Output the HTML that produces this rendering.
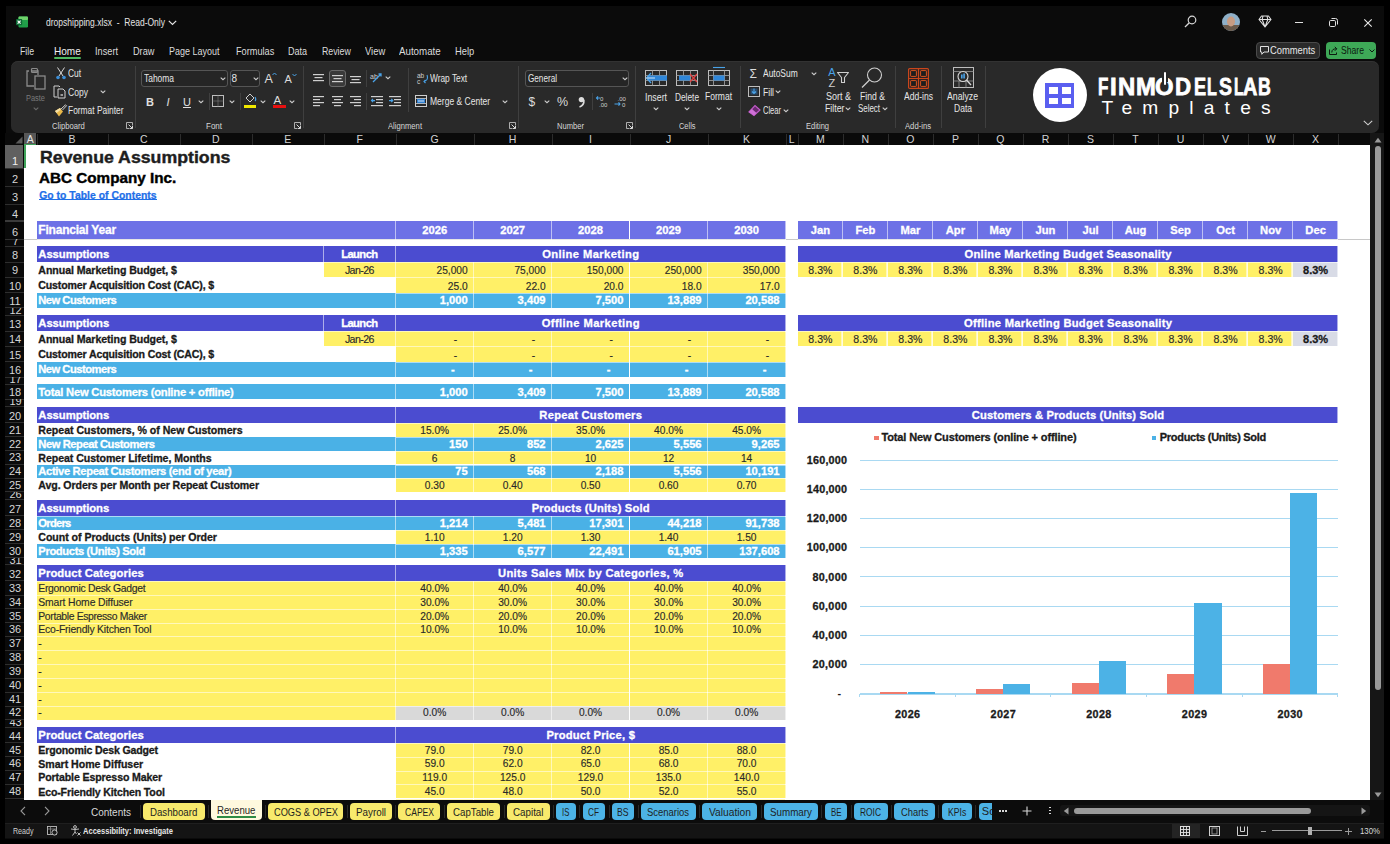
<!DOCTYPE html>
<html><head><meta charset="utf-8"><title>dropshipping.xlsx</title>
<style>
html,body{margin:0;padding:0;}
body{width:1390px;height:844px;overflow:hidden;position:relative;background:#000;font-family:'Liberation Sans', sans-serif;}
.t{position:absolute;white-space:pre;}
svg{overflow:visible;}
</style></head><body>
<div style="position:absolute;left:5.50px;top:5.60px;width:1378.60px;height:833.40px;background:#0b0b0b;"></div>
<div style="position:absolute;left:5.00px;top:133.00px;width:1379.00px;height:706.00px;background:#0b0b0b;"></div>
<svg style="position:absolute;left:16px;top:16px;" width="12" height="12" viewBox="0 0 12 12"><rect x="2.5" y="0.5" width="9.5" height="11" rx="1.2" fill="#1f9e48"/><rect x="2.5" y="0.5" width="9.5" height="3.6" rx="1" fill="#6fd26a"/><rect x="2.5" y="4" width="9.5" height="4" fill="#22a04a"/><rect x="0" y="3" width="6.2" height="6.2" rx="0.8" fill="#0d6b35"/><path d="M1.6 4.6 L4.6 7.6 M4.6 4.6 L1.6 7.6" stroke="#fff" stroke-width="1.2"/></svg>
<div class="t" style="left:46.00px;top:16.69px;font-size:11px;line-height:11px;color:#e4e4e4;transform:scaleX(0.7755);transform-origin:0 0;">dropshipping.xlsx  -  Read-Only</div>
<svg style="position:absolute;left:168px;top:20px;" width="9" height="6" viewBox="0 0 9 6"><path d="M0.8 0.8 L4.5 4.5 L8.2 0.8" stroke="#e4e4e4" stroke-width="1.2" fill="none"/></svg>
<svg style="position:absolute;left:1184px;top:15px;" width="13" height="13" viewBox="0 0 13 13"><circle cx="8" cy="5" r="3.8" stroke="#d8d8d8" stroke-width="1.2" fill="none"/><path d="M5.3 7.7 L1 12" stroke="#d8d8d8" stroke-width="1.3"/></svg>
<svg style="position:absolute;left:1222px;top:13px;" width="18" height="18" viewBox="0 0 18 18"><defs><clipPath id="av"><circle cx="9" cy="9" r="9"/></clipPath></defs><g clip-path="url(#av)"><rect width="18" height="18" fill="#8fb0c8"/><rect y="12" width="18" height="6" fill="#6b5a4a"/><ellipse cx="9" cy="8.5" rx="4" ry="5" fill="#c89c82"/></g></svg>
<svg style="position:absolute;left:1258px;top:15px;" width="14" height="13" viewBox="0 0 14 13"><path d="M3.5 1 H10.5 L13 4.5 L7 12 L1 4.5 Z M1 4.5 H13 M5 1 L4.2 4.5 L7 12 L9.8 4.5 L9 1" stroke="#e0e0e0" stroke-width="1.1" fill="none" stroke-linejoin="round"/></svg>
<div style="position:absolute;left:1294.50px;top:21.60px;width:8.50px;height:1.10px;background:#e0e0e0;"></div>
<svg style="position:absolute;left:1328.5px;top:17.5px;" width="9" height="9" viewBox="0 0 9 9"><rect x="0.5" y="2.5" width="6" height="6" rx="1.2" stroke="#e0e0e0" stroke-width="1" fill="none"/><path d="M2.5 0.5 H6.5 A2 2 0 0 1 8.5 2.5 V6.5" stroke="#e0e0e0" stroke-width="1" fill="none"/></svg>
<svg style="position:absolute;left:1363.5px;top:18.5px;" width="8" height="8" viewBox="0 0 8 8"><path d="M0.3 0.3 L7.7 7.7 M7.7 0.3 L0.3 7.7" stroke="#e8e8e8" stroke-width="1.1"/></svg>
<div class="t" style="left:20.40px;top:45.86px;font-size:10.8px;line-height:10.8px;color:#dcdcdc;transform:scaleX(0.8105);transform-origin:0 0;">File</div>
<div class="t" style="left:53.50px;top:45.86px;font-size:10.8px;line-height:10.8px;color:#f0f0f0;transform:scaleX(0.9305);transform-origin:0 0;">Home</div>
<div class="t" style="left:94.60px;top:45.86px;font-size:10.8px;line-height:10.8px;color:#dcdcdc;transform:scaleX(0.8518);transform-origin:0 0;">Insert</div>
<div class="t" style="left:132.60px;top:45.86px;font-size:10.8px;line-height:10.8px;color:#dcdcdc;transform:scaleX(0.8494);transform-origin:0 0;">Draw</div>
<div class="t" style="left:169.30px;top:45.86px;font-size:10.8px;line-height:10.8px;color:#dcdcdc;transform:scaleX(0.8312);transform-origin:0 0;">Page Layout</div>
<div class="t" style="left:235.50px;top:45.86px;font-size:10.8px;line-height:10.8px;color:#dcdcdc;transform:scaleX(0.8512);transform-origin:0 0;">Formulas</div>
<div class="t" style="left:287.70px;top:45.86px;font-size:10.8px;line-height:10.8px;color:#dcdcdc;transform:scaleX(0.8375);transform-origin:0 0;">Data</div>
<div class="t" style="left:321.60px;top:45.86px;font-size:10.8px;line-height:10.8px;color:#dcdcdc;transform:scaleX(0.8135);transform-origin:0 0;">Review</div>
<div class="t" style="left:364.70px;top:45.86px;font-size:10.8px;line-height:10.8px;color:#dcdcdc;transform:scaleX(0.8704);transform-origin:0 0;">View</div>
<div class="t" style="left:399.30px;top:45.86px;font-size:10.8px;line-height:10.8px;color:#dcdcdc;transform:scaleX(0.9023);transform-origin:0 0;">Automate</div>
<div class="t" style="left:455.40px;top:45.86px;font-size:10.8px;line-height:10.8px;color:#dcdcdc;transform:scaleX(0.8692);transform-origin:0 0;">Help</div>
<div style="position:absolute;left:53.50px;top:57.20px;width:27.30px;height:1.80px;background:#4fb860;border-radius:1px;"></div>
<div style="position:absolute;left:1255.50px;top:41.70px;width:64.10px;height:17.10px;background:#2a2a2a;border:1px solid #4a4a4a;border-radius:4px;box-sizing:border-box;"></div>
<svg style="position:absolute;left:1259.5px;top:45.5px;" width="9" height="9" viewBox="0 0 9 9"><path d="M0.5 0.5 H8.5 V6 H4 L1.8 8.3 V6 H0.5 Z" stroke="#e0e0e0" stroke-width="1" fill="none" stroke-linejoin="round"/></svg>
<div class="t" style="left:1270.00px;top:45.11px;font-size:10.5px;line-height:10.5px;color:#e8e8e8;transform:scaleX(0.8924);transform-origin:0 0;">Comments</div>
<div style="position:absolute;left:1325.90px;top:41.70px;width:50.10px;height:17.10px;background:#3ea857;border-radius:4px;"></div>
<svg style="position:absolute;left:1329px;top:45.5px;" width="9" height="9" viewBox="0 0 9 9"><path d="M0.5 3.5 V8.5 H7.5 V6.5 M2.8 6.5 C2.8 3.5 4.5 2.8 7.5 2.8 M5.8 0.8 L7.8 2.8 L5.8 4.8" stroke="#0c1a10" stroke-width="1" fill="none"/></svg>
<div class="t" style="left:1341.00px;top:45.11px;font-size:10.5px;line-height:10.5px;color:#0c1a10;transform:scaleX(0.8209);transform-origin:0 0;">Share</div>
<svg style="position:absolute;left:1368.5px;top:48.5px;" width="6" height="4" viewBox="0 0 6 4"><path d="M0.5 0.5 L3 3 L5.5 0.5" stroke="#0c1a10" stroke-width="1" fill="none"/></svg>
<div style="position:absolute;left:11.00px;top:61.20px;width:1367.50px;height:71.60px;background:#292929;border-radius:7px;box-shadow:inset 0 1px 0 #323232;"></div>
<div style="position:absolute;left:135.40px;top:66.00px;width:1.00px;height:62.00px;background:#3f3f3f;"></div>
<div style="position:absolute;left:303.30px;top:66.00px;width:1.00px;height:62.00px;background:#3f3f3f;"></div>
<div style="position:absolute;left:517.80px;top:66.00px;width:1.00px;height:62.00px;background:#3f3f3f;"></div>
<div style="position:absolute;left:634.70px;top:66.00px;width:1.00px;height:62.00px;background:#3f3f3f;"></div>
<div style="position:absolute;left:739.70px;top:66.00px;width:1.00px;height:62.00px;background:#3f3f3f;"></div>
<div style="position:absolute;left:894.80px;top:66.00px;width:1.00px;height:62.00px;background:#3f3f3f;"></div>
<div style="position:absolute;left:940.50px;top:66.00px;width:1.00px;height:62.00px;background:#3f3f3f;"></div>
<div style="position:absolute;left:984.80px;top:66.00px;width:1.00px;height:62.00px;background:#3f3f3f;"></div>
<div class="t" style="left:52.00px;top:120.87px;font-size:9.6px;line-height:9.6px;color:#d6d6d6;transform:scaleX(0.7988);transform-origin:0 0;">Clipboard</div>
<div class="t" style="left:205.50px;top:120.87px;font-size:9.6px;line-height:9.6px;color:#d6d6d6;transform:scaleX(0.8335);transform-origin:0 0;">Font</div>
<div class="t" style="left:388.00px;top:120.87px;font-size:9.6px;line-height:9.6px;color:#d6d6d6;transform:scaleX(0.7970);transform-origin:0 0;">Alignment</div>
<div class="t" style="left:556.90px;top:120.87px;font-size:9.6px;line-height:9.6px;color:#d6d6d6;transform:scaleX(0.7913);transform-origin:0 0;">Number</div>
<div class="t" style="left:678.75px;top:120.87px;font-size:9.6px;line-height:9.6px;color:#d6d6d6;transform:scaleX(0.7738);transform-origin:0 0;">Cells</div>
<div class="t" style="left:805.50px;top:120.87px;font-size:9.6px;line-height:9.6px;color:#d6d6d6;transform:scaleX(0.7841);transform-origin:0 0;">Editing</div>
<div class="t" style="left:905.00px;top:120.87px;font-size:9.6px;line-height:9.6px;color:#d6d6d6;transform:scaleX(0.7993);transform-origin:0 0;">Add-ins</div>
<svg style="position:absolute;left:126.19999999999999px;top:122.0px;" width="7" height="7" viewBox="0 0 7 7"><path d="M6.5 3 V0.5 H0.5 V6.5 H3" stroke="#bdbdbd" stroke-width="0.9" fill="none"/><path d="M2.5 2.5 L6.3 6.3 M6.5 3.6 V6.5 H3.6" stroke="#d8d8d8" stroke-width="1" fill="none"/></svg>
<svg style="position:absolute;left:294.2px;top:122.0px;" width="7" height="7" viewBox="0 0 7 7"><path d="M6.5 3 V0.5 H0.5 V6.5 H3" stroke="#bdbdbd" stroke-width="0.9" fill="none"/><path d="M2.5 2.5 L6.3 6.3 M6.5 3.6 V6.5 H3.6" stroke="#d8d8d8" stroke-width="1" fill="none"/></svg>
<svg style="position:absolute;left:509.29999999999995px;top:122.0px;" width="7" height="7" viewBox="0 0 7 7"><path d="M6.5 3 V0.5 H0.5 V6.5 H3" stroke="#bdbdbd" stroke-width="0.9" fill="none"/><path d="M2.5 2.5 L6.3 6.3 M6.5 3.6 V6.5 H3.6" stroke="#d8d8d8" stroke-width="1" fill="none"/></svg>
<svg style="position:absolute;left:625.5px;top:122.0px;" width="7" height="7" viewBox="0 0 7 7"><path d="M6.5 3 V0.5 H0.5 V6.5 H3" stroke="#bdbdbd" stroke-width="0.9" fill="none"/><path d="M2.5 2.5 L6.3 6.3 M6.5 3.6 V6.5 H3.6" stroke="#d8d8d8" stroke-width="1" fill="none"/></svg>
<svg style="position:absolute;left:25px;top:67px;" width="22" height="23" viewBox="0 0 22 23"><path d="M4 4 H2 V19 H9" stroke="#8a8a8a" stroke-width="1.3" fill="none"/><path d="M6 4 H13 V8" stroke="#8a8a8a" stroke-width="1.3" fill="none"/><rect x="6.5" y="1.5" width="6" height="4" rx="1" stroke="#8a8a8a" stroke-width="1.2" fill="none"/><rect x="10" y="9" width="10" height="13" stroke="#8a8a8a" stroke-width="1.3" fill="none"/></svg>
<div class="t" style="left:26.00px;top:92.87px;font-size:9.6px;line-height:9.6px;color:#7a7a7a;transform:scaleX(0.7745);transform-origin:0 0;">Paste</div>
<svg style="position:absolute;left:32.5px;top:106.5px;" width="6" height="4" viewBox="0 0 6 4"><path d="M0.7 0.7 L3 2.7 L5.3 0.7" stroke="#6a6a6a" stroke-width="1.1" fill="none"/></svg>
<svg style="position:absolute;left:55px;top:67px;" width="12" height="13" viewBox="0 0 12 13"><path d="M2.5 0.5 L8 9 M9.5 0.5 L4 9" stroke="#d8d8d8" stroke-width="1"/><circle cx="3" cy="10.5" r="1.8" fill="#3b8fd8"/><circle cx="9" cy="10.5" r="1.8" fill="#3b8fd8"/></svg>
<div class="t" style="left:68.00px;top:68.53px;font-size:10px;line-height:10px;color:#e6e6e6;transform:scaleX(0.8354);transform-origin:0 0;">Cut</div>
<svg style="position:absolute;left:53px;top:85px;" width="13" height="14" viewBox="0 0 13 14"><path d="M4 12 H1 V1 H6 L7 2" stroke="#cfcfcf" stroke-width="1" fill="none"/><path d="M5 4 H10 L12 6 V13 H5 Z" stroke="#cfcfcf" stroke-width="1" fill="none"/><rect x="7.5" y="9" width="2.5" height="2" fill="#9a9a9a"/></svg>
<div class="t" style="left:68.00px;top:87.53px;font-size:10px;line-height:10px;color:#e6e6e6;transform:scaleX(0.8567);transform-origin:0 0;">Copy</div>
<svg style="position:absolute;left:100px;top:90.0px;" width="6" height="4" viewBox="0 0 6 4"><path d="M0.7 0.7 L3 2.7 L5.3 0.7" stroke="#cfcfcf" stroke-width="1.1" fill="none"/></svg>
<svg style="position:absolute;left:53.5px;top:104px;" width="13" height="13" viewBox="0 0 13 13"><path d="M7 5 L11.5 0.8 L12.5 1.8 L8.5 6" stroke="#cfcfcf" stroke-width="1" fill="none"/><path d="M1 7 L6 4 L9 7.5 L5 12.5 Z" fill="#e8b84a"/><path d="M1 7 L6 4 L7 5.5 L2.5 9 Z" fill="#f4e0a8"/></svg>
<div class="t" style="left:68.00px;top:105.53px;font-size:10px;line-height:10px;color:#e6e6e6;transform:scaleX(0.8392);transform-origin:0 0;">Format Painter</div>
<div style="position:absolute;left:141.40px;top:70.10px;width:86.40px;height:17.40px;background:#252525;border:1px solid #555;border-radius:3px;box-sizing:border-box;"></div>
<div class="t" style="left:143.50px;top:73.53px;font-size:10px;line-height:10px;color:#e6e6e6;transform:scaleX(0.8433);transform-origin:0 0;">Tahoma</div>
<svg style="position:absolute;left:220px;top:77.0px;" width="6" height="4" viewBox="0 0 6 4"><path d="M0.7 0.7 L3 2.7 L5.3 0.7" stroke="#cfcfcf" stroke-width="1.1" fill="none"/></svg>
<div style="position:absolute;left:229.50px;top:70.10px;width:30.70px;height:17.40px;background:#252525;border:1px solid #555;border-radius:3px;box-sizing:border-box;"></div>
<div class="t" style="left:231.50px;top:73.53px;font-size:10px;line-height:10px;color:#e6e6e6;">8</div>
<svg style="position:absolute;left:253px;top:77.0px;" width="6" height="4" viewBox="0 0 6 4"><path d="M0.7 0.7 L3 2.7 L5.3 0.7" stroke="#cfcfcf" stroke-width="1.1" fill="none"/></svg>
<div class="t" style="left:264.50px;top:73.42px;font-size:12.5px;line-height:12.5px;color:#dcdcdc;">A</div>
<svg style="position:absolute;left:272px;top:72px;" width="5" height="4" viewBox="0 0 5 4"><path d="M0.5 3 L2.5 1 L4.5 3" stroke="#4aa3e8" stroke-width="1" fill="none"/></svg>
<div class="t" style="left:284.50px;top:73.69px;font-size:11px;line-height:11px;color:#dcdcdc;">A</div>
<svg style="position:absolute;left:291.5px;top:73px;" width="5" height="4" viewBox="0 0 5 4"><path d="M0.5 1 L2.5 3 L4.5 1" stroke="#4aa3e8" stroke-width="1" fill="none"/></svg>
<div class="t" style="left:146.00px;top:96.69px;font-size:11px;line-height:11px;color:#e0e0e0;font-weight:bold;">B</div>
<div class="t" style="left:166.50px;top:96.69px;font-size:11px;line-height:11px;color:#e0e0e0;font-style:italic;">I</div>
<div class="t" style="left:183.00px;top:96.69px;font-size:11px;line-height:11px;color:#e0e0e0;text-decoration:underline;">U</div>
<svg style="position:absolute;left:197.6px;top:99.5px;" width="6" height="4" viewBox="0 0 6 4"><path d="M0.7 0.7 L3 2.7 L5.3 0.7" stroke="#cfcfcf" stroke-width="1.1" fill="none"/></svg>
<div style="position:absolute;left:208.50px;top:93.00px;width:1.00px;height:17.00px;background:#3f3f3f;"></div>
<svg style="position:absolute;left:212px;top:95px;" width="12" height="12" viewBox="0 0 12 12"><rect x="0.5" y="0.5" width="11" height="11" stroke="#bdbdbd" stroke-width="1" fill="none"/><path d="M6 0.5 V11.5 M0.5 6 H11.5" stroke="#8a8a8a" stroke-width="1" stroke-dasharray="1 1"/></svg>
<svg style="position:absolute;left:229px;top:99.5px;" width="6" height="4" viewBox="0 0 6 4"><path d="M0.7 0.7 L3 2.7 L5.3 0.7" stroke="#cfcfcf" stroke-width="1.1" fill="none"/></svg>
<div style="position:absolute;left:240.00px;top:93.00px;width:1.00px;height:17.00px;background:#3f3f3f;"></div>
<svg style="position:absolute;left:244px;top:93px;" width="13" height="12" viewBox="0 0 13 12"><path d="M2 5 L6 1 L10 5 L6 9 Z" stroke="#cfcfcf" stroke-width="1" fill="none"/><path d="M11 4 Q12.5 6.5 11 8" stroke="#4aa3e8" stroke-width="1.2" fill="none"/></svg>
<div style="position:absolute;left:243.50px;top:104.50px;width:12.50px;height:3.00px;background:#f0e800;"></div>
<svg style="position:absolute;left:260px;top:99.5px;" width="6" height="4" viewBox="0 0 6 4"><path d="M0.7 0.7 L3 2.7 L5.3 0.7" stroke="#cfcfcf" stroke-width="1.1" fill="none"/></svg>
<div class="t" style="left:273.50px;top:95.27px;font-size:11.5px;line-height:11.5px;color:#dcdcdc;">A</div>
<div style="position:absolute;left:272.50px;top:104.50px;width:13.00px;height:3.00px;background:#e81010;"></div>
<svg style="position:absolute;left:289px;top:99.5px;" width="6" height="4" viewBox="0 0 6 4"><path d="M0.7 0.7 L3 2.7 L5.3 0.7" stroke="#cfcfcf" stroke-width="1.1" fill="none"/></svg>
<svg style="position:absolute;left:312.5px;top:74px;" width="12" height="12" viewBox="0 0 12 12"><rect x="0" y="0" width="11" height="1.2" fill="#cfcfcf"/><rect x="1.5" y="3" width="8" height="1.2" fill="#cfcfcf"/><rect x="0" y="6" width="11" height="1.2" fill="#cfcfcf"/></svg>
<div style="position:absolute;left:328.50px;top:69.80px;width:17.50px;height:17.40px;background:#3a3a3a;border:1px solid #6a6a6a;border-radius:3px;box-sizing:border-box;"></div>
<svg style="position:absolute;left:331.5px;top:74.5px;" width="12" height="12" viewBox="0 0 12 12"><rect x="0" y="0" width="11" height="1.2" fill="#cfcfcf"/><rect x="1.5" y="3" width="8" height="1.2" fill="#cfcfcf"/><rect x="0" y="6" width="11" height="1.2" fill="#cfcfcf"/></svg>
<svg style="position:absolute;left:350px;top:76px;" width="12" height="12" viewBox="0 0 12 12"><rect x="0" y="0" width="11" height="1.2" fill="#cfcfcf"/><rect x="1.5" y="3" width="8" height="1.2" fill="#cfcfcf"/><rect x="0" y="6" width="11" height="1.2" fill="#cfcfcf"/></svg>
<div style="position:absolute;left:365.70px;top:70.00px;width:1.00px;height:17.00px;background:#3f3f3f;"></div>
<svg style="position:absolute;left:370px;top:71px;" width="13" height="13" viewBox="0 0 13 13"><text x="0" y="8" font-size="7" fill="#cfcfcf" font-family="Liberation Sans">ab</text><path d="M3 11 L11 3 M8.5 3 H11 V5.5" stroke="#4aa3e8" stroke-width="1.3" fill="none"/></svg>
<svg style="position:absolute;left:385px;top:76.0px;" width="6" height="4" viewBox="0 0 6 4"><path d="M0.7 0.7 L3 2.7 L5.3 0.7" stroke="#cfcfcf" stroke-width="1.1" fill="none"/></svg>
<div style="position:absolute;left:407.60px;top:68.00px;width:1.00px;height:44.00px;background:#3f3f3f;"></div>
<svg style="position:absolute;left:416.5px;top:72px;" width="12" height="13" viewBox="0 0 12 13"><text x="0" y="6" font-size="6.5" fill="#cfcfcf" font-family="Liberation Sans">ab</text><text x="0" y="12" font-size="6.5" fill="#cfcfcf" font-family="Liberation Sans">c</text><path d="M10 3 Q12 8 7 9.5 M8.5 8 L7 9.5 L8.5 11" stroke="#4aa3e8" stroke-width="1.1" fill="none"/></svg>
<div class="t" style="left:429.70px;top:73.53px;font-size:10px;line-height:10px;color:#e6e6e6;transform:scaleX(0.8320);transform-origin:0 0;">Wrap Text</div>
<svg style="position:absolute;left:312.5px;top:96px;" width="12" height="12" viewBox="0 0 12 12"><rect x="0" y="0" width="11" height="1.2" fill="#cfcfcf"/><rect x="0" y="3" width="7" height="1.2" fill="#cfcfcf"/><rect x="0" y="6" width="11" height="1.2" fill="#cfcfcf"/><rect x="0" y="9" width="7" height="1.2" fill="#cfcfcf"/></svg>
<svg style="position:absolute;left:331.5px;top:96px;" width="12" height="12" viewBox="0 0 12 12"><rect x="0" y="0" width="11" height="1.2" fill="#cfcfcf"/><rect x="2" y="3" width="7" height="1.2" fill="#cfcfcf"/><rect x="0" y="6" width="11" height="1.2" fill="#cfcfcf"/><rect x="2" y="9" width="7" height="1.2" fill="#cfcfcf"/></svg>
<svg style="position:absolute;left:350px;top:96px;" width="12" height="12" viewBox="0 0 12 12"><rect x="0" y="0" width="11" height="1.2" fill="#cfcfcf"/><rect x="4" y="3" width="7" height="1.2" fill="#cfcfcf"/><rect x="0" y="6" width="11" height="1.2" fill="#cfcfcf"/><rect x="4" y="9" width="7" height="1.2" fill="#cfcfcf"/></svg>
<div style="position:absolute;left:365.70px;top:93.00px;width:1.00px;height:17.00px;background:#3f3f3f;"></div>
<svg style="position:absolute;left:370.5px;top:96px;" width="12" height="10" viewBox="0 0 12 10"><rect x="0" y="0" width="12" height="1.2" fill="#cfcfcf"/><rect x="5" y="3" width="7" height="1.2" fill="#cfcfcf"/><rect x="5" y="6" width="7" height="1.2" fill="#cfcfcf"/><rect x="0" y="9" width="12" height="1.2" fill="#cfcfcf"/><path d="M4 4.6 H0.5 M2 3 L0.5 4.6 L2 6.2" stroke="#4aa3e8" stroke-width="1.1" fill="none"/></svg>
<svg style="position:absolute;left:389px;top:96px;" width="12" height="10" viewBox="0 0 12 10"><rect x="0" y="0" width="12" height="1.2" fill="#cfcfcf"/><rect x="5" y="3" width="7" height="1.2" fill="#cfcfcf"/><rect x="5" y="6" width="7" height="1.2" fill="#cfcfcf"/><rect x="0" y="9" width="12" height="1.2" fill="#cfcfcf"/><path d="M0 4.6 H3.8 M2.3 3 L3.8 4.6 L2.3 6.2" stroke="#4aa3e8" stroke-width="1.1" fill="none"/></svg>
<svg style="position:absolute;left:415px;top:95px;" width="12" height="12" viewBox="0 0 12 12"><rect x="0.5" y="0.5" width="11" height="11" stroke="#cfcfcf" stroke-width="1" fill="none"/><rect x="2" y="3.5" width="8" height="5" fill="#2f7fd0"/><path d="M0.5 3.5 H11.5 M0.5 8.5 H11.5" stroke="#cfcfcf" stroke-width="0.8"/><path d="M3 6 H9" stroke="#fff" stroke-width="0.8"/></svg>
<div class="t" style="left:429.70px;top:96.53px;font-size:10px;line-height:10px;color:#e6e6e6;transform:scaleX(0.8529);transform-origin:0 0;">Merge &amp; Center</div>
<svg style="position:absolute;left:502px;top:99.5px;" width="6" height="4" viewBox="0 0 6 4"><path d="M0.7 0.7 L3 2.7 L5.3 0.7" stroke="#cfcfcf" stroke-width="1.1" fill="none"/></svg>
<div style="position:absolute;left:525.20px;top:70.40px;width:104.00px;height:16.90px;background:#252525;border:1px solid #555;border-radius:3px;box-sizing:border-box;"></div>
<div class="t" style="left:527.50px;top:73.53px;font-size:10px;line-height:10px;color:#e6e6e6;transform:scaleX(0.8152);transform-origin:0 0;">General</div>
<svg style="position:absolute;left:622px;top:77.0px;" width="6" height="4" viewBox="0 0 6 4"><path d="M0.7 0.7 L3 2.7 L5.3 0.7" stroke="#cfcfcf" stroke-width="1.1" fill="none"/></svg>
<div class="t" style="left:528.50px;top:95.84px;font-size:12px;line-height:12px;color:#dcdcdc;">$</div>
<svg style="position:absolute;left:544px;top:99.5px;" width="6" height="4" viewBox="0 0 6 4"><path d="M0.7 0.7 L3 2.7 L5.3 0.7" stroke="#cfcfcf" stroke-width="1.1" fill="none"/></svg>
<div class="t" style="left:557.00px;top:96.42px;font-size:12.5px;line-height:12.5px;color:#dcdcdc;">%</div>
<svg style="position:absolute;left:577.5px;top:95.5px;" width="7" height="12" viewBox="0 0 7 12"><circle cx="3.4" cy="3.6" r="2.7" fill="#dcdcdc"/><path d="M5.9 3.8 C6.2 7.5 4.5 10 1.5 11" stroke="#dcdcdc" stroke-width="1.6" fill="none"/></svg>
<div style="position:absolute;left:591.50px;top:93.00px;width:1.00px;height:17.00px;background:#3f3f3f;"></div>
<svg style="position:absolute;left:596px;top:95px;" width="13" height="12" viewBox="0 0 13 12"><text x="4" y="5.5" font-size="6" fill="#cfcfcf" font-family="Liberation Sans">0</text><text x="3" y="11.5" font-size="6" fill="#cfcfcf" font-family="Liberation Sans">.00</text><path d="M0.5 3 H4 M2 1.3 L0.5 3 L2 4.7" stroke="#4aa3e8" stroke-width="1.1" fill="none"/></svg>
<svg style="position:absolute;left:614px;top:95px;" width="13" height="12" viewBox="0 0 13 12"><text x="3.5" y="5.5" font-size="6" fill="#cfcfcf" font-family="Liberation Sans">.00</text><text x="8" y="11.5" font-size="6" fill="#cfcfcf" font-family="Liberation Sans">0</text><path d="M0.5 9 H6 M4.5 7.3 L6 9 L4.5 10.7" stroke="#4aa3e8" stroke-width="1.1" fill="none"/></svg>
<svg style="position:absolute;left:644.5px;top:70px;" width="22" height="16" viewBox="0 0 22 16"><rect x="0.5" y="0.5" width="21" height="15" stroke="#bdbdbd" stroke-width="1" fill="none"/><path d="M0.5 5.5 H21.5 M0.5 10.5 H21.5 M7.5 0.5 V15.5 M14.5 0.5 V15.5" stroke="#9a9a9a" stroke-width="0.9"/><rect x="3" y="5.5" width="19" height="5" fill="#2f86d8"/><path d="M6 3 L1.5 8 L6 13" stroke="#4aa3e8" stroke-width="1.3" fill="none"/><path d="M1.5 8 H10" stroke="#fff" stroke-width="0.8"/></svg>
<svg style="position:absolute;left:676px;top:70px;" width="22" height="16" viewBox="0 0 22 16"><rect x="0.5" y="0.5" width="21" height="15" stroke="#bdbdbd" stroke-width="1" fill="none"/><path d="M0.5 5.5 H21.5 M0.5 10.5 H21.5 M7.5 0.5 V15.5 M14.5 0.5 V15.5" stroke="#9a9a9a" stroke-width="0.9"/><rect x="3" y="5.5" width="11" height="5" fill="#2f86d8"/><path d="M14 4 L21 12 M21 4 L14 12" stroke="#e04040" stroke-width="1.3"/></svg>
<svg style="position:absolute;left:708px;top:70px;" width="22" height="16" viewBox="0 0 22 16"><rect x="0.5" y="0.5" width="21" height="15" stroke="#bdbdbd" stroke-width="1" fill="none"/><path d="M0.5 5.5 H21.5 M0.5 10.5 H21.5 M5.5 0.5 V15.5 M16.5 0.5 V15.5" stroke="#9a9a9a" stroke-width="0.9"/><rect x="5.5" y="5.5" width="11" height="5" fill="#2f86d8"/><path d="M5 -2.5 H17" stroke="#4aa3e8" stroke-width="1.1"/></svg>
<div class="t" style="left:644.50px;top:92.53px;font-size:10px;line-height:10px;color:#e6e6e6;transform:scaleX(0.8797);transform-origin:0 0;">Insert</div>
<div class="t" style="left:674.50px;top:92.53px;font-size:10px;line-height:10px;color:#e6e6e6;transform:scaleX(0.8303);transform-origin:0 0;">Delete</div>
<div class="t" style="left:705.00px;top:91.53px;font-size:10px;line-height:10px;color:#e6e6e6;transform:scaleX(0.8525);transform-origin:0 0;">Format</div>
<svg style="position:absolute;left:652.5px;top:106.5px;" width="6" height="4" viewBox="0 0 6 4"><path d="M0.7 0.7 L3 2.7 L5.3 0.7" stroke="#cfcfcf" stroke-width="1.1" fill="none"/></svg>
<svg style="position:absolute;left:683.5px;top:106.5px;" width="6" height="4" viewBox="0 0 6 4"><path d="M0.7 0.7 L3 2.7 L5.3 0.7" stroke="#cfcfcf" stroke-width="1.1" fill="none"/></svg>
<svg style="position:absolute;left:715.5px;top:106.5px;" width="6" height="4" viewBox="0 0 6 4"><path d="M0.7 0.7 L3 2.7 L5.3 0.7" stroke="#cfcfcf" stroke-width="1.1" fill="none"/></svg>
<div class="t" style="left:749.50px;top:67.84px;font-size:12px;line-height:12px;color:#dcdcdc;">Σ</div>
<div class="t" style="left:763.20px;top:68.53px;font-size:10px;line-height:10px;color:#e6e6e6;transform:scaleX(0.8436);transform-origin:0 0;">AutoSum</div>
<svg style="position:absolute;left:810.5px;top:71.5px;" width="6" height="4" viewBox="0 0 6 4"><path d="M0.7 0.7 L3 2.7 L5.3 0.7" stroke="#cfcfcf" stroke-width="1.1" fill="none"/></svg>
<svg style="position:absolute;left:748px;top:86px;" width="12" height="11" viewBox="0 0 12 11"><rect x="0.5" y="0.5" width="11" height="10" stroke="#bdbdbd" stroke-width="1" fill="none"/><rect x="2.5" y="2.5" width="7" height="6" fill="#2a4c6e"/><path d="M6 2.5 V7.5 M4 5.5 L6 7.5 L8 5.5" stroke="#4aa3e8" stroke-width="1.1" fill="none"/></svg>
<div class="t" style="left:763.20px;top:87.53px;font-size:10px;line-height:10px;color:#e6e6e6;transform:scaleX(0.8612);transform-origin:0 0;">Fill</div>
<svg style="position:absolute;left:775px;top:89.5px;" width="6" height="4" viewBox="0 0 6 4"><path d="M0.7 0.7 L3 2.7 L5.3 0.7" stroke="#cfcfcf" stroke-width="1.1" fill="none"/></svg>
<svg style="position:absolute;left:748px;top:104px;" width="13" height="12" viewBox="0 0 13 12"><path d="M1 8 L7 1.5 L12 6 L6 11.5 Z" stroke="#c05ac8" stroke-width="1.2" fill="#6a2a70"/><path d="M1 8 L4 5 L8.5 9 L6 11.5 Z" fill="#d070d8"/></svg>
<div class="t" style="left:763.20px;top:105.53px;font-size:10px;line-height:10px;color:#e6e6e6;transform:scaleX(0.7532);transform-origin:0 0;">Clear</div>
<svg style="position:absolute;left:783px;top:108.5px;" width="6" height="4" viewBox="0 0 6 4"><path d="M0.7 0.7 L3 2.7 L5.3 0.7" stroke="#cfcfcf" stroke-width="1.1" fill="none"/></svg>
<div class="t" style="left:828.30px;top:66.69px;font-size:11px;line-height:11px;color:#4aa3e8;">A</div>
<div class="t" style="left:828.50px;top:77.69px;font-size:11px;line-height:11px;color:#cfcfcf;">Z</div>
<svg style="position:absolute;left:837px;top:72px;" width="12" height="11" viewBox="0 0 12 11"><path d="M0.5 0.5 H11.5 L7.5 5.5 V10.5 H4.5 V5.5 Z" stroke="#cfcfcf" stroke-width="1.1" fill="none" stroke-linejoin="round"/></svg>
<div class="t" style="left:825.50px;top:91.53px;font-size:10px;line-height:10px;color:#e6e6e6;transform:scaleX(0.8997);transform-origin:0 0;">Sort &amp;</div>
<div class="t" style="left:824.75px;top:103.53px;font-size:10px;line-height:10px;color:#e6e6e6;transform:scaleX(0.8775);transform-origin:0 0;">Filter</div>
<svg style="position:absolute;left:845px;top:106.5px;" width="6" height="4" viewBox="0 0 6 4"><path d="M0.7 0.7 L3 2.7 L5.3 0.7" stroke="#cfcfcf" stroke-width="1.1" fill="none"/></svg>
<svg style="position:absolute;left:861px;top:67px;" width="22" height="21" viewBox="0 0 22 21"><circle cx="13.5" cy="8" r="7" stroke="#cfcfcf" stroke-width="1.1" fill="none"/><path d="M8.5 13 L1 20.5" stroke="#cfcfcf" stroke-width="1.2"/></svg>
<div class="t" style="left:859.70px;top:91.53px;font-size:10px;line-height:10px;color:#e6e6e6;transform:scaleX(0.8650);transform-origin:0 0;">Find &amp;</div>
<div class="t" style="left:857.60px;top:103.53px;font-size:10px;line-height:10px;color:#e6e6e6;transform:scaleX(0.7916);transform-origin:0 0;">Select</div>
<svg style="position:absolute;left:881.5px;top:106.5px;" width="6" height="4" viewBox="0 0 6 4"><path d="M0.7 0.7 L3 2.7 L5.3 0.7" stroke="#cfcfcf" stroke-width="1.1" fill="none"/></svg>
<svg style="position:absolute;left:907.5px;top:67.5px;" width="21" height="21" viewBox="0 0 21 21"><rect x="0.6" y="0.6" width="19.8" height="19.8" rx="1" stroke="#c9461c" stroke-width="1.2" fill="#2a2020"/><path d="M10.5 0.6 V20.4 M0.6 10.5 H20.4" stroke="#c9461c" stroke-width="1.2"/><rect x="2.6" y="2.6" width="5.8" height="5.8" rx="0.6" stroke="#d8541f" stroke-width="1" fill="#1d1d1d"/><rect x="12.6" y="2.6" width="5.8" height="5.8" rx="0.6" stroke="#d8541f" stroke-width="1" fill="#1d1d1d"/><rect x="2.6" y="12.6" width="5.8" height="5.8" rx="0.6" stroke="#d8541f" stroke-width="1" fill="#1d1d1d"/><rect x="12.6" y="12.6" width="5.8" height="5.8" rx="0.6" stroke="#d8541f" stroke-width="1" fill="#1d1d1d"/></svg>
<div class="t" style="left:903.50px;top:91.53px;font-size:10px;line-height:10px;color:#e6e6e6;transform:scaleX(0.8553);transform-origin:0 0;">Add-ins</div>
<svg style="position:absolute;left:952.5px;top:67px;" width="21" height="21" viewBox="0 0 21 21"><rect x="0.5" y="0.5" width="20" height="20" stroke="#bdbdbd" stroke-width="1" fill="none"/><path d="M0.5 4.5 H20.5 M0.5 14 H20.5 M6 14 V20.5 M13 14 V20.5" stroke="#8a8a8a" stroke-width="0.9"/><circle cx="10" cy="9.5" r="5" stroke="#d8d8d8" stroke-width="1.1" fill="#292929"/><rect x="8" y="7.5" width="1.6" height="4" fill="#4aa3e8"/><rect x="10.3" y="6.5" width="1.6" height="5" fill="#4aa3e8"/><path d="M13.5 13 L18 18" stroke="#d8d8d8" stroke-width="1.3"/></svg>
<div class="t" style="left:947.00px;top:91.53px;font-size:10px;line-height:10px;color:#e6e6e6;transform:scaleX(0.8714);transform-origin:0 0;">Analyze</div>
<div class="t" style="left:953.50px;top:103.53px;font-size:10px;line-height:10px;color:#e6e6e6;transform:scaleX(0.8521);transform-origin:0 0;">Data</div>
<div style="position:absolute;left:1032.6px;top:67.8px;width:54.4px;height:54.4px;border-radius:50%;background:#fff;"></div>
<div style="position:absolute;left:1044.90px;top:82.70px;width:29.50px;height:25.30px;background:#5a5ff0;"></div>
<div style="position:absolute;left:1048.70px;top:86.80px;width:9.60px;height:7.20px;background:#fff;"></div>
<div style="position:absolute;left:1061.80px;top:86.80px;width:9.10px;height:7.20px;background:#fff;"></div>
<div style="position:absolute;left:1048.70px;top:97.50px;width:9.60px;height:6.80px;background:#fff;"></div>
<div style="position:absolute;left:1061.80px;top:97.50px;width:9.10px;height:6.80px;background:#fff;"></div>
<div class="t" style="left:1098.01px;top:75.26px;font-size:24.5px;line-height:24.5px;color:#fff;font-weight:bold;transform:scaleX(0.6929);transform-origin:0 0;-webkit-text-stroke:0.8px #fff;">F</div>
<div class="t" style="left:1110.32px;top:75.26px;font-size:24.5px;line-height:24.5px;color:#fff;font-weight:bold;transform:scaleX(0.9800);transform-origin:0 0;-webkit-text-stroke:0.8px #fff;">I</div>
<div class="t" style="left:1118.03px;top:75.26px;font-size:24.5px;line-height:24.5px;color:#fff;font-weight:bold;transform:scaleX(0.9750);transform-origin:0 0;-webkit-text-stroke:0.8px #fff;">N</div>
<div class="t" style="left:1135.53px;top:75.26px;font-size:24.5px;line-height:24.5px;color:#fff;font-weight:bold;transform:scaleX(0.9722);transform-origin:0 0;-webkit-text-stroke:0.8px #fff;">M</div>
<div class="t" style="left:1155.03px;top:75.26px;font-size:24.5px;line-height:24.5px;color:#fff;font-weight:bold;transform:scaleX(0.9722);transform-origin:0 0;-webkit-text-stroke:0.8px #fff;">O</div>
<div class="t" style="left:1175.49px;top:75.26px;font-size:24.5px;line-height:24.5px;color:#fff;font-weight:bold;transform:scaleX(0.9125);transform-origin:0 0;-webkit-text-stroke:0.8px #fff;">D</div>
<div class="t" style="left:1193.66px;top:75.26px;font-size:24.5px;line-height:24.5px;color:#fff;font-weight:bold;transform:scaleX(0.7400);transform-origin:0 0;-webkit-text-stroke:0.8px #fff;">E</div>
<div class="t" style="left:1207.34px;top:75.26px;font-size:24.5px;line-height:24.5px;color:#fff;font-weight:bold;transform:scaleX(0.6571);transform-origin:0 0;-webkit-text-stroke:0.8px #fff;">L</div>
<div class="t" style="left:1219.00px;top:75.26px;font-size:24.5px;line-height:24.5px;color:#fff;font-weight:bold;transform:scaleX(0.7938);transform-origin:0 0;-webkit-text-stroke:0.8px #fff;">S</div>
<div class="t" style="left:1233.97px;top:75.26px;font-size:24.5px;line-height:24.5px;color:#fff;font-weight:bold;transform:scaleX(0.6286);transform-origin:0 0;-webkit-text-stroke:0.8px #fff;">L</div>
<div class="t" style="left:1243.40px;top:75.26px;font-size:24.5px;line-height:24.5px;color:#fff;font-weight:bold;transform:scaleX(0.8111);transform-origin:0 0;-webkit-text-stroke:0.8px #fff;">A</div>
<div class="t" style="left:1258.28px;top:75.26px;font-size:24.5px;line-height:24.5px;color:#fff;font-weight:bold;transform:scaleX(0.7250);transform-origin:0 0;-webkit-text-stroke:0.8px #fff;">B</div>
<div style="position:absolute;left:1161.60px;top:73.50px;width:6.40px;height:8.00px;background:#292929;"></div>
<div style="position:absolute;left:1163.60px;top:72.30px;width:2.40px;height:12.70px;background:#fff;border-radius:1px;"></div>
<div class="t" style="left:1101.60px;top:97.75px;font-size:19.2px;line-height:19.2px;color:#fff;letter-spacing:10.194px;">Templates</div>
<svg style="position:absolute;left:1363px;top:120px;" width="10" height="6" viewBox="0 0 10 6"><path d="M0.8 0.8 L5 4.8 L9.2 0.8" stroke="#d0d0d0" stroke-width="1.1" fill="none"/></svg>
<div style="position:absolute;left:5.00px;top:133.30px;width:1365.00px;height:11.70px;background:#0a0a0a;"></div>
<svg style="position:absolute;left:14.5px;top:135.5px;" width="8" height="8" viewBox="0 0 8 8"><path d="M7.5 0.5 V7.5 H0.5 Z" fill="#5a5a5a"/></svg>
<div style="position:absolute;left:24.20px;top:133.30px;width:12.30px;height:11.70px;background:#575757;"></div>
<div style="position:absolute;left:24.20px;top:143.50px;width:12.30px;height:1.50px;background:#3fa35a;"></div>
<div style="position:absolute;left:36.50px;top:134.00px;width:1.00px;height:11.00px;background:#2c2c2c;"></div>
<div style="position:absolute;left:107.60px;top:134.00px;width:1.00px;height:11.00px;background:#2c2c2c;"></div>
<div style="position:absolute;left:179.80px;top:134.00px;width:1.00px;height:11.00px;background:#2c2c2c;"></div>
<div style="position:absolute;left:251.70px;top:134.00px;width:1.00px;height:11.00px;background:#2c2c2c;"></div>
<div style="position:absolute;left:323.60px;top:134.00px;width:1.00px;height:11.00px;background:#2c2c2c;"></div>
<div style="position:absolute;left:395.70px;top:134.00px;width:1.00px;height:11.00px;background:#2c2c2c;"></div>
<div style="position:absolute;left:473.70px;top:134.00px;width:1.00px;height:11.00px;background:#2c2c2c;"></div>
<div style="position:absolute;left:551.60px;top:134.00px;width:1.00px;height:11.00px;background:#2c2c2c;"></div>
<div style="position:absolute;left:629.50px;top:134.00px;width:1.00px;height:11.00px;background:#2c2c2c;"></div>
<div style="position:absolute;left:707.60px;top:134.00px;width:1.00px;height:11.00px;background:#2c2c2c;"></div>
<div style="position:absolute;left:785.60px;top:134.00px;width:1.00px;height:11.00px;background:#2c2c2c;"></div>
<div style="position:absolute;left:797.90px;top:134.00px;width:1.00px;height:11.00px;background:#2c2c2c;"></div>
<div style="position:absolute;left:842.90px;top:134.00px;width:1.00px;height:11.00px;background:#2c2c2c;"></div>
<div style="position:absolute;left:887.90px;top:134.00px;width:1.00px;height:11.00px;background:#2c2c2c;"></div>
<div style="position:absolute;left:932.90px;top:134.00px;width:1.00px;height:11.00px;background:#2c2c2c;"></div>
<div style="position:absolute;left:977.90px;top:134.00px;width:1.00px;height:11.00px;background:#2c2c2c;"></div>
<div style="position:absolute;left:1023.00px;top:134.00px;width:1.00px;height:11.00px;background:#2c2c2c;"></div>
<div style="position:absolute;left:1068.00px;top:134.00px;width:1.00px;height:11.00px;background:#2c2c2c;"></div>
<div style="position:absolute;left:1113.00px;top:134.00px;width:1.00px;height:11.00px;background:#2c2c2c;"></div>
<div style="position:absolute;left:1158.00px;top:134.00px;width:1.00px;height:11.00px;background:#2c2c2c;"></div>
<div style="position:absolute;left:1203.10px;top:134.00px;width:1.00px;height:11.00px;background:#2c2c2c;"></div>
<div style="position:absolute;left:1248.10px;top:134.00px;width:1.00px;height:11.00px;background:#2c2c2c;"></div>
<div style="position:absolute;left:1293.20px;top:134.00px;width:1.00px;height:11.00px;background:#2c2c2c;"></div>
<div style="position:absolute;left:1338.00px;top:134.00px;width:1.00px;height:11.00px;background:#2c2c2c;"></div>
<div class="t" style="left:26.85px;top:134.11px;font-size:10.5px;line-height:10.5px;color:#e8e8e8;">A</div>
<div class="t" style="left:68.55px;top:134.11px;font-size:10.5px;line-height:10.5px;color:#d2d2d2;">B</div>
<div class="t" style="left:139.91px;top:134.11px;font-size:10.5px;line-height:10.5px;color:#d2d2d2;">C</div>
<div class="t" style="left:211.96px;top:134.11px;font-size:10.5px;line-height:10.5px;color:#d2d2d2;">D</div>
<div class="t" style="left:284.15px;top:134.11px;font-size:10.5px;line-height:10.5px;color:#d2d2d2;">E</div>
<div class="t" style="left:356.44px;top:134.11px;font-size:10.5px;line-height:10.5px;color:#d2d2d2;">F</div>
<div class="t" style="left:430.62px;top:134.11px;font-size:10.5px;line-height:10.5px;color:#d2d2d2;">G</div>
<div class="t" style="left:508.86px;top:134.11px;font-size:10.5px;line-height:10.5px;color:#d2d2d2;">H</div>
<div class="t" style="left:589.09px;top:134.11px;font-size:10.5px;line-height:10.5px;color:#d2d2d2;">I</div>
<div class="t" style="left:665.92px;top:134.11px;font-size:10.5px;line-height:10.5px;color:#d2d2d2;">J</div>
<div class="t" style="left:743.10px;top:134.11px;font-size:10.5px;line-height:10.5px;color:#d2d2d2;">K</div>
<div class="t" style="left:788.83px;top:134.11px;font-size:10.5px;line-height:10.5px;color:#d2d2d2;">L</div>
<div class="t" style="left:816.03px;top:134.11px;font-size:10.5px;line-height:10.5px;color:#d2d2d2;">M</div>
<div class="t" style="left:861.61px;top:134.11px;font-size:10.5px;line-height:10.5px;color:#d2d2d2;">N</div>
<div class="t" style="left:906.32px;top:134.11px;font-size:10.5px;line-height:10.5px;color:#d2d2d2;">O</div>
<div class="t" style="left:951.90px;top:134.11px;font-size:10.5px;line-height:10.5px;color:#d2d2d2;">P</div>
<div class="t" style="left:996.37px;top:134.11px;font-size:10.5px;line-height:10.5px;color:#d2d2d2;">Q</div>
<div class="t" style="left:1041.71px;top:134.11px;font-size:10.5px;line-height:10.5px;color:#d2d2d2;">R</div>
<div class="t" style="left:1087.00px;top:134.11px;font-size:10.5px;line-height:10.5px;color:#d2d2d2;">S</div>
<div class="t" style="left:1132.29px;top:134.11px;font-size:10.5px;line-height:10.5px;color:#d2d2d2;">T</div>
<div class="t" style="left:1176.76px;top:134.11px;font-size:10.5px;line-height:10.5px;color:#d2d2d2;">U</div>
<div class="t" style="left:1222.10px;top:134.11px;font-size:10.5px;line-height:10.5px;color:#d2d2d2;">V</div>
<div class="t" style="left:1265.69px;top:134.11px;font-size:10.5px;line-height:10.5px;color:#d2d2d2;">W</div>
<div class="t" style="left:1312.10px;top:134.11px;font-size:10.5px;line-height:10.5px;color:#d2d2d2;">X</div>
<div style="position:absolute;left:5.00px;top:145.00px;width:19.20px;height:655.00px;background:#0a0a0a;"></div>
<div style="position:absolute;left:24.20px;top:145.00px;width:1345.80px;height:655.00px;background:#ffffff;"></div>
<div style="position:absolute;left:5.30px;top:145.00px;width:18.10px;height:22.80px;background:#606060;"></div>
<div style="position:absolute;left:24.20px;top:145.00px;width:1.50px;height:23.00px;background:#3fa35a;"></div>
<div style="position:absolute;left:5.00px;top:167.50px;width:19.20px;height:1.00px;background:#2e2e2e;"></div>
<div class="t" style="left:11.94px;top:155.69px;font-size:11px;line-height:11px;color:#f0f0f0;">1</div>
<div style="position:absolute;left:5.00px;top:186.00px;width:19.20px;height:1.00px;background:#2e2e2e;"></div>
<div class="t" style="left:11.94px;top:173.69px;font-size:11px;line-height:11px;color:#d6d6d6;">2</div>
<div style="position:absolute;left:5.00px;top:203.50px;width:19.20px;height:1.00px;background:#2e2e2e;"></div>
<div class="t" style="left:11.94px;top:191.69px;font-size:11px;line-height:11px;color:#d6d6d6;">3</div>
<div style="position:absolute;left:5.00px;top:220.70px;width:19.20px;height:1.00px;background:#2e2e2e;"></div>
<div class="t" style="left:11.94px;top:208.69px;font-size:11px;line-height:11px;color:#d6d6d6;">4</div>
<div style="position:absolute;left:5.00px;top:238.70px;width:19.20px;height:1.00px;background:#2e2e2e;"></div>
<div class="t" style="left:11.94px;top:226.69px;font-size:11px;line-height:11px;color:#d6d6d6;">6</div>
<div style="position:absolute;left:5.00px;top:245.70px;width:19.20px;height:1.00px;background:#2e2e2e;"></div>
<div style="position:absolute;left:5px;top:239.20px;width:19px;height:6.50px;overflow:hidden;"><div class="t" style="left:1px;width:19px;text-align:center;top:-3px;font-size:11px;line-height:11px;color:#d6d6d6;">7</div></div>
<div style="position:absolute;left:5.00px;top:261.60px;width:19.20px;height:1.00px;background:#2e2e2e;"></div>
<div class="t" style="left:11.94px;top:249.69px;font-size:11px;line-height:11px;color:#d6d6d6;">8</div>
<div style="position:absolute;left:5.00px;top:276.90px;width:19.20px;height:1.00px;background:#2e2e2e;"></div>
<div class="t" style="left:11.94px;top:264.69px;font-size:11px;line-height:11px;color:#d6d6d6;">9</div>
<div style="position:absolute;left:5.00px;top:292.20px;width:19.20px;height:1.00px;background:#2e2e2e;"></div>
<div class="t" style="left:8.88px;top:280.69px;font-size:11px;line-height:11px;color:#d6d6d6;">10</div>
<div style="position:absolute;left:5.00px;top:307.30px;width:19.20px;height:1.00px;background:#2e2e2e;"></div>
<div class="t" style="left:9.29px;top:295.69px;font-size:11px;line-height:11px;color:#d6d6d6;">11</div>
<div style="position:absolute;left:5.00px;top:314.90px;width:19.20px;height:1.00px;background:#2e2e2e;"></div>
<div style="position:absolute;left:5px;top:307.80px;width:19px;height:7.10px;overflow:hidden;"><div class="t" style="left:1px;width:19px;text-align:center;top:-3px;font-size:11px;line-height:11px;color:#d6d6d6;">12</div></div>
<div style="position:absolute;left:5.00px;top:330.50px;width:19.20px;height:1.00px;background:#2e2e2e;"></div>
<div class="t" style="left:8.88px;top:318.69px;font-size:11px;line-height:11px;color:#d6d6d6;">13</div>
<div style="position:absolute;left:5.00px;top:345.90px;width:19.20px;height:1.00px;background:#2e2e2e;"></div>
<div class="t" style="left:8.88px;top:333.69px;font-size:11px;line-height:11px;color:#d6d6d6;">14</div>
<div style="position:absolute;left:5.00px;top:361.30px;width:19.20px;height:1.00px;background:#2e2e2e;"></div>
<div class="t" style="left:8.88px;top:349.69px;font-size:11px;line-height:11px;color:#d6d6d6;">15</div>
<div style="position:absolute;left:5.00px;top:376.50px;width:19.20px;height:1.00px;background:#2e2e2e;"></div>
<div class="t" style="left:8.88px;top:364.69px;font-size:11px;line-height:11px;color:#d6d6d6;">16</div>
<div style="position:absolute;left:5.00px;top:383.70px;width:19.20px;height:1.00px;background:#2e2e2e;"></div>
<div style="position:absolute;left:5px;top:377.00px;width:19px;height:6.70px;overflow:hidden;"><div class="t" style="left:1px;width:19px;text-align:center;top:-3px;font-size:11px;line-height:11px;color:#d6d6d6;">17</div></div>
<div style="position:absolute;left:5.00px;top:398.80px;width:19.20px;height:1.00px;background:#2e2e2e;"></div>
<div class="t" style="left:8.88px;top:386.69px;font-size:11px;line-height:11px;color:#d6d6d6;">18</div>
<div style="position:absolute;left:5.00px;top:406.30px;width:19.20px;height:1.00px;background:#2e2e2e;"></div>
<div style="position:absolute;left:5px;top:399.30px;width:19px;height:7.00px;overflow:hidden;"><div class="t" style="left:1px;width:19px;text-align:center;top:-3px;font-size:11px;line-height:11px;color:#d6d6d6;">19</div></div>
<div style="position:absolute;left:5.00px;top:422.30px;width:19.20px;height:1.00px;background:#2e2e2e;"></div>
<div class="t" style="left:8.88px;top:410.69px;font-size:11px;line-height:11px;color:#d6d6d6;">20</div>
<div style="position:absolute;left:5.00px;top:436.20px;width:19.20px;height:1.00px;background:#2e2e2e;"></div>
<div class="t" style="left:8.88px;top:424.69px;font-size:11px;line-height:11px;color:#d6d6d6;">21</div>
<div style="position:absolute;left:5.00px;top:450.30px;width:19.20px;height:1.00px;background:#2e2e2e;"></div>
<div class="t" style="left:8.88px;top:438.69px;font-size:11px;line-height:11px;color:#d6d6d6;">22</div>
<div style="position:absolute;left:5.00px;top:464.00px;width:19.20px;height:1.00px;background:#2e2e2e;"></div>
<div class="t" style="left:8.88px;top:451.69px;font-size:11px;line-height:11px;color:#d6d6d6;">23</div>
<div style="position:absolute;left:5.00px;top:477.70px;width:19.20px;height:1.00px;background:#2e2e2e;"></div>
<div class="t" style="left:8.88px;top:465.69px;font-size:11px;line-height:11px;color:#d6d6d6;">24</div>
<div style="position:absolute;left:5.00px;top:491.40px;width:19.20px;height:1.00px;background:#2e2e2e;"></div>
<div class="t" style="left:8.88px;top:479.69px;font-size:11px;line-height:11px;color:#d6d6d6;">25</div>
<div style="position:absolute;left:5.00px;top:499.20px;width:19.20px;height:1.00px;background:#2e2e2e;"></div>
<div style="position:absolute;left:5px;top:491.90px;width:19px;height:7.30px;overflow:hidden;"><div class="t" style="left:1px;width:19px;text-align:center;top:-3px;font-size:11px;line-height:11px;color:#d6d6d6;">26</div></div>
<div style="position:absolute;left:5.00px;top:515.40px;width:19.20px;height:1.00px;background:#2e2e2e;"></div>
<div class="t" style="left:8.88px;top:503.69px;font-size:11px;line-height:11px;color:#d6d6d6;">27</div>
<div style="position:absolute;left:5.00px;top:529.30px;width:19.20px;height:1.00px;background:#2e2e2e;"></div>
<div class="t" style="left:8.88px;top:517.69px;font-size:11px;line-height:11px;color:#d6d6d6;">28</div>
<div style="position:absolute;left:5.00px;top:543.40px;width:19.20px;height:1.00px;background:#2e2e2e;"></div>
<div class="t" style="left:8.88px;top:531.69px;font-size:11px;line-height:11px;color:#d6d6d6;">29</div>
<div style="position:absolute;left:5.00px;top:557.30px;width:19.20px;height:1.00px;background:#2e2e2e;"></div>
<div class="t" style="left:8.88px;top:545.69px;font-size:11px;line-height:11px;color:#d6d6d6;">30</div>
<div style="position:absolute;left:5.00px;top:564.20px;width:19.20px;height:1.00px;background:#2e2e2e;"></div>
<div style="position:absolute;left:5px;top:557.80px;width:19px;height:6.40px;overflow:hidden;"><div class="t" style="left:1px;width:19px;text-align:center;top:-3px;font-size:11px;line-height:11px;color:#d6d6d6;">31</div></div>
<div style="position:absolute;left:5.00px;top:580.30px;width:19.20px;height:1.00px;background:#2e2e2e;"></div>
<div class="t" style="left:8.88px;top:568.69px;font-size:11px;line-height:11px;color:#d6d6d6;">32</div>
<div style="position:absolute;left:5.00px;top:594.50px;width:19.20px;height:1.00px;background:#2e2e2e;"></div>
<div class="t" style="left:8.88px;top:582.69px;font-size:11px;line-height:11px;color:#d6d6d6;">33</div>
<div style="position:absolute;left:5.00px;top:608.40px;width:19.20px;height:1.00px;background:#2e2e2e;"></div>
<div class="t" style="left:8.88px;top:596.69px;font-size:11px;line-height:11px;color:#d6d6d6;">34</div>
<div style="position:absolute;left:5.00px;top:622.20px;width:19.20px;height:1.00px;background:#2e2e2e;"></div>
<div class="t" style="left:8.88px;top:610.69px;font-size:11px;line-height:11px;color:#d6d6d6;">35</div>
<div style="position:absolute;left:5.00px;top:635.90px;width:19.20px;height:1.00px;background:#2e2e2e;"></div>
<div class="t" style="left:8.88px;top:623.69px;font-size:11px;line-height:11px;color:#d6d6d6;">36</div>
<div style="position:absolute;left:5.00px;top:649.70px;width:19.20px;height:1.00px;background:#2e2e2e;"></div>
<div class="t" style="left:8.88px;top:637.69px;font-size:11px;line-height:11px;color:#d6d6d6;">37</div>
<div style="position:absolute;left:5.00px;top:663.80px;width:19.20px;height:1.00px;background:#2e2e2e;"></div>
<div class="t" style="left:8.88px;top:651.69px;font-size:11px;line-height:11px;color:#d6d6d6;">38</div>
<div style="position:absolute;left:5.00px;top:677.80px;width:19.20px;height:1.00px;background:#2e2e2e;"></div>
<div class="t" style="left:8.88px;top:665.69px;font-size:11px;line-height:11px;color:#d6d6d6;">39</div>
<div style="position:absolute;left:5.00px;top:691.80px;width:19.20px;height:1.00px;background:#2e2e2e;"></div>
<div class="t" style="left:8.88px;top:679.69px;font-size:11px;line-height:11px;color:#d6d6d6;">40</div>
<div style="position:absolute;left:5.00px;top:705.70px;width:19.20px;height:1.00px;background:#2e2e2e;"></div>
<div class="t" style="left:8.88px;top:693.69px;font-size:11px;line-height:11px;color:#d6d6d6;">41</div>
<div style="position:absolute;left:5.00px;top:719.20px;width:19.20px;height:1.00px;background:#2e2e2e;"></div>
<div class="t" style="left:8.88px;top:706.69px;font-size:11px;line-height:11px;color:#d6d6d6;">42</div>
<div style="position:absolute;left:5.00px;top:726.50px;width:19.20px;height:1.00px;background:#2e2e2e;"></div>
<div style="position:absolute;left:5px;top:719.70px;width:19px;height:6.80px;overflow:hidden;"><div class="t" style="left:1px;width:19px;text-align:center;top:-3px;font-size:11px;line-height:11px;color:#d6d6d6;">43</div></div>
<div style="position:absolute;left:5.00px;top:742.20px;width:19.20px;height:1.00px;background:#2e2e2e;"></div>
<div class="t" style="left:8.88px;top:730.69px;font-size:11px;line-height:11px;color:#d6d6d6;">44</div>
<div style="position:absolute;left:5.00px;top:756.30px;width:19.20px;height:1.00px;background:#2e2e2e;"></div>
<div class="t" style="left:8.88px;top:744.69px;font-size:11px;line-height:11px;color:#d6d6d6;">45</div>
<div style="position:absolute;left:5.00px;top:770.10px;width:19.20px;height:1.00px;background:#2e2e2e;"></div>
<div class="t" style="left:8.88px;top:757.69px;font-size:11px;line-height:11px;color:#d6d6d6;">46</div>
<div style="position:absolute;left:5.00px;top:783.80px;width:19.20px;height:1.00px;background:#2e2e2e;"></div>
<div class="t" style="left:8.88px;top:771.69px;font-size:11px;line-height:11px;color:#d6d6d6;">47</div>
<div style="position:absolute;left:5.00px;top:798.00px;width:19.20px;height:1.00px;background:#2e2e2e;"></div>
<div class="t" style="left:8.88px;top:785.69px;font-size:11px;line-height:11px;color:#d6d6d6;">48</div>
<div style="position:absolute;left:5.00px;top:220.00px;width:19.20px;height:2.00px;background:#3a3a3a;"></div>
<div style="position:absolute;left:24.20px;top:239.00px;width:1345.80px;height:1.00px;background:#c8c8c8;"></div>
<div style="position:absolute;left:1370.00px;top:133.30px;width:14.00px;height:666.70px;background:#161616;"></div>
<svg style="position:absolute;left:1373.5px;top:136.5px;" width="8" height="6" viewBox="0 0 8 6"><path d="M0.5 5.5 L4 0.8 L7.5 5.5 Z" fill="#9a9a9a"/></svg>
<div style="position:absolute;left:1374.50px;top:145.70px;width:6.50px;height:543.90px;background:#9a9a9a;border-radius:3px;"></div>
<svg style="position:absolute;left:1373.5px;top:791.5px;" width="8" height="6" viewBox="0 0 8 6"><path d="M0.5 0.5 L4 5.2 L7.5 0.5 Z" fill="#9a9a9a"/></svg>
<div style="position:absolute;left:5.00px;top:800.00px;width:1379.00px;height:22.50px;background:#0c0c0c;"></div>
<svg style="position:absolute;left:20px;top:806px;" width="6" height="10" viewBox="0 0 6 10"><path d="M5 0.8 L1 5 L5 9.2" stroke="#9a9a9a" stroke-width="1.1" fill="none"/></svg>
<svg style="position:absolute;left:44px;top:806px;" width="6" height="10" viewBox="0 0 6 10"><path d="M1 0.8 L5 5 L1 9.2" stroke="#9a9a9a" stroke-width="1.1" fill="none"/></svg>
<div class="t" style="left:90.70px;top:806.69px;font-size:11px;line-height:11px;color:#d8d8d8;transform:scaleX(0.9085);transform-origin:0 0;">Contents</div>
<div style="position:absolute;left:143.00px;top:802.80px;width:61.70px;height:17.20px;background:#f8ea6c;border-radius:4px;"></div>
<div class="t" style="left:150.20px;top:807.03px;font-size:10.6px;line-height:10.6px;color:#1e1e1e;transform:scaleX(0.9127);transform-origin:0 0;">Dashboard</div>
<div style="position:absolute;left:267.90px;top:802.80px;width:75.40px;height:17.20px;background:#f8ea6c;border-radius:4px;"></div>
<div class="t" style="left:273.60px;top:807.03px;font-size:10.6px;line-height:10.6px;color:#1e1e1e;transform:scaleX(0.8697);transform-origin:0 0;">COGS &amp; OPEX</div>
<div style="position:absolute;left:349.70px;top:802.80px;width:42.50px;height:17.20px;background:#f8ea6c;border-radius:4px;"></div>
<div class="t" style="left:355.95px;top:807.03px;font-size:10.6px;line-height:10.6px;color:#1e1e1e;transform:scaleX(0.9265);transform-origin:0 0;">Payroll</div>
<div style="position:absolute;left:398.40px;top:802.80px;width:42.00px;height:17.20px;background:#f8ea6c;border-radius:4px;"></div>
<div class="t" style="left:404.90px;top:807.03px;font-size:10.6px;line-height:10.6px;color:#1e1e1e;transform:scaleX(0.8075);transform-origin:0 0;">CAPEX</div>
<div style="position:absolute;left:446.60px;top:802.80px;width:53.90px;height:17.20px;background:#f8ea6c;border-radius:4px;"></div>
<div class="t" style="left:453.05px;top:807.03px;font-size:10.6px;line-height:10.6px;color:#1e1e1e;transform:scaleX(0.9160);transform-origin:0 0;">CapTable</div>
<div style="position:absolute;left:506.70px;top:802.80px;width:43.60px;height:17.20px;background:#f8ea6c;border-radius:4px;"></div>
<div class="t" style="left:513.25px;top:807.03px;font-size:10.6px;line-height:10.6px;color:#1e1e1e;transform:scaleX(0.9249);transform-origin:0 0;">Capital</div>
<div style="position:absolute;left:556.00px;top:802.80px;width:19.80px;height:17.20px;background:#4cb3e6;border-radius:4px;"></div>
<div class="t" style="left:562.25px;top:807.03px;font-size:10.6px;line-height:10.6px;color:#1e1e1e;transform:scaleX(0.7293);transform-origin:0 0;">IS</div>
<div style="position:absolute;left:582.50px;top:802.80px;width:22.80px;height:17.20px;background:#4cb3e6;border-radius:4px;"></div>
<div class="t" style="left:588.40px;top:807.03px;font-size:10.6px;line-height:10.6px;color:#1e1e1e;transform:scaleX(0.7790);transform-origin:0 0;">CF</div>
<div style="position:absolute;left:612.00px;top:802.80px;width:22.40px;height:17.20px;background:#4cb3e6;border-radius:4px;"></div>
<div class="t" style="left:617.40px;top:807.03px;font-size:10.6px;line-height:10.6px;color:#1e1e1e;transform:scaleX(0.8208);transform-origin:0 0;">BS</div>
<div style="position:absolute;left:641.00px;top:802.80px;width:54.70px;height:17.20px;background:#4cb3e6;border-radius:4px;"></div>
<div class="t" style="left:647.35px;top:807.03px;font-size:10.6px;line-height:10.6px;color:#1e1e1e;transform:scaleX(0.8916);transform-origin:0 0;">Scenarios</div>
<div style="position:absolute;left:702.30px;top:802.80px;width:55.00px;height:17.20px;background:#4cb3e6;border-radius:4px;"></div>
<div class="t" style="left:708.80px;top:807.03px;font-size:10.6px;line-height:10.6px;color:#1e1e1e;transform:scaleX(0.9680);transform-origin:0 0;">Valuation</div>
<div style="position:absolute;left:763.60px;top:802.80px;width:54.40px;height:17.20px;background:#4cb3e6;border-radius:4px;"></div>
<div class="t" style="left:769.80px;top:807.03px;font-size:10.6px;line-height:10.6px;color:#1e1e1e;transform:scaleX(0.9267);transform-origin:0 0;">Summary</div>
<div style="position:absolute;left:824.80px;top:802.80px;width:22.20px;height:17.20px;background:#4cb3e6;border-radius:4px;"></div>
<div class="t" style="left:830.60px;top:807.03px;font-size:10.6px;line-height:10.6px;color:#1e1e1e;transform:scaleX(0.7501);transform-origin:0 0;">BE</div>
<div style="position:absolute;left:854.00px;top:802.80px;width:33.70px;height:17.20px;background:#4cb3e6;border-radius:4px;"></div>
<div class="t" style="left:860.35px;top:807.03px;font-size:10.6px;line-height:10.6px;color:#1e1e1e;transform:scaleX(0.7929);transform-origin:0 0;">ROIC</div>
<div style="position:absolute;left:894.40px;top:802.80px;width:40.60px;height:17.20px;background:#4cb3e6;border-radius:4px;"></div>
<div class="t" style="left:900.95px;top:807.03px;font-size:10.6px;line-height:10.6px;color:#1e1e1e;transform:scaleX(0.8814);transform-origin:0 0;">Charts</div>
<div style="position:absolute;left:941.70px;top:802.80px;width:30.30px;height:17.20px;background:#4cb3e6;border-radius:4px;"></div>
<div class="t" style="left:947.75px;top:807.03px;font-size:10.6px;line-height:10.6px;color:#1e1e1e;transform:scaleX(0.8135);transform-origin:0 0;">KPIs</div>
<div style="position:absolute;left:140.00px;top:805.00px;width:1.00px;height:13.00px;background:#2a2a2a;"></div>
<div style="position:absolute;left:207.50px;top:805.00px;width:1.00px;height:13.00px;background:#2a2a2a;"></div>
<div style="position:absolute;left:264.50px;top:805.00px;width:1.00px;height:13.00px;background:#2a2a2a;"></div>
<div style="position:absolute;left:346.50px;top:805.00px;width:1.00px;height:13.00px;background:#2a2a2a;"></div>
<div style="position:absolute;left:395.30px;top:805.00px;width:1.00px;height:13.00px;background:#2a2a2a;"></div>
<div style="position:absolute;left:443.50px;top:805.00px;width:1.00px;height:13.00px;background:#2a2a2a;"></div>
<div style="position:absolute;left:503.60px;top:805.00px;width:1.00px;height:13.00px;background:#2a2a2a;"></div>
<div style="position:absolute;left:553.20px;top:805.00px;width:1.00px;height:13.00px;background:#2a2a2a;"></div>
<div style="position:absolute;left:579.20px;top:805.00px;width:1.00px;height:13.00px;background:#2a2a2a;"></div>
<div style="position:absolute;left:608.70px;top:805.00px;width:1.00px;height:13.00px;background:#2a2a2a;"></div>
<div style="position:absolute;left:637.70px;top:805.00px;width:1.00px;height:13.00px;background:#2a2a2a;"></div>
<div style="position:absolute;left:698.90px;top:805.00px;width:1.00px;height:13.00px;background:#2a2a2a;"></div>
<div style="position:absolute;left:760.50px;top:805.00px;width:1.00px;height:13.00px;background:#2a2a2a;"></div>
<div style="position:absolute;left:821.40px;top:805.00px;width:1.00px;height:13.00px;background:#2a2a2a;"></div>
<div style="position:absolute;left:850.50px;top:805.00px;width:1.00px;height:13.00px;background:#2a2a2a;"></div>
<div style="position:absolute;left:891.00px;top:805.00px;width:1.00px;height:13.00px;background:#2a2a2a;"></div>
<div style="position:absolute;left:938.40px;top:805.00px;width:1.00px;height:13.00px;background:#2a2a2a;"></div>
<div style="position:absolute;left:975.40px;top:805.00px;width:1.00px;height:13.00px;background:#2a2a2a;"></div>
<div style="position:absolute;left:978.8px;top:802.8px;width:13.2px;height:17.2px;overflow:hidden;border-radius:4px 0 0 4px;background:#4cb3e6;"><div class="t" style="left:3px;top:3.2px;font-size:11px;line-height:11px;color:#1e1e1e;">Sc</div></div>
<div style="position:absolute;left:210.90px;top:800.00px;width:51.10px;height:19.60px;background:#fff9de;border-radius:0 0 4px 4px;"></div>
<div class="t" style="left:216.80px;top:804.69px;font-size:11px;line-height:11px;color:#1e1e1e;transform:scaleX(0.8721);transform-origin:0 0;">Revenue</div>
<div style="position:absolute;left:217.00px;top:816.20px;width:39.00px;height:1.40px;background:#2e8b45;"></div>
<div style="position:absolute;left:999.20px;top:810.00px;width:1.60px;height:1.60px;background:#d8d8d8;"></div>
<div style="position:absolute;left:1002.20px;top:810.00px;width:1.60px;height:1.60px;background:#d8d8d8;"></div>
<div style="position:absolute;left:1005.20px;top:810.00px;width:1.60px;height:1.60px;background:#d8d8d8;"></div>
<svg style="position:absolute;left:1021.5px;top:806px;" width="10" height="10" viewBox="0 0 10 10"><path d="M5 0.5 V9.5 M0.5 5 H9.5" stroke="#d8d8d8" stroke-width="1.1"/></svg>
<div style="position:absolute;left:1049.00px;top:806.70px;width:1.60px;height:1.60px;background:#d8d8d8;"></div>
<div style="position:absolute;left:1049.00px;top:809.70px;width:1.60px;height:1.60px;background:#d8d8d8;"></div>
<div style="position:absolute;left:1049.00px;top:812.70px;width:1.60px;height:1.60px;background:#d8d8d8;"></div>
<div style="position:absolute;left:1060.00px;top:804.70px;width:310.00px;height:11.30px;background:#151515;border-radius:3px;"></div>
<svg style="position:absolute;left:1063px;top:806.5px;" width="6" height="8" viewBox="0 0 6 8"><path d="M5.5 0.5 L0.8 4 L5.5 7.5 Z" fill="#9a9a9a"/></svg>
<div style="position:absolute;left:1074.00px;top:808.00px;width:236.50px;height:5.80px;background:#9a9a9a;border-radius:3px;"></div>
<svg style="position:absolute;left:1361px;top:806.5px;" width="6" height="8" viewBox="0 0 6 8"><path d="M0.5 0.5 L5.2 4 L0.5 7.5 Z" fill="#9a9a9a"/></svg>
<div style="position:absolute;left:5.00px;top:822.80px;width:1379.00px;height:15.70px;background:#141414;"></div>
<div style="position:absolute;left:5.00px;top:822.80px;width:1379.00px;height:1.00px;background:#1f1f1f;"></div>
<div class="t" style="left:12.60px;top:825.96px;font-size:9.5px;line-height:9.5px;color:#cfcfcf;transform:scaleX(0.7465);transform-origin:0 0;">Ready</div>
<svg style="position:absolute;left:47px;top:825.5px;" width="11" height="10" viewBox="0 0 11 10"><rect x="0.5" y="0.5" width="9" height="8" stroke="#bdbdbd" stroke-width="0.9" fill="none"/><path d="M0.5 3 H9.5 M3.5 0.5 V8.5" stroke="#8a8a8a" stroke-width="0.8"/><circle cx="7.5" cy="6.5" r="2.6" fill="#1c1c1c" stroke="#d0d0d0" stroke-width="0.9"/></svg>
<svg style="position:absolute;left:70px;top:825px;" width="11" height="11" viewBox="0 0 11 11"><circle cx="5" cy="2" r="1.4" stroke="#d0d0d0" stroke-width="0.9" fill="none"/><path d="M1 4 L5 4.5 L9 4 M5 4.5 V7 L2.5 10.5 M5 7 L6.5 9 M7.5 7.5 L10.5 10.5 M10.5 7.5 L7.5 10.5" stroke="#d0d0d0" stroke-width="0.9" fill="none"/></svg>
<div class="t" style="left:83.00px;top:825.96px;font-size:9.5px;line-height:9.5px;color:#e6e6e6;font-weight:bold;transform:scaleX(0.7928);transform-origin:0 0;">Accessibility: Investigate</div>
<div style="position:absolute;left:1171.60px;top:823.80px;width:28.40px;height:14.70px;background:#242424;"></div>
<svg style="position:absolute;left:1180px;top:825.5px;" width="10" height="10" viewBox="0 0 10 10"><rect x="0.5" y="0.5" width="9" height="9" stroke="#e0e0e0" stroke-width="1" fill="none"/><path d="M3.5 0.5 V9.5 M6.5 0.5 V9.5 M0.5 3.5 H9.5 M0.5 6.5 H9.5" stroke="#e0e0e0" stroke-width="0.9"/></svg>
<svg style="position:absolute;left:1208.5px;top:825.5px;" width="11" height="10" viewBox="0 0 11 10"><rect x="0.5" y="0.5" width="10" height="9" stroke="#cfcfcf" stroke-width="1" fill="none"/><rect x="3" y="2" width="5" height="6" stroke="#9a9a9a" stroke-width="0.9" fill="none"/></svg>
<svg style="position:absolute;left:1237px;top:825.5px;" width="11" height="10" viewBox="0 0 11 10"><path d="M0.5 0.5 V9.5 H10.5 V0.5 M3.5 0.5 V5.5 H7.5 V0.5" stroke="#cfcfcf" stroke-width="1" fill="none"/></svg>
<div style="position:absolute;left:1260.50px;top:830.50px;width:5.50px;height:0.90px;background:#9a9a9a;"></div>
<div style="position:absolute;left:1271.50px;top:830.30px;width:70.50px;height:1.20px;background:#9a9a9a;"></div>
<div style="position:absolute;left:1307.50px;top:826.50px;width:4.50px;height:8.50px;background:#b0b0b0;"></div>
<svg style="position:absolute;left:1344.5px;top:827.5px;" width="7" height="7" viewBox="0 0 7 7"><path d="M3.5 0 V7 M0 3.5 H7" stroke="#9a9a9a" stroke-width="1"/></svg>
<div class="t" style="left:1360.00px;top:825.96px;font-size:9.5px;line-height:9.5px;color:#d8d8d8;transform:scaleX(0.8231);transform-origin:0 0;">130%</div>
<div class="t" style="left:39.80px;top:149.29px;font-size:16.2px;line-height:16.2px;color:#1e1e1e;font-weight:bold;transform:scaleX(1.0945);transform-origin:0 0;-webkit-text-stroke:0.4px #1e1e1e;">Revenue Assumptions</div>
<div class="t" style="left:39.20px;top:170.98px;font-size:14.2px;line-height:14.2px;color:#000;font-weight:bold;transform:scaleX(1.0744);transform-origin:0 0;-webkit-text-stroke:0.4px #000;">ABC Company Inc.</div>
<div class="t" style="left:39.20px;top:191.20px;font-size:10.4px;line-height:10.4px;color:#1f6fe8;font-weight:bold;letter-spacing:0.019px;-webkit-text-stroke:0.25px #1f6fe8;">Go to Table of Contents</div>
<div style="position:absolute;left:39.20px;top:199.40px;width:117.40px;height:1.00px;background:#1f6fe8;"></div>
<div style="position:absolute;left:36.50px;top:221.20px;width:359.20px;height:18.00px;background:#6d71e6;"></div>
<div class="t" style="left:38.30px;top:223.84px;font-size:12px;line-height:12px;color:#fff;font-weight:bold;letter-spacing:-0.208px;-webkit-text-stroke:0.3px #fff;">Financial Year</div>
<div style="position:absolute;left:395.70px;top:221.20px;width:78.00px;height:18.00px;background:#6d71e6;"></div>
<div class="t" style="left:422.26px;top:224.52px;font-size:11.2px;line-height:11.2px;color:#fff;font-weight:bold;-webkit-text-stroke:0.3px #fff;">2026</div>
<div style="position:absolute;left:473.70px;top:221.20px;width:77.90px;height:18.00px;background:#6d71e6;"></div>
<div class="t" style="left:500.21px;top:224.52px;font-size:11.2px;line-height:11.2px;color:#fff;font-weight:bold;-webkit-text-stroke:0.3px #fff;">2027</div>
<div style="position:absolute;left:551.60px;top:221.20px;width:77.90px;height:18.00px;background:#6d71e6;"></div>
<div class="t" style="left:578.11px;top:224.52px;font-size:11.2px;line-height:11.2px;color:#fff;font-weight:bold;-webkit-text-stroke:0.3px #fff;">2028</div>
<div style="position:absolute;left:629.50px;top:221.20px;width:78.10px;height:18.00px;background:#6d71e6;"></div>
<div class="t" style="left:656.11px;top:224.52px;font-size:11.2px;line-height:11.2px;color:#fff;font-weight:bold;-webkit-text-stroke:0.3px #fff;">2029</div>
<div style="position:absolute;left:707.60px;top:221.20px;width:78.00px;height:18.00px;background:#6d71e6;"></div>
<div class="t" style="left:734.16px;top:224.52px;font-size:11.2px;line-height:11.2px;color:#fff;font-weight:bold;-webkit-text-stroke:0.3px #fff;">2030</div>
<div style="position:absolute;left:797.90px;top:221.20px;width:45.00px;height:18.00px;background:#6d71e6;"></div>
<div class="t" style="left:810.76px;top:224.52px;font-size:11.2px;line-height:11.2px;color:#fff;font-weight:bold;-webkit-text-stroke:0.3px #fff;">Jan</div>
<div style="position:absolute;left:842.90px;top:221.20px;width:45.00px;height:18.00px;background:#6d71e6;"></div>
<div class="t" style="left:855.46px;top:224.52px;font-size:11.2px;line-height:11.2px;color:#fff;font-weight:bold;-webkit-text-stroke:0.3px #fff;">Feb</div>
<div style="position:absolute;left:887.90px;top:221.20px;width:45.00px;height:18.00px;background:#6d71e6;"></div>
<div class="t" style="left:900.45px;top:224.52px;font-size:11.2px;line-height:11.2px;color:#fff;font-weight:bold;-webkit-text-stroke:0.3px #fff;">Mar</div>
<div style="position:absolute;left:932.90px;top:221.20px;width:45.00px;height:18.00px;background:#6d71e6;"></div>
<div class="t" style="left:945.77px;top:224.52px;font-size:11.2px;line-height:11.2px;color:#fff;font-weight:bold;-webkit-text-stroke:0.3px #fff;">Apr</div>
<div style="position:absolute;left:977.90px;top:221.20px;width:45.10px;height:18.00px;background:#6d71e6;"></div>
<div class="t" style="left:989.57px;top:224.52px;font-size:11.2px;line-height:11.2px;color:#fff;font-weight:bold;-webkit-text-stroke:0.3px #fff;">May</div>
<div style="position:absolute;left:1023.00px;top:221.20px;width:45.00px;height:18.00px;background:#6d71e6;"></div>
<div class="t" style="left:1035.56px;top:224.52px;font-size:11.2px;line-height:11.2px;color:#fff;font-weight:bold;-webkit-text-stroke:0.3px #fff;">Jun</div>
<div style="position:absolute;left:1068.00px;top:221.20px;width:45.00px;height:18.00px;background:#6d71e6;"></div>
<div class="t" style="left:1082.42px;top:224.52px;font-size:11.2px;line-height:11.2px;color:#fff;font-weight:bold;-webkit-text-stroke:0.3px #fff;">Jul</div>
<div style="position:absolute;left:1113.00px;top:221.20px;width:45.00px;height:18.00px;background:#6d71e6;"></div>
<div class="t" style="left:1124.63px;top:224.52px;font-size:11.2px;line-height:11.2px;color:#fff;font-weight:bold;-webkit-text-stroke:0.3px #fff;">Aug</div>
<div style="position:absolute;left:1158.00px;top:221.20px;width:45.10px;height:18.00px;background:#6d71e6;"></div>
<div class="t" style="left:1170.29px;top:224.52px;font-size:11.2px;line-height:11.2px;color:#fff;font-weight:bold;-webkit-text-stroke:0.3px #fff;">Sep</div>
<div style="position:absolute;left:1203.10px;top:221.20px;width:45.00px;height:18.00px;background:#6d71e6;"></div>
<div class="t" style="left:1216.28px;top:224.52px;font-size:11.2px;line-height:11.2px;color:#fff;font-weight:bold;-webkit-text-stroke:0.3px #fff;">Oct</div>
<div style="position:absolute;left:1248.10px;top:221.20px;width:45.10px;height:18.00px;background:#6d71e6;"></div>
<div class="t" style="left:1260.08px;top:224.52px;font-size:11.2px;line-height:11.2px;color:#fff;font-weight:bold;-webkit-text-stroke:0.3px #fff;">Nov</div>
<div style="position:absolute;left:1293.20px;top:221.20px;width:44.80px;height:18.00px;background:#6d71e6;"></div>
<div class="t" style="left:1305.34px;top:224.52px;font-size:11.2px;line-height:11.2px;color:#fff;font-weight:bold;-webkit-text-stroke:0.3px #fff;">Dec</div>
<div style="position:absolute;left:36.50px;top:246.20px;width:287.10px;height:15.90px;background:#4b4cd0;"></div>
<div style="position:absolute;left:323.60px;top:246.20px;width:72.10px;height:15.90px;background:#4b4cd0;"></div>
<div class="t" style="left:341.15px;top:248.52px;font-size:11.2px;line-height:11.2px;color:#fff;font-weight:bold;letter-spacing:-0.556px;-webkit-text-stroke:0.3px #fff;">Launch</div>
<div class="t" style="left:38.30px;top:249.43px;font-size:11.3px;line-height:11.3px;color:#fff;font-weight:bold;letter-spacing:-0.065px;-webkit-text-stroke:0.3px #fff;">Assumptions</div>
<div style="position:absolute;left:395.70px;top:246.20px;width:389.90px;height:15.90px;background:#4b4cd0;"></div>
<div class="t" style="left:542.25px;top:248.52px;font-size:11.2px;line-height:11.2px;color:#fff;font-weight:bold;letter-spacing:0.403px;-webkit-text-stroke:0.3px #fff;">Online Marketing</div>
<div style="position:absolute;left:797.90px;top:246.20px;width:540.10px;height:15.90px;background:#4b4cd0;"></div>
<div class="t" style="left:964.45px;top:248.52px;font-size:11.2px;line-height:11.2px;color:#fff;font-weight:bold;letter-spacing:0.274px;-webkit-text-stroke:0.3px #fff;">Online Marketing Budget Seasonality</div>
<div class="t" style="left:38.30px;top:265.03px;font-size:10.6px;line-height:10.6px;color:#1a1a1a;font-weight:bold;letter-spacing:-0.055px;-webkit-text-stroke:0.3px #1a1a1a;">Annual Marketing Budget, $</div>
<div style="position:absolute;left:323.60px;top:262.10px;width:72.10px;height:15.30px;background:#fff067;"></div>
<div class="t" style="left:344.90px;top:265.03px;font-size:10.6px;line-height:10.6px;color:#2a2a2a;letter-spacing:-0.578px;-webkit-text-stroke:0.15px #2a2a2a;">Jan-26</div>
<div style="position:absolute;left:395.70px;top:262.10px;width:78.00px;height:15.30px;background:#fff067;"></div>
<div class="t" style="left:436.54px;top:266.37px;font-size:10.2px;line-height:10.2px;color:#2a2a2a;-webkit-text-stroke:0.15px #2a2a2a;">25,000</div>
<div style="position:absolute;left:473.70px;top:262.10px;width:77.90px;height:15.30px;background:#fff067;"></div>
<div class="t" style="left:514.44px;top:266.37px;font-size:10.2px;line-height:10.2px;color:#2a2a2a;-webkit-text-stroke:0.15px #2a2a2a;">75,000</div>
<div style="position:absolute;left:551.60px;top:262.10px;width:77.90px;height:15.30px;background:#fff067;"></div>
<div class="t" style="left:586.67px;top:266.37px;font-size:10.2px;line-height:10.2px;color:#2a2a2a;-webkit-text-stroke:0.15px #2a2a2a;">150,000</div>
<div style="position:absolute;left:629.50px;top:262.10px;width:78.10px;height:15.30px;background:#fff067;"></div>
<div class="t" style="left:664.77px;top:266.37px;font-size:10.2px;line-height:10.2px;color:#2a2a2a;-webkit-text-stroke:0.15px #2a2a2a;">250,000</div>
<div style="position:absolute;left:707.60px;top:262.10px;width:78.00px;height:15.30px;background:#fff067;"></div>
<div class="t" style="left:742.77px;top:266.37px;font-size:10.2px;line-height:10.2px;color:#2a2a2a;-webkit-text-stroke:0.15px #2a2a2a;">350,000</div>
<div style="position:absolute;left:797.90px;top:262.10px;width:45.00px;height:15.30px;background:#fff067;"></div>
<div class="t" style="left:808.33px;top:265.03px;font-size:10.6px;line-height:10.6px;color:#2a2a2a;-webkit-text-stroke:0.15px #2a2a2a;">8.3%</div>
<div style="position:absolute;left:842.90px;top:262.10px;width:45.00px;height:15.30px;background:#fff067;"></div>
<div class="t" style="left:853.33px;top:265.03px;font-size:10.6px;line-height:10.6px;color:#2a2a2a;-webkit-text-stroke:0.15px #2a2a2a;">8.3%</div>
<div style="position:absolute;left:887.90px;top:262.10px;width:45.00px;height:15.30px;background:#fff067;"></div>
<div class="t" style="left:898.33px;top:265.03px;font-size:10.6px;line-height:10.6px;color:#2a2a2a;-webkit-text-stroke:0.15px #2a2a2a;">8.3%</div>
<div style="position:absolute;left:932.90px;top:262.10px;width:45.00px;height:15.30px;background:#fff067;"></div>
<div class="t" style="left:943.33px;top:265.03px;font-size:10.6px;line-height:10.6px;color:#2a2a2a;-webkit-text-stroke:0.15px #2a2a2a;">8.3%</div>
<div style="position:absolute;left:977.90px;top:262.10px;width:45.10px;height:15.30px;background:#fff067;"></div>
<div class="t" style="left:988.38px;top:265.03px;font-size:10.6px;line-height:10.6px;color:#2a2a2a;-webkit-text-stroke:0.15px #2a2a2a;">8.3%</div>
<div style="position:absolute;left:1023.00px;top:262.10px;width:45.00px;height:15.30px;background:#fff067;"></div>
<div class="t" style="left:1033.43px;top:265.03px;font-size:10.6px;line-height:10.6px;color:#2a2a2a;-webkit-text-stroke:0.15px #2a2a2a;">8.3%</div>
<div style="position:absolute;left:1068.00px;top:262.10px;width:45.00px;height:15.30px;background:#fff067;"></div>
<div class="t" style="left:1078.43px;top:265.03px;font-size:10.6px;line-height:10.6px;color:#2a2a2a;-webkit-text-stroke:0.15px #2a2a2a;">8.3%</div>
<div style="position:absolute;left:1113.00px;top:262.10px;width:45.00px;height:15.30px;background:#fff067;"></div>
<div class="t" style="left:1123.43px;top:265.03px;font-size:10.6px;line-height:10.6px;color:#2a2a2a;-webkit-text-stroke:0.15px #2a2a2a;">8.3%</div>
<div style="position:absolute;left:1158.00px;top:262.10px;width:45.10px;height:15.30px;background:#fff067;"></div>
<div class="t" style="left:1168.48px;top:265.03px;font-size:10.6px;line-height:10.6px;color:#2a2a2a;-webkit-text-stroke:0.15px #2a2a2a;">8.3%</div>
<div style="position:absolute;left:1203.10px;top:262.10px;width:45.00px;height:15.30px;background:#fff067;"></div>
<div class="t" style="left:1213.53px;top:265.03px;font-size:10.6px;line-height:10.6px;color:#2a2a2a;-webkit-text-stroke:0.15px #2a2a2a;">8.3%</div>
<div style="position:absolute;left:1248.10px;top:262.10px;width:45.10px;height:15.30px;background:#fff067;"></div>
<div class="t" style="left:1258.58px;top:265.03px;font-size:10.6px;line-height:10.6px;color:#2a2a2a;-webkit-text-stroke:0.15px #2a2a2a;">8.3%</div>
<div style="position:absolute;left:1293.20px;top:262.10px;width:44.80px;height:15.30px;background:#d8dbe6;"></div>
<div class="t" style="left:1303.06px;top:264.69px;font-size:11px;line-height:11px;color:#1a1a1a;font-weight:bold;-webkit-text-stroke:0.3px #1a1a1a;">8.3%</div>
<div class="t" style="left:38.30px;top:280.03px;font-size:10.6px;line-height:10.6px;color:#1a1a1a;font-weight:bold;letter-spacing:-0.154px;-webkit-text-stroke:0.3px #1a1a1a;">Customer Acquisition Cost (CAC), $</div>
<div style="position:absolute;left:395.70px;top:277.40px;width:78.00px;height:15.30px;background:#fff067;"></div>
<div class="t" style="left:447.87px;top:282.37px;font-size:10.2px;line-height:10.2px;color:#2a2a2a;-webkit-text-stroke:0.15px #2a2a2a;">25.0</div>
<div style="position:absolute;left:473.70px;top:277.40px;width:77.90px;height:15.30px;background:#fff067;"></div>
<div class="t" style="left:525.77px;top:282.37px;font-size:10.2px;line-height:10.2px;color:#2a2a2a;-webkit-text-stroke:0.15px #2a2a2a;">22.0</div>
<div style="position:absolute;left:551.60px;top:277.40px;width:77.90px;height:15.30px;background:#fff067;"></div>
<div class="t" style="left:603.67px;top:282.37px;font-size:10.2px;line-height:10.2px;color:#2a2a2a;-webkit-text-stroke:0.15px #2a2a2a;">20.0</div>
<div style="position:absolute;left:629.50px;top:277.40px;width:78.10px;height:15.30px;background:#fff067;"></div>
<div class="t" style="left:681.77px;top:282.37px;font-size:10.2px;line-height:10.2px;color:#2a2a2a;-webkit-text-stroke:0.15px #2a2a2a;">18.0</div>
<div style="position:absolute;left:707.60px;top:277.40px;width:78.00px;height:15.30px;background:#fff067;"></div>
<div class="t" style="left:759.77px;top:282.37px;font-size:10.2px;line-height:10.2px;color:#2a2a2a;-webkit-text-stroke:0.15px #2a2a2a;">17.0</div>
<div style="position:absolute;left:36.50px;top:292.70px;width:359.20px;height:15.10px;background:#4ab1e6;"></div>
<div class="t" style="left:38.30px;top:294.52px;font-size:11.2px;line-height:11.2px;color:#fff;font-weight:bold;letter-spacing:-0.513px;-webkit-text-stroke:0.3px #fff;">New Customers</div>
<div style="position:absolute;left:395.70px;top:292.70px;width:78.00px;height:15.10px;background:#4ab1e6;"></div>
<div class="t" style="left:439.70px;top:294.52px;font-size:11.2px;line-height:11.2px;color:#fff;font-weight:bold;-webkit-text-stroke:0.3px #fff;">1,000</div>
<div style="position:absolute;left:473.70px;top:292.70px;width:77.90px;height:15.10px;background:#4ab1e6;"></div>
<div class="t" style="left:517.60px;top:294.52px;font-size:11.2px;line-height:11.2px;color:#fff;font-weight:bold;-webkit-text-stroke:0.3px #fff;">3,409</div>
<div style="position:absolute;left:551.60px;top:292.70px;width:77.90px;height:15.10px;background:#4ab1e6;"></div>
<div class="t" style="left:595.50px;top:294.52px;font-size:11.2px;line-height:11.2px;color:#fff;font-weight:bold;-webkit-text-stroke:0.3px #fff;">7,500</div>
<div style="position:absolute;left:629.50px;top:292.70px;width:78.10px;height:15.10px;background:#4ab1e6;"></div>
<div class="t" style="left:667.38px;top:294.52px;font-size:11.2px;line-height:11.2px;color:#fff;font-weight:bold;-webkit-text-stroke:0.3px #fff;">13,889</div>
<div style="position:absolute;left:707.60px;top:292.70px;width:78.00px;height:15.10px;background:#4ab1e6;"></div>
<div class="t" style="left:745.38px;top:294.52px;font-size:11.2px;line-height:11.2px;color:#fff;font-weight:bold;-webkit-text-stroke:0.3px #fff;">20,588</div>
<div style="position:absolute;left:36.50px;top:315.40px;width:287.10px;height:15.60px;background:#4b4cd0;"></div>
<div style="position:absolute;left:323.60px;top:315.40px;width:72.10px;height:15.60px;background:#4b4cd0;"></div>
<div class="t" style="left:341.15px;top:317.52px;font-size:11.2px;line-height:11.2px;color:#fff;font-weight:bold;letter-spacing:-0.556px;-webkit-text-stroke:0.3px #fff;">Launch</div>
<div class="t" style="left:38.30px;top:318.43px;font-size:11.3px;line-height:11.3px;color:#fff;font-weight:bold;letter-spacing:-0.065px;-webkit-text-stroke:0.3px #fff;">Assumptions</div>
<div style="position:absolute;left:395.70px;top:315.40px;width:389.90px;height:15.60px;background:#4b4cd0;"></div>
<div class="t" style="left:541.65px;top:317.52px;font-size:11.2px;line-height:11.2px;color:#fff;font-weight:bold;letter-spacing:0.414px;-webkit-text-stroke:0.3px #fff;">Offline Marketing</div>
<div style="position:absolute;left:797.90px;top:315.40px;width:540.10px;height:15.60px;background:#4b4cd0;"></div>
<div class="t" style="left:963.95px;top:317.52px;font-size:11.2px;line-height:11.2px;color:#fff;font-weight:bold;letter-spacing:0.277px;-webkit-text-stroke:0.3px #fff;">Offline Marketing Budget Seasonality</div>
<div class="t" style="left:38.30px;top:334.03px;font-size:10.6px;line-height:10.6px;color:#1a1a1a;font-weight:bold;letter-spacing:-0.055px;-webkit-text-stroke:0.3px #1a1a1a;">Annual Marketing Budget, $</div>
<div style="position:absolute;left:323.60px;top:331.00px;width:72.10px;height:15.40px;background:#fff067;"></div>
<div class="t" style="left:344.90px;top:334.03px;font-size:10.6px;line-height:10.6px;color:#2a2a2a;letter-spacing:-0.578px;-webkit-text-stroke:0.15px #2a2a2a;">Jan-26</div>
<div style="position:absolute;left:395.70px;top:331.00px;width:78.00px;height:15.40px;background:#fff067;"></div>
<div class="t" style="left:453.81px;top:335.37px;font-size:10.2px;line-height:10.2px;color:#2a2a2a;-webkit-text-stroke:0.15px #2a2a2a;">-</div>
<div style="position:absolute;left:473.70px;top:331.00px;width:77.90px;height:15.40px;background:#fff067;"></div>
<div class="t" style="left:531.71px;top:335.37px;font-size:10.2px;line-height:10.2px;color:#2a2a2a;-webkit-text-stroke:0.15px #2a2a2a;">-</div>
<div style="position:absolute;left:551.60px;top:331.00px;width:77.90px;height:15.40px;background:#fff067;"></div>
<div class="t" style="left:609.61px;top:335.37px;font-size:10.2px;line-height:10.2px;color:#2a2a2a;-webkit-text-stroke:0.15px #2a2a2a;">-</div>
<div style="position:absolute;left:629.50px;top:331.00px;width:78.10px;height:15.40px;background:#fff067;"></div>
<div class="t" style="left:687.71px;top:335.37px;font-size:10.2px;line-height:10.2px;color:#2a2a2a;-webkit-text-stroke:0.15px #2a2a2a;">-</div>
<div style="position:absolute;left:707.60px;top:331.00px;width:78.00px;height:15.40px;background:#fff067;"></div>
<div class="t" style="left:765.71px;top:335.37px;font-size:10.2px;line-height:10.2px;color:#2a2a2a;-webkit-text-stroke:0.15px #2a2a2a;">-</div>
<div style="position:absolute;left:797.90px;top:331.00px;width:45.00px;height:15.40px;background:#fff067;"></div>
<div class="t" style="left:808.33px;top:334.03px;font-size:10.6px;line-height:10.6px;color:#2a2a2a;-webkit-text-stroke:0.15px #2a2a2a;">8.3%</div>
<div style="position:absolute;left:842.90px;top:331.00px;width:45.00px;height:15.40px;background:#fff067;"></div>
<div class="t" style="left:853.33px;top:334.03px;font-size:10.6px;line-height:10.6px;color:#2a2a2a;-webkit-text-stroke:0.15px #2a2a2a;">8.3%</div>
<div style="position:absolute;left:887.90px;top:331.00px;width:45.00px;height:15.40px;background:#fff067;"></div>
<div class="t" style="left:898.33px;top:334.03px;font-size:10.6px;line-height:10.6px;color:#2a2a2a;-webkit-text-stroke:0.15px #2a2a2a;">8.3%</div>
<div style="position:absolute;left:932.90px;top:331.00px;width:45.00px;height:15.40px;background:#fff067;"></div>
<div class="t" style="left:943.33px;top:334.03px;font-size:10.6px;line-height:10.6px;color:#2a2a2a;-webkit-text-stroke:0.15px #2a2a2a;">8.3%</div>
<div style="position:absolute;left:977.90px;top:331.00px;width:45.10px;height:15.40px;background:#fff067;"></div>
<div class="t" style="left:988.38px;top:334.03px;font-size:10.6px;line-height:10.6px;color:#2a2a2a;-webkit-text-stroke:0.15px #2a2a2a;">8.3%</div>
<div style="position:absolute;left:1023.00px;top:331.00px;width:45.00px;height:15.40px;background:#fff067;"></div>
<div class="t" style="left:1033.43px;top:334.03px;font-size:10.6px;line-height:10.6px;color:#2a2a2a;-webkit-text-stroke:0.15px #2a2a2a;">8.3%</div>
<div style="position:absolute;left:1068.00px;top:331.00px;width:45.00px;height:15.40px;background:#fff067;"></div>
<div class="t" style="left:1078.43px;top:334.03px;font-size:10.6px;line-height:10.6px;color:#2a2a2a;-webkit-text-stroke:0.15px #2a2a2a;">8.3%</div>
<div style="position:absolute;left:1113.00px;top:331.00px;width:45.00px;height:15.40px;background:#fff067;"></div>
<div class="t" style="left:1123.43px;top:334.03px;font-size:10.6px;line-height:10.6px;color:#2a2a2a;-webkit-text-stroke:0.15px #2a2a2a;">8.3%</div>
<div style="position:absolute;left:1158.00px;top:331.00px;width:45.10px;height:15.40px;background:#fff067;"></div>
<div class="t" style="left:1168.48px;top:334.03px;font-size:10.6px;line-height:10.6px;color:#2a2a2a;-webkit-text-stroke:0.15px #2a2a2a;">8.3%</div>
<div style="position:absolute;left:1203.10px;top:331.00px;width:45.00px;height:15.40px;background:#fff067;"></div>
<div class="t" style="left:1213.53px;top:334.03px;font-size:10.6px;line-height:10.6px;color:#2a2a2a;-webkit-text-stroke:0.15px #2a2a2a;">8.3%</div>
<div style="position:absolute;left:1248.10px;top:331.00px;width:45.10px;height:15.40px;background:#fff067;"></div>
<div class="t" style="left:1258.58px;top:334.03px;font-size:10.6px;line-height:10.6px;color:#2a2a2a;-webkit-text-stroke:0.15px #2a2a2a;">8.3%</div>
<div style="position:absolute;left:1293.20px;top:331.00px;width:44.80px;height:15.40px;background:#d8dbe6;"></div>
<div class="t" style="left:1303.06px;top:333.69px;font-size:11px;line-height:11px;color:#1a1a1a;font-weight:bold;-webkit-text-stroke:0.3px #1a1a1a;">8.3%</div>
<div class="t" style="left:38.30px;top:349.03px;font-size:10.6px;line-height:10.6px;color:#1a1a1a;font-weight:bold;letter-spacing:-0.154px;-webkit-text-stroke:0.3px #1a1a1a;">Customer Acquisition Cost (CAC), $</div>
<div style="position:absolute;left:395.70px;top:346.40px;width:78.00px;height:15.40px;background:#fff067;"></div>
<div class="t" style="left:453.81px;top:351.37px;font-size:10.2px;line-height:10.2px;color:#2a2a2a;-webkit-text-stroke:0.15px #2a2a2a;">-</div>
<div style="position:absolute;left:473.70px;top:346.40px;width:77.90px;height:15.40px;background:#fff067;"></div>
<div class="t" style="left:531.71px;top:351.37px;font-size:10.2px;line-height:10.2px;color:#2a2a2a;-webkit-text-stroke:0.15px #2a2a2a;">-</div>
<div style="position:absolute;left:551.60px;top:346.40px;width:77.90px;height:15.40px;background:#fff067;"></div>
<div class="t" style="left:609.61px;top:351.37px;font-size:10.2px;line-height:10.2px;color:#2a2a2a;-webkit-text-stroke:0.15px #2a2a2a;">-</div>
<div style="position:absolute;left:629.50px;top:346.40px;width:78.10px;height:15.40px;background:#fff067;"></div>
<div class="t" style="left:687.71px;top:351.37px;font-size:10.2px;line-height:10.2px;color:#2a2a2a;-webkit-text-stroke:0.15px #2a2a2a;">-</div>
<div style="position:absolute;left:707.60px;top:346.40px;width:78.00px;height:15.40px;background:#fff067;"></div>
<div class="t" style="left:765.71px;top:351.37px;font-size:10.2px;line-height:10.2px;color:#2a2a2a;-webkit-text-stroke:0.15px #2a2a2a;">-</div>
<div style="position:absolute;left:36.50px;top:361.80px;width:359.20px;height:15.20px;background:#4ab1e6;"></div>
<div class="t" style="left:38.30px;top:363.52px;font-size:11.2px;line-height:11.2px;color:#fff;font-weight:bold;letter-spacing:-0.513px;-webkit-text-stroke:0.3px #fff;">New Customers</div>
<div style="position:absolute;left:395.70px;top:361.80px;width:78.00px;height:15.20px;background:#4ab1e6;"></div>
<div class="t" style="left:450.97px;top:363.52px;font-size:11.2px;line-height:11.2px;color:#fff;font-weight:bold;-webkit-text-stroke:0.3px #fff;">-</div>
<div style="position:absolute;left:473.70px;top:361.80px;width:77.90px;height:15.20px;background:#4ab1e6;"></div>
<div class="t" style="left:528.87px;top:363.52px;font-size:11.2px;line-height:11.2px;color:#fff;font-weight:bold;-webkit-text-stroke:0.3px #fff;">-</div>
<div style="position:absolute;left:551.60px;top:361.80px;width:77.90px;height:15.20px;background:#4ab1e6;"></div>
<div class="t" style="left:606.77px;top:363.52px;font-size:11.2px;line-height:11.2px;color:#fff;font-weight:bold;-webkit-text-stroke:0.3px #fff;">-</div>
<div style="position:absolute;left:629.50px;top:361.80px;width:78.10px;height:15.20px;background:#4ab1e6;"></div>
<div class="t" style="left:684.87px;top:363.52px;font-size:11.2px;line-height:11.2px;color:#fff;font-weight:bold;-webkit-text-stroke:0.3px #fff;">-</div>
<div style="position:absolute;left:707.60px;top:361.80px;width:78.00px;height:15.20px;background:#4ab1e6;"></div>
<div class="t" style="left:762.87px;top:363.52px;font-size:11.2px;line-height:11.2px;color:#fff;font-weight:bold;-webkit-text-stroke:0.3px #fff;">-</div>
<div style="position:absolute;left:36.50px;top:384.20px;width:359.20px;height:15.10px;background:#4ab1e6;"></div>
<div class="t" style="left:38.30px;top:386.52px;font-size:11.2px;line-height:11.2px;color:#fff;font-weight:bold;letter-spacing:-0.212px;-webkit-text-stroke:0.3px #fff;">Total New Customers (online + offline)</div>
<div style="position:absolute;left:395.70px;top:384.20px;width:78.00px;height:15.10px;background:#4ab1e6;"></div>
<div class="t" style="left:439.70px;top:386.52px;font-size:11.2px;line-height:11.2px;color:#fff;font-weight:bold;-webkit-text-stroke:0.3px #fff;">1,000</div>
<div style="position:absolute;left:473.70px;top:384.20px;width:77.90px;height:15.10px;background:#4ab1e6;"></div>
<div class="t" style="left:517.60px;top:386.52px;font-size:11.2px;line-height:11.2px;color:#fff;font-weight:bold;-webkit-text-stroke:0.3px #fff;">3,409</div>
<div style="position:absolute;left:551.60px;top:384.20px;width:77.90px;height:15.10px;background:#4ab1e6;"></div>
<div class="t" style="left:595.50px;top:386.52px;font-size:11.2px;line-height:11.2px;color:#fff;font-weight:bold;-webkit-text-stroke:0.3px #fff;">7,500</div>
<div style="position:absolute;left:629.50px;top:384.20px;width:78.10px;height:15.10px;background:#4ab1e6;"></div>
<div class="t" style="left:667.38px;top:386.52px;font-size:11.2px;line-height:11.2px;color:#fff;font-weight:bold;-webkit-text-stroke:0.3px #fff;">13,889</div>
<div style="position:absolute;left:707.60px;top:384.20px;width:78.00px;height:15.10px;background:#4ab1e6;"></div>
<div class="t" style="left:745.38px;top:386.52px;font-size:11.2px;line-height:11.2px;color:#fff;font-weight:bold;-webkit-text-stroke:0.3px #fff;">20,588</div>
<div style="position:absolute;left:36.50px;top:406.80px;width:359.20px;height:16.00px;background:#4b4cd0;"></div>
<div class="t" style="left:38.30px;top:410.43px;font-size:11.3px;line-height:11.3px;color:#fff;font-weight:bold;letter-spacing:-0.065px;-webkit-text-stroke:0.3px #fff;">Assumptions</div>
<div style="position:absolute;left:395.70px;top:406.80px;width:389.90px;height:16.00px;background:#4b4cd0;"></div>
<div class="t" style="left:539.35px;top:409.52px;font-size:11.2px;line-height:11.2px;color:#fff;font-weight:bold;letter-spacing:0.250px;-webkit-text-stroke:0.3px #fff;">Repeat Customers</div>
<div style="position:absolute;left:797.90px;top:406.80px;width:540.10px;height:16.00px;background:#4b4cd0;"></div>
<div class="t" style="left:971.70px;top:409.52px;font-size:11.2px;line-height:11.2px;color:#fff;font-weight:bold;letter-spacing:0.169px;-webkit-text-stroke:0.3px #fff;">Customers &amp; Products (Units) Sold</div>
<div class="t" style="left:38.30px;top:425.03px;font-size:10.6px;line-height:10.6px;color:#1a1a1a;font-weight:bold;letter-spacing:-0.016px;-webkit-text-stroke:0.3px #1a1a1a;">Repeat Customers, % of New Customers</div>
<div style="position:absolute;left:395.70px;top:422.80px;width:78.00px;height:13.90px;background:#fff067;"></div>
<div class="t" style="left:420.26px;top:426.37px;font-size:10.2px;line-height:10.2px;color:#2a2a2a;-webkit-text-stroke:0.15px #2a2a2a;">15.0%</div>
<div style="position:absolute;left:473.70px;top:422.80px;width:77.90px;height:13.90px;background:#fff067;"></div>
<div class="t" style="left:498.21px;top:426.37px;font-size:10.2px;line-height:10.2px;color:#2a2a2a;-webkit-text-stroke:0.15px #2a2a2a;">25.0%</div>
<div style="position:absolute;left:551.60px;top:422.80px;width:77.90px;height:13.90px;background:#fff067;"></div>
<div class="t" style="left:576.11px;top:426.37px;font-size:10.2px;line-height:10.2px;color:#2a2a2a;-webkit-text-stroke:0.15px #2a2a2a;">35.0%</div>
<div style="position:absolute;left:629.50px;top:422.80px;width:78.10px;height:13.90px;background:#fff067;"></div>
<div class="t" style="left:654.11px;top:426.37px;font-size:10.2px;line-height:10.2px;color:#2a2a2a;-webkit-text-stroke:0.15px #2a2a2a;">40.0%</div>
<div style="position:absolute;left:707.60px;top:422.80px;width:78.00px;height:13.90px;background:#fff067;"></div>
<div class="t" style="left:732.16px;top:426.37px;font-size:10.2px;line-height:10.2px;color:#2a2a2a;-webkit-text-stroke:0.15px #2a2a2a;">45.0%</div>
<div style="position:absolute;left:36.50px;top:436.70px;width:359.20px;height:14.10px;background:#4ab1e6;"></div>
<div class="t" style="left:38.30px;top:438.52px;font-size:11.2px;line-height:11.2px;color:#fff;font-weight:bold;letter-spacing:-0.440px;-webkit-text-stroke:0.3px #fff;">New Repeat Customers</div>
<div style="position:absolute;left:395.70px;top:436.70px;width:78.00px;height:14.10px;background:#4ab1e6;"></div>
<div class="t" style="left:449.03px;top:438.52px;font-size:11.2px;line-height:11.2px;color:#fff;font-weight:bold;-webkit-text-stroke:0.3px #fff;">150</div>
<div style="position:absolute;left:473.70px;top:436.70px;width:77.90px;height:14.10px;background:#4ab1e6;"></div>
<div class="t" style="left:526.93px;top:438.52px;font-size:11.2px;line-height:11.2px;color:#fff;font-weight:bold;-webkit-text-stroke:0.3px #fff;">852</div>
<div style="position:absolute;left:551.60px;top:436.70px;width:77.90px;height:14.10px;background:#4ab1e6;"></div>
<div class="t" style="left:595.50px;top:438.52px;font-size:11.2px;line-height:11.2px;color:#fff;font-weight:bold;-webkit-text-stroke:0.3px #fff;">2,625</div>
<div style="position:absolute;left:629.50px;top:436.70px;width:78.10px;height:14.10px;background:#4ab1e6;"></div>
<div class="t" style="left:673.60px;top:438.52px;font-size:11.2px;line-height:11.2px;color:#fff;font-weight:bold;-webkit-text-stroke:0.3px #fff;">5,556</div>
<div style="position:absolute;left:707.60px;top:436.70px;width:78.00px;height:14.10px;background:#4ab1e6;"></div>
<div class="t" style="left:751.60px;top:438.52px;font-size:11.2px;line-height:11.2px;color:#fff;font-weight:bold;-webkit-text-stroke:0.3px #fff;">9,265</div>
<div class="t" style="left:38.30px;top:453.03px;font-size:10.6px;line-height:10.6px;color:#1a1a1a;font-weight:bold;letter-spacing:-0.049px;-webkit-text-stroke:0.3px #1a1a1a;">Repeat Customer Lifetime, Months</div>
<div style="position:absolute;left:395.70px;top:450.80px;width:78.00px;height:13.70px;background:#fff067;"></div>
<div class="t" style="left:431.87px;top:454.37px;font-size:10.2px;line-height:10.2px;color:#2a2a2a;-webkit-text-stroke:0.15px #2a2a2a;">6</div>
<div style="position:absolute;left:473.70px;top:450.80px;width:77.90px;height:13.70px;background:#fff067;"></div>
<div class="t" style="left:509.82px;top:454.37px;font-size:10.2px;line-height:10.2px;color:#2a2a2a;-webkit-text-stroke:0.15px #2a2a2a;">8</div>
<div style="position:absolute;left:551.60px;top:450.80px;width:77.90px;height:13.70px;background:#fff067;"></div>
<div class="t" style="left:584.88px;top:454.37px;font-size:10.2px;line-height:10.2px;color:#2a2a2a;-webkit-text-stroke:0.15px #2a2a2a;">10</div>
<div style="position:absolute;left:629.50px;top:450.80px;width:78.10px;height:13.70px;background:#fff067;"></div>
<div class="t" style="left:662.88px;top:454.37px;font-size:10.2px;line-height:10.2px;color:#2a2a2a;-webkit-text-stroke:0.15px #2a2a2a;">12</div>
<div style="position:absolute;left:707.60px;top:450.80px;width:78.00px;height:13.70px;background:#fff067;"></div>
<div class="t" style="left:740.93px;top:454.37px;font-size:10.2px;line-height:10.2px;color:#2a2a2a;-webkit-text-stroke:0.15px #2a2a2a;">14</div>
<div style="position:absolute;left:36.50px;top:464.50px;width:359.20px;height:13.70px;background:#4ab1e6;"></div>
<div class="t" style="left:38.30px;top:465.52px;font-size:11.2px;line-height:11.2px;color:#fff;font-weight:bold;letter-spacing:-0.344px;-webkit-text-stroke:0.3px #fff;">Active Repeat Customers (end of year)</div>
<div style="position:absolute;left:395.70px;top:464.50px;width:78.00px;height:13.70px;background:#4ab1e6;"></div>
<div class="t" style="left:455.26px;top:465.52px;font-size:11.2px;line-height:11.2px;color:#fff;font-weight:bold;-webkit-text-stroke:0.3px #fff;">75</div>
<div style="position:absolute;left:473.70px;top:464.50px;width:77.90px;height:13.70px;background:#4ab1e6;"></div>
<div class="t" style="left:526.93px;top:465.52px;font-size:11.2px;line-height:11.2px;color:#fff;font-weight:bold;-webkit-text-stroke:0.3px #fff;">568</div>
<div style="position:absolute;left:551.60px;top:464.50px;width:77.90px;height:13.70px;background:#4ab1e6;"></div>
<div class="t" style="left:595.50px;top:465.52px;font-size:11.2px;line-height:11.2px;color:#fff;font-weight:bold;-webkit-text-stroke:0.3px #fff;">2,188</div>
<div style="position:absolute;left:629.50px;top:464.50px;width:78.10px;height:13.70px;background:#4ab1e6;"></div>
<div class="t" style="left:673.60px;top:465.52px;font-size:11.2px;line-height:11.2px;color:#fff;font-weight:bold;-webkit-text-stroke:0.3px #fff;">5,556</div>
<div style="position:absolute;left:707.60px;top:464.50px;width:78.00px;height:13.70px;background:#4ab1e6;"></div>
<div class="t" style="left:745.38px;top:465.52px;font-size:11.2px;line-height:11.2px;color:#fff;font-weight:bold;-webkit-text-stroke:0.3px #fff;">10,191</div>
<div class="t" style="left:38.30px;top:480.03px;font-size:10.6px;line-height:10.6px;color:#1a1a1a;font-weight:bold;letter-spacing:-0.094px;-webkit-text-stroke:0.3px #1a1a1a;">Avg. Orders per Month per Repeat Customer</div>
<div style="position:absolute;left:395.70px;top:478.20px;width:78.00px;height:13.70px;background:#fff067;"></div>
<div class="t" style="left:424.79px;top:481.37px;font-size:10.2px;line-height:10.2px;color:#2a2a2a;-webkit-text-stroke:0.15px #2a2a2a;">0.30</div>
<div style="position:absolute;left:473.70px;top:478.20px;width:77.90px;height:13.70px;background:#fff067;"></div>
<div class="t" style="left:502.74px;top:481.37px;font-size:10.2px;line-height:10.2px;color:#2a2a2a;-webkit-text-stroke:0.15px #2a2a2a;">0.40</div>
<div style="position:absolute;left:551.60px;top:478.20px;width:77.90px;height:13.70px;background:#fff067;"></div>
<div class="t" style="left:580.64px;top:481.37px;font-size:10.2px;line-height:10.2px;color:#2a2a2a;-webkit-text-stroke:0.15px #2a2a2a;">0.50</div>
<div style="position:absolute;left:629.50px;top:478.20px;width:78.10px;height:13.70px;background:#fff067;"></div>
<div class="t" style="left:658.64px;top:481.37px;font-size:10.2px;line-height:10.2px;color:#2a2a2a;-webkit-text-stroke:0.15px #2a2a2a;">0.60</div>
<div style="position:absolute;left:707.60px;top:478.20px;width:78.00px;height:13.70px;background:#fff067;"></div>
<div class="t" style="left:736.69px;top:481.37px;font-size:10.2px;line-height:10.2px;color:#2a2a2a;-webkit-text-stroke:0.15px #2a2a2a;">0.70</div>
<div style="position:absolute;left:36.50px;top:499.70px;width:359.20px;height:16.20px;background:#4b4cd0;"></div>
<div class="t" style="left:38.30px;top:503.43px;font-size:11.3px;line-height:11.3px;color:#fff;font-weight:bold;letter-spacing:-0.065px;-webkit-text-stroke:0.3px #fff;">Assumptions</div>
<div style="position:absolute;left:395.70px;top:499.70px;width:389.90px;height:16.20px;background:#4b4cd0;"></div>
<div class="t" style="left:531.65px;top:502.52px;font-size:11.2px;line-height:11.2px;color:#fff;font-weight:bold;letter-spacing:0.182px;-webkit-text-stroke:0.3px #fff;">Products (Units) Sold</div>
<div style="position:absolute;left:36.50px;top:515.90px;width:359.20px;height:13.90px;background:#4ab1e6;"></div>
<div class="t" style="left:38.30px;top:517.52px;font-size:11.2px;line-height:11.2px;color:#fff;font-weight:bold;letter-spacing:-0.737px;-webkit-text-stroke:0.3px #fff;">Orders</div>
<div style="position:absolute;left:395.70px;top:515.90px;width:78.00px;height:13.90px;background:#4ab1e6;"></div>
<div class="t" style="left:439.70px;top:517.52px;font-size:11.2px;line-height:11.2px;color:#fff;font-weight:bold;-webkit-text-stroke:0.3px #fff;">1,214</div>
<div style="position:absolute;left:473.70px;top:515.90px;width:77.90px;height:13.90px;background:#4ab1e6;"></div>
<div class="t" style="left:517.60px;top:517.52px;font-size:11.2px;line-height:11.2px;color:#fff;font-weight:bold;-webkit-text-stroke:0.3px #fff;">5,481</div>
<div style="position:absolute;left:551.60px;top:515.90px;width:77.90px;height:13.90px;background:#4ab1e6;"></div>
<div class="t" style="left:589.28px;top:517.52px;font-size:11.2px;line-height:11.2px;color:#fff;font-weight:bold;-webkit-text-stroke:0.3px #fff;">17,301</div>
<div style="position:absolute;left:629.50px;top:515.90px;width:78.10px;height:13.90px;background:#4ab1e6;"></div>
<div class="t" style="left:667.38px;top:517.52px;font-size:11.2px;line-height:11.2px;color:#fff;font-weight:bold;-webkit-text-stroke:0.3px #fff;">44,218</div>
<div style="position:absolute;left:707.60px;top:515.90px;width:78.00px;height:13.90px;background:#4ab1e6;"></div>
<div class="t" style="left:745.38px;top:517.52px;font-size:11.2px;line-height:11.2px;color:#fff;font-weight:bold;-webkit-text-stroke:0.3px #fff;">91,738</div>
<div class="t" style="left:38.30px;top:532.03px;font-size:10.6px;line-height:10.6px;color:#1a1a1a;font-weight:bold;letter-spacing:-0.041px;-webkit-text-stroke:0.3px #1a1a1a;">Count of Products (Units) per Order</div>
<div style="position:absolute;left:395.70px;top:529.80px;width:78.00px;height:14.10px;background:#fff067;"></div>
<div class="t" style="left:424.79px;top:533.37px;font-size:10.2px;line-height:10.2px;color:#2a2a2a;-webkit-text-stroke:0.15px #2a2a2a;">1.10</div>
<div style="position:absolute;left:473.70px;top:529.80px;width:77.90px;height:14.10px;background:#fff067;"></div>
<div class="t" style="left:502.74px;top:533.37px;font-size:10.2px;line-height:10.2px;color:#2a2a2a;-webkit-text-stroke:0.15px #2a2a2a;">1.20</div>
<div style="position:absolute;left:551.60px;top:529.80px;width:77.90px;height:14.10px;background:#fff067;"></div>
<div class="t" style="left:580.64px;top:533.37px;font-size:10.2px;line-height:10.2px;color:#2a2a2a;-webkit-text-stroke:0.15px #2a2a2a;">1.30</div>
<div style="position:absolute;left:629.50px;top:529.80px;width:78.10px;height:14.10px;background:#fff067;"></div>
<div class="t" style="left:658.64px;top:533.37px;font-size:10.2px;line-height:10.2px;color:#2a2a2a;-webkit-text-stroke:0.15px #2a2a2a;">1.40</div>
<div style="position:absolute;left:707.60px;top:529.80px;width:78.00px;height:14.10px;background:#fff067;"></div>
<div class="t" style="left:736.69px;top:533.37px;font-size:10.2px;line-height:10.2px;color:#2a2a2a;-webkit-text-stroke:0.15px #2a2a2a;">1.50</div>
<div style="position:absolute;left:36.50px;top:543.90px;width:359.20px;height:13.90px;background:#4ab1e6;"></div>
<div class="t" style="left:38.30px;top:545.52px;font-size:11.2px;line-height:11.2px;color:#fff;font-weight:bold;letter-spacing:-0.363px;-webkit-text-stroke:0.3px #fff;">Products (Units) Sold</div>
<div style="position:absolute;left:395.70px;top:543.90px;width:78.00px;height:13.90px;background:#4ab1e6;"></div>
<div class="t" style="left:439.70px;top:545.52px;font-size:11.2px;line-height:11.2px;color:#fff;font-weight:bold;-webkit-text-stroke:0.3px #fff;">1,335</div>
<div style="position:absolute;left:473.70px;top:543.90px;width:77.90px;height:13.90px;background:#4ab1e6;"></div>
<div class="t" style="left:517.60px;top:545.52px;font-size:11.2px;line-height:11.2px;color:#fff;font-weight:bold;-webkit-text-stroke:0.3px #fff;">6,577</div>
<div style="position:absolute;left:551.60px;top:543.90px;width:77.90px;height:13.90px;background:#4ab1e6;"></div>
<div class="t" style="left:589.28px;top:545.52px;font-size:11.2px;line-height:11.2px;color:#fff;font-weight:bold;-webkit-text-stroke:0.3px #fff;">22,491</div>
<div style="position:absolute;left:629.50px;top:543.90px;width:78.10px;height:13.90px;background:#4ab1e6;"></div>
<div class="t" style="left:667.38px;top:545.52px;font-size:11.2px;line-height:11.2px;color:#fff;font-weight:bold;-webkit-text-stroke:0.3px #fff;">61,905</div>
<div style="position:absolute;left:707.60px;top:543.90px;width:78.00px;height:13.90px;background:#4ab1e6;"></div>
<div class="t" style="left:739.16px;top:545.52px;font-size:11.2px;line-height:11.2px;color:#fff;font-weight:bold;-webkit-text-stroke:0.3px #fff;">137,608</div>
<div style="position:absolute;left:36.50px;top:564.70px;width:359.20px;height:16.10px;background:#4b4cd0;"></div>
<div class="t" style="left:38.30px;top:568.43px;font-size:11.3px;line-height:11.3px;color:#fff;font-weight:bold;letter-spacing:0.076px;-webkit-text-stroke:0.3px #fff;">Product Categories</div>
<div style="position:absolute;left:395.70px;top:564.70px;width:389.90px;height:16.10px;background:#4b4cd0;"></div>
<div class="t" style="left:498.05px;top:567.52px;font-size:11.2px;line-height:11.2px;color:#fff;font-weight:bold;letter-spacing:0.318px;-webkit-text-stroke:0.3px #fff;">Units Sales Mix by Categories, %</div>
<div style="position:absolute;left:36.50px;top:580.80px;width:359.20px;height:14.20px;background:#fff067;"></div>
<div class="t" style="left:38.30px;top:584.20px;font-size:10.4px;line-height:10.4px;color:#2a2a2a;letter-spacing:-0.290px;-webkit-text-stroke:0.15px #2a2a2a;">Ergonomic Desk Gadget</div>
<div style="position:absolute;left:395.70px;top:580.80px;width:78.00px;height:14.20px;background:#fff067;"></div>
<div class="t" style="left:420.26px;top:584.37px;font-size:10.2px;line-height:10.2px;color:#2a2a2a;-webkit-text-stroke:0.15px #2a2a2a;">40.0%</div>
<div style="position:absolute;left:473.70px;top:580.80px;width:77.90px;height:14.20px;background:#fff067;"></div>
<div class="t" style="left:498.21px;top:584.37px;font-size:10.2px;line-height:10.2px;color:#2a2a2a;-webkit-text-stroke:0.15px #2a2a2a;">40.0%</div>
<div style="position:absolute;left:551.60px;top:580.80px;width:77.90px;height:14.20px;background:#fff067;"></div>
<div class="t" style="left:576.11px;top:584.37px;font-size:10.2px;line-height:10.2px;color:#2a2a2a;-webkit-text-stroke:0.15px #2a2a2a;">40.0%</div>
<div style="position:absolute;left:629.50px;top:580.80px;width:78.10px;height:14.20px;background:#fff067;"></div>
<div class="t" style="left:654.11px;top:584.37px;font-size:10.2px;line-height:10.2px;color:#2a2a2a;-webkit-text-stroke:0.15px #2a2a2a;">40.0%</div>
<div style="position:absolute;left:707.60px;top:580.80px;width:78.00px;height:14.20px;background:#fff067;"></div>
<div class="t" style="left:732.16px;top:584.37px;font-size:10.2px;line-height:10.2px;color:#2a2a2a;-webkit-text-stroke:0.15px #2a2a2a;">40.0%</div>
<div style="position:absolute;left:36.50px;top:595.00px;width:359.20px;height:13.90px;background:#fff067;"></div>
<div class="t" style="left:38.30px;top:598.20px;font-size:10.4px;line-height:10.4px;color:#2a2a2a;letter-spacing:-0.134px;-webkit-text-stroke:0.15px #2a2a2a;">Smart Home Diffuser</div>
<div style="position:absolute;left:395.70px;top:595.00px;width:78.00px;height:13.90px;background:#fff067;"></div>
<div class="t" style="left:420.26px;top:598.37px;font-size:10.2px;line-height:10.2px;color:#2a2a2a;-webkit-text-stroke:0.15px #2a2a2a;">30.0%</div>
<div style="position:absolute;left:473.70px;top:595.00px;width:77.90px;height:13.90px;background:#fff067;"></div>
<div class="t" style="left:498.21px;top:598.37px;font-size:10.2px;line-height:10.2px;color:#2a2a2a;-webkit-text-stroke:0.15px #2a2a2a;">30.0%</div>
<div style="position:absolute;left:551.60px;top:595.00px;width:77.90px;height:13.90px;background:#fff067;"></div>
<div class="t" style="left:576.11px;top:598.37px;font-size:10.2px;line-height:10.2px;color:#2a2a2a;-webkit-text-stroke:0.15px #2a2a2a;">30.0%</div>
<div style="position:absolute;left:629.50px;top:595.00px;width:78.10px;height:13.90px;background:#fff067;"></div>
<div class="t" style="left:654.11px;top:598.37px;font-size:10.2px;line-height:10.2px;color:#2a2a2a;-webkit-text-stroke:0.15px #2a2a2a;">30.0%</div>
<div style="position:absolute;left:707.60px;top:595.00px;width:78.00px;height:13.90px;background:#fff067;"></div>
<div class="t" style="left:732.16px;top:598.37px;font-size:10.2px;line-height:10.2px;color:#2a2a2a;-webkit-text-stroke:0.15px #2a2a2a;">30.0%</div>
<div style="position:absolute;left:36.50px;top:608.90px;width:359.20px;height:13.80px;background:#fff067;"></div>
<div class="t" style="left:38.30px;top:612.20px;font-size:10.4px;line-height:10.4px;color:#2a2a2a;letter-spacing:-0.357px;-webkit-text-stroke:0.15px #2a2a2a;">Portable Espresso Maker</div>
<div style="position:absolute;left:395.70px;top:608.90px;width:78.00px;height:13.80px;background:#fff067;"></div>
<div class="t" style="left:420.26px;top:612.37px;font-size:10.2px;line-height:10.2px;color:#2a2a2a;-webkit-text-stroke:0.15px #2a2a2a;">20.0%</div>
<div style="position:absolute;left:473.70px;top:608.90px;width:77.90px;height:13.80px;background:#fff067;"></div>
<div class="t" style="left:498.21px;top:612.37px;font-size:10.2px;line-height:10.2px;color:#2a2a2a;-webkit-text-stroke:0.15px #2a2a2a;">20.0%</div>
<div style="position:absolute;left:551.60px;top:608.90px;width:77.90px;height:13.80px;background:#fff067;"></div>
<div class="t" style="left:576.11px;top:612.37px;font-size:10.2px;line-height:10.2px;color:#2a2a2a;-webkit-text-stroke:0.15px #2a2a2a;">20.0%</div>
<div style="position:absolute;left:629.50px;top:608.90px;width:78.10px;height:13.80px;background:#fff067;"></div>
<div class="t" style="left:654.11px;top:612.37px;font-size:10.2px;line-height:10.2px;color:#2a2a2a;-webkit-text-stroke:0.15px #2a2a2a;">20.0%</div>
<div style="position:absolute;left:707.60px;top:608.90px;width:78.00px;height:13.80px;background:#fff067;"></div>
<div class="t" style="left:732.16px;top:612.37px;font-size:10.2px;line-height:10.2px;color:#2a2a2a;-webkit-text-stroke:0.15px #2a2a2a;">20.0%</div>
<div style="position:absolute;left:36.50px;top:622.70px;width:359.20px;height:13.70px;background:#fff067;"></div>
<div class="t" style="left:38.30px;top:625.20px;font-size:10.4px;line-height:10.4px;color:#2a2a2a;letter-spacing:-0.184px;-webkit-text-stroke:0.15px #2a2a2a;">Eco-Friendly Kitchen Tool</div>
<div style="position:absolute;left:395.70px;top:622.70px;width:78.00px;height:13.70px;background:#fff067;"></div>
<div class="t" style="left:420.26px;top:625.37px;font-size:10.2px;line-height:10.2px;color:#2a2a2a;-webkit-text-stroke:0.15px #2a2a2a;">10.0%</div>
<div style="position:absolute;left:473.70px;top:622.70px;width:77.90px;height:13.70px;background:#fff067;"></div>
<div class="t" style="left:498.21px;top:625.37px;font-size:10.2px;line-height:10.2px;color:#2a2a2a;-webkit-text-stroke:0.15px #2a2a2a;">10.0%</div>
<div style="position:absolute;left:551.60px;top:622.70px;width:77.90px;height:13.70px;background:#fff067;"></div>
<div class="t" style="left:576.11px;top:625.37px;font-size:10.2px;line-height:10.2px;color:#2a2a2a;-webkit-text-stroke:0.15px #2a2a2a;">10.0%</div>
<div style="position:absolute;left:629.50px;top:622.70px;width:78.10px;height:13.70px;background:#fff067;"></div>
<div class="t" style="left:654.11px;top:625.37px;font-size:10.2px;line-height:10.2px;color:#2a2a2a;-webkit-text-stroke:0.15px #2a2a2a;">10.0%</div>
<div style="position:absolute;left:707.60px;top:622.70px;width:78.00px;height:13.70px;background:#fff067;"></div>
<div class="t" style="left:732.16px;top:625.37px;font-size:10.2px;line-height:10.2px;color:#2a2a2a;-webkit-text-stroke:0.15px #2a2a2a;">10.0%</div>
<div style="position:absolute;left:36.50px;top:636.40px;width:359.20px;height:13.80px;background:#fff067;"></div>
<div class="t" style="left:38.30px;top:639.20px;font-size:10.4px;line-height:10.4px;color:#2a2a2a;-webkit-text-stroke:0.15px #2a2a2a;">-</div>
<div style="position:absolute;left:395.70px;top:636.40px;width:78.00px;height:13.80px;background:#fff067;"></div>
<div style="position:absolute;left:473.70px;top:636.40px;width:77.90px;height:13.80px;background:#fff067;"></div>
<div style="position:absolute;left:551.60px;top:636.40px;width:77.90px;height:13.80px;background:#fff067;"></div>
<div style="position:absolute;left:629.50px;top:636.40px;width:78.10px;height:13.80px;background:#fff067;"></div>
<div style="position:absolute;left:707.60px;top:636.40px;width:78.00px;height:13.80px;background:#fff067;"></div>
<div style="position:absolute;left:36.50px;top:650.20px;width:359.20px;height:14.10px;background:#fff067;"></div>
<div class="t" style="left:38.30px;top:653.20px;font-size:10.4px;line-height:10.4px;color:#2a2a2a;-webkit-text-stroke:0.15px #2a2a2a;">-</div>
<div style="position:absolute;left:395.70px;top:650.20px;width:78.00px;height:14.10px;background:#fff067;"></div>
<div style="position:absolute;left:473.70px;top:650.20px;width:77.90px;height:14.10px;background:#fff067;"></div>
<div style="position:absolute;left:551.60px;top:650.20px;width:77.90px;height:14.10px;background:#fff067;"></div>
<div style="position:absolute;left:629.50px;top:650.20px;width:78.10px;height:14.10px;background:#fff067;"></div>
<div style="position:absolute;left:707.60px;top:650.20px;width:78.00px;height:14.10px;background:#fff067;"></div>
<div style="position:absolute;left:36.50px;top:664.30px;width:359.20px;height:14.00px;background:#fff067;"></div>
<div class="t" style="left:38.30px;top:667.20px;font-size:10.4px;line-height:10.4px;color:#2a2a2a;-webkit-text-stroke:0.15px #2a2a2a;">-</div>
<div style="position:absolute;left:395.70px;top:664.30px;width:78.00px;height:14.00px;background:#fff067;"></div>
<div style="position:absolute;left:473.70px;top:664.30px;width:77.90px;height:14.00px;background:#fff067;"></div>
<div style="position:absolute;left:551.60px;top:664.30px;width:77.90px;height:14.00px;background:#fff067;"></div>
<div style="position:absolute;left:629.50px;top:664.30px;width:78.10px;height:14.00px;background:#fff067;"></div>
<div style="position:absolute;left:707.60px;top:664.30px;width:78.00px;height:14.00px;background:#fff067;"></div>
<div style="position:absolute;left:36.50px;top:678.30px;width:359.20px;height:14.00px;background:#fff067;"></div>
<div class="t" style="left:38.30px;top:681.20px;font-size:10.4px;line-height:10.4px;color:#2a2a2a;-webkit-text-stroke:0.15px #2a2a2a;">-</div>
<div style="position:absolute;left:395.70px;top:678.30px;width:78.00px;height:14.00px;background:#fff067;"></div>
<div style="position:absolute;left:473.70px;top:678.30px;width:77.90px;height:14.00px;background:#fff067;"></div>
<div style="position:absolute;left:551.60px;top:678.30px;width:77.90px;height:14.00px;background:#fff067;"></div>
<div style="position:absolute;left:629.50px;top:678.30px;width:78.10px;height:14.00px;background:#fff067;"></div>
<div style="position:absolute;left:707.60px;top:678.30px;width:78.00px;height:14.00px;background:#fff067;"></div>
<div style="position:absolute;left:36.50px;top:692.30px;width:359.20px;height:13.90px;background:#fff067;"></div>
<div class="t" style="left:38.30px;top:695.20px;font-size:10.4px;line-height:10.4px;color:#2a2a2a;-webkit-text-stroke:0.15px #2a2a2a;">-</div>
<div style="position:absolute;left:395.70px;top:692.30px;width:78.00px;height:13.90px;background:#fff067;"></div>
<div style="position:absolute;left:473.70px;top:692.30px;width:77.90px;height:13.90px;background:#fff067;"></div>
<div style="position:absolute;left:551.60px;top:692.30px;width:77.90px;height:13.90px;background:#fff067;"></div>
<div style="position:absolute;left:629.50px;top:692.30px;width:78.10px;height:13.90px;background:#fff067;"></div>
<div style="position:absolute;left:707.60px;top:692.30px;width:78.00px;height:13.90px;background:#fff067;"></div>
<div style="position:absolute;left:36.50px;top:706.20px;width:359.20px;height:13.50px;background:#fff067;"></div>
<div class="t" style="left:38.30px;top:708.20px;font-size:10.4px;line-height:10.4px;color:#2a2a2a;-webkit-text-stroke:0.15px #2a2a2a;">-</div>
<div style="position:absolute;left:395.70px;top:706.20px;width:78.00px;height:13.50px;background:#d9d9d9;"></div>
<div class="t" style="left:423.09px;top:708.37px;font-size:10.2px;line-height:10.2px;color:#2a2a2a;-webkit-text-stroke:0.15px #2a2a2a;">0.0%</div>
<div style="position:absolute;left:473.70px;top:706.20px;width:77.90px;height:13.50px;background:#d9d9d9;"></div>
<div class="t" style="left:501.04px;top:708.37px;font-size:10.2px;line-height:10.2px;color:#2a2a2a;-webkit-text-stroke:0.15px #2a2a2a;">0.0%</div>
<div style="position:absolute;left:551.60px;top:706.20px;width:77.90px;height:13.50px;background:#d9d9d9;"></div>
<div class="t" style="left:578.94px;top:708.37px;font-size:10.2px;line-height:10.2px;color:#2a2a2a;-webkit-text-stroke:0.15px #2a2a2a;">0.0%</div>
<div style="position:absolute;left:629.50px;top:706.20px;width:78.10px;height:13.50px;background:#d9d9d9;"></div>
<div class="t" style="left:656.94px;top:708.37px;font-size:10.2px;line-height:10.2px;color:#2a2a2a;-webkit-text-stroke:0.15px #2a2a2a;">0.0%</div>
<div style="position:absolute;left:707.60px;top:706.20px;width:78.00px;height:13.50px;background:#d9d9d9;"></div>
<div class="t" style="left:734.99px;top:708.37px;font-size:10.2px;line-height:10.2px;color:#2a2a2a;-webkit-text-stroke:0.15px #2a2a2a;">0.0%</div>
<div style="position:absolute;left:36.50px;top:727.00px;width:359.20px;height:15.70px;background:#4b4cd0;"></div>
<div class="t" style="left:38.30px;top:730.43px;font-size:11.3px;line-height:11.3px;color:#fff;font-weight:bold;letter-spacing:0.076px;-webkit-text-stroke:0.3px #fff;">Product Categories</div>
<div style="position:absolute;left:395.70px;top:727.00px;width:389.90px;height:15.70px;background:#4b4cd0;"></div>
<div class="t" style="left:546.40px;top:729.52px;font-size:11.2px;line-height:11.2px;color:#fff;font-weight:bold;letter-spacing:0.221px;-webkit-text-stroke:0.3px #fff;">Product Price, $</div>
<div class="t" style="left:38.30px;top:745.03px;font-size:10.6px;line-height:10.6px;color:#1a1a1a;font-weight:bold;letter-spacing:-0.162px;-webkit-text-stroke:0.3px #1a1a1a;">Ergonomic Desk Gadget</div>
<div style="position:absolute;left:395.70px;top:742.70px;width:78.00px;height:14.10px;background:#fff067;"></div>
<div class="t" style="left:424.79px;top:746.37px;font-size:10.2px;line-height:10.2px;color:#2a2a2a;-webkit-text-stroke:0.15px #2a2a2a;">79.0</div>
<div style="position:absolute;left:473.70px;top:742.70px;width:77.90px;height:14.10px;background:#fff067;"></div>
<div class="t" style="left:502.74px;top:746.37px;font-size:10.2px;line-height:10.2px;color:#2a2a2a;-webkit-text-stroke:0.15px #2a2a2a;">79.0</div>
<div style="position:absolute;left:551.60px;top:742.70px;width:77.90px;height:14.10px;background:#fff067;"></div>
<div class="t" style="left:580.64px;top:746.37px;font-size:10.2px;line-height:10.2px;color:#2a2a2a;-webkit-text-stroke:0.15px #2a2a2a;">82.0</div>
<div style="position:absolute;left:629.50px;top:742.70px;width:78.10px;height:14.10px;background:#fff067;"></div>
<div class="t" style="left:658.64px;top:746.37px;font-size:10.2px;line-height:10.2px;color:#2a2a2a;-webkit-text-stroke:0.15px #2a2a2a;">85.0</div>
<div style="position:absolute;left:707.60px;top:742.70px;width:78.00px;height:14.10px;background:#fff067;"></div>
<div class="t" style="left:736.69px;top:746.37px;font-size:10.2px;line-height:10.2px;color:#2a2a2a;-webkit-text-stroke:0.15px #2a2a2a;">88.0</div>
<div class="t" style="left:38.30px;top:759.03px;font-size:10.6px;line-height:10.6px;color:#1a1a1a;font-weight:bold;letter-spacing:-0.026px;-webkit-text-stroke:0.3px #1a1a1a;">Smart Home Diffuser</div>
<div style="position:absolute;left:395.70px;top:756.80px;width:78.00px;height:13.80px;background:#fff067;"></div>
<div class="t" style="left:424.79px;top:759.37px;font-size:10.2px;line-height:10.2px;color:#2a2a2a;-webkit-text-stroke:0.15px #2a2a2a;">59.0</div>
<div style="position:absolute;left:473.70px;top:756.80px;width:77.90px;height:13.80px;background:#fff067;"></div>
<div class="t" style="left:502.74px;top:759.37px;font-size:10.2px;line-height:10.2px;color:#2a2a2a;-webkit-text-stroke:0.15px #2a2a2a;">62.0</div>
<div style="position:absolute;left:551.60px;top:756.80px;width:77.90px;height:13.80px;background:#fff067;"></div>
<div class="t" style="left:580.64px;top:759.37px;font-size:10.2px;line-height:10.2px;color:#2a2a2a;-webkit-text-stroke:0.15px #2a2a2a;">65.0</div>
<div style="position:absolute;left:629.50px;top:756.80px;width:78.10px;height:13.80px;background:#fff067;"></div>
<div class="t" style="left:658.64px;top:759.37px;font-size:10.2px;line-height:10.2px;color:#2a2a2a;-webkit-text-stroke:0.15px #2a2a2a;">68.0</div>
<div style="position:absolute;left:707.60px;top:756.80px;width:78.00px;height:13.80px;background:#fff067;"></div>
<div class="t" style="left:736.69px;top:759.37px;font-size:10.2px;line-height:10.2px;color:#2a2a2a;-webkit-text-stroke:0.15px #2a2a2a;">70.0</div>
<div class="t" style="left:38.30px;top:772.03px;font-size:10.6px;line-height:10.6px;color:#1a1a1a;font-weight:bold;letter-spacing:-0.122px;-webkit-text-stroke:0.3px #1a1a1a;">Portable Espresso Maker</div>
<div style="position:absolute;left:395.70px;top:770.60px;width:78.00px;height:13.70px;background:#fff067;"></div>
<div class="t" style="left:422.33px;top:773.37px;font-size:10.2px;line-height:10.2px;color:#2a2a2a;-webkit-text-stroke:0.15px #2a2a2a;">119.0</div>
<div style="position:absolute;left:473.70px;top:770.60px;width:77.90px;height:13.70px;background:#fff067;"></div>
<div class="t" style="left:499.90px;top:773.37px;font-size:10.2px;line-height:10.2px;color:#2a2a2a;-webkit-text-stroke:0.15px #2a2a2a;">125.0</div>
<div style="position:absolute;left:551.60px;top:770.60px;width:77.90px;height:13.70px;background:#fff067;"></div>
<div class="t" style="left:577.80px;top:773.37px;font-size:10.2px;line-height:10.2px;color:#2a2a2a;-webkit-text-stroke:0.15px #2a2a2a;">129.0</div>
<div style="position:absolute;left:629.50px;top:770.60px;width:78.10px;height:13.70px;background:#fff067;"></div>
<div class="t" style="left:655.80px;top:773.37px;font-size:10.2px;line-height:10.2px;color:#2a2a2a;-webkit-text-stroke:0.15px #2a2a2a;">135.0</div>
<div style="position:absolute;left:707.60px;top:770.60px;width:78.00px;height:13.70px;background:#fff067;"></div>
<div class="t" style="left:733.85px;top:773.37px;font-size:10.2px;line-height:10.2px;color:#2a2a2a;-webkit-text-stroke:0.15px #2a2a2a;">140.0</div>
<div class="t" style="left:38.30px;top:787.03px;font-size:10.6px;line-height:10.6px;color:#1a1a1a;font-weight:bold;letter-spacing:-0.161px;-webkit-text-stroke:0.3px #1a1a1a;">Eco-Friendly Kitchen Tool</div>
<div style="position:absolute;left:395.70px;top:784.30px;width:78.00px;height:14.20px;background:#fff067;"></div>
<div class="t" style="left:424.79px;top:787.37px;font-size:10.2px;line-height:10.2px;color:#2a2a2a;-webkit-text-stroke:0.15px #2a2a2a;">45.0</div>
<div style="position:absolute;left:473.70px;top:784.30px;width:77.90px;height:14.20px;background:#fff067;"></div>
<div class="t" style="left:502.74px;top:787.37px;font-size:10.2px;line-height:10.2px;color:#2a2a2a;-webkit-text-stroke:0.15px #2a2a2a;">48.0</div>
<div style="position:absolute;left:551.60px;top:784.30px;width:77.90px;height:14.20px;background:#fff067;"></div>
<div class="t" style="left:580.64px;top:787.37px;font-size:10.2px;line-height:10.2px;color:#2a2a2a;-webkit-text-stroke:0.15px #2a2a2a;">50.0</div>
<div style="position:absolute;left:629.50px;top:784.30px;width:78.10px;height:14.20px;background:#fff067;"></div>
<div class="t" style="left:658.64px;top:787.37px;font-size:10.2px;line-height:10.2px;color:#2a2a2a;-webkit-text-stroke:0.15px #2a2a2a;">52.0</div>
<div style="position:absolute;left:707.60px;top:784.30px;width:78.00px;height:14.20px;background:#fff067;"></div>
<div class="t" style="left:736.69px;top:787.37px;font-size:10.2px;line-height:10.2px;color:#2a2a2a;-webkit-text-stroke:0.15px #2a2a2a;">55.0</div>
<div style="position:absolute;left:395.70px;top:798.50px;width:77.00px;height:1.50px;background:#fff067;"></div>
<div style="position:absolute;left:473.70px;top:798.50px;width:76.90px;height:1.50px;background:#fff067;"></div>
<div style="position:absolute;left:551.60px;top:798.50px;width:76.90px;height:1.50px;background:#fff067;"></div>
<div style="position:absolute;left:629.50px;top:798.50px;width:77.10px;height:1.50px;background:#fff067;"></div>
<div style="position:absolute;left:707.60px;top:798.50px;width:77.00px;height:1.50px;background:#fff067;"></div>
<div style="position:absolute;left:394.70px;top:221.20px;width:1.00px;height:18.80px;background:rgba(255,255,255,0.55);"></div>
<div style="position:absolute;left:36.50px;top:239.20px;width:359.20px;height:0.80px;background:rgba(255,255,255,0.55);"></div>
<div style="position:absolute;left:472.70px;top:221.20px;width:1.00px;height:18.80px;background:rgba(255,255,255,0.55);"></div>
<div style="position:absolute;left:395.70px;top:239.20px;width:78.00px;height:0.80px;background:rgba(255,255,255,0.55);"></div>
<div style="position:absolute;left:550.60px;top:221.20px;width:1.00px;height:18.80px;background:rgba(255,255,255,0.55);"></div>
<div style="position:absolute;left:473.70px;top:239.20px;width:77.90px;height:0.80px;background:rgba(255,255,255,0.55);"></div>
<div style="position:absolute;left:628.50px;top:221.20px;width:1.00px;height:18.80px;background:rgba(255,255,255,0.55);"></div>
<div style="position:absolute;left:551.60px;top:239.20px;width:77.90px;height:0.80px;background:rgba(255,255,255,0.55);"></div>
<div style="position:absolute;left:706.60px;top:221.20px;width:1.00px;height:18.80px;background:rgba(255,255,255,0.55);"></div>
<div style="position:absolute;left:629.50px;top:239.20px;width:78.10px;height:0.80px;background:rgba(255,255,255,0.55);"></div>
<div style="position:absolute;left:784.60px;top:221.20px;width:1.00px;height:18.80px;background:rgba(255,255,255,0.55);"></div>
<div style="position:absolute;left:707.60px;top:239.20px;width:78.00px;height:0.80px;background:rgba(255,255,255,0.55);"></div>
<div style="position:absolute;left:841.90px;top:221.20px;width:1.00px;height:18.80px;background:rgba(255,255,255,0.55);"></div>
<div style="position:absolute;left:797.90px;top:239.20px;width:45.00px;height:0.80px;background:rgba(255,255,255,0.55);"></div>
<div style="position:absolute;left:886.90px;top:221.20px;width:1.00px;height:18.80px;background:rgba(255,255,255,0.55);"></div>
<div style="position:absolute;left:842.90px;top:239.20px;width:45.00px;height:0.80px;background:rgba(255,255,255,0.55);"></div>
<div style="position:absolute;left:931.90px;top:221.20px;width:1.00px;height:18.80px;background:rgba(255,255,255,0.55);"></div>
<div style="position:absolute;left:887.90px;top:239.20px;width:45.00px;height:0.80px;background:rgba(255,255,255,0.55);"></div>
<div style="position:absolute;left:976.90px;top:221.20px;width:1.00px;height:18.80px;background:rgba(255,255,255,0.55);"></div>
<div style="position:absolute;left:932.90px;top:239.20px;width:45.00px;height:0.80px;background:rgba(255,255,255,0.55);"></div>
<div style="position:absolute;left:1022.00px;top:221.20px;width:1.00px;height:18.80px;background:rgba(255,255,255,0.55);"></div>
<div style="position:absolute;left:977.90px;top:239.20px;width:45.10px;height:0.80px;background:rgba(255,255,255,0.55);"></div>
<div style="position:absolute;left:1067.00px;top:221.20px;width:1.00px;height:18.80px;background:rgba(255,255,255,0.55);"></div>
<div style="position:absolute;left:1023.00px;top:239.20px;width:45.00px;height:0.80px;background:rgba(255,255,255,0.55);"></div>
<div style="position:absolute;left:1112.00px;top:221.20px;width:1.00px;height:18.80px;background:rgba(255,255,255,0.55);"></div>
<div style="position:absolute;left:1068.00px;top:239.20px;width:45.00px;height:0.80px;background:rgba(255,255,255,0.55);"></div>
<div style="position:absolute;left:1157.00px;top:221.20px;width:1.00px;height:18.80px;background:rgba(255,255,255,0.55);"></div>
<div style="position:absolute;left:1113.00px;top:239.20px;width:45.00px;height:0.80px;background:rgba(255,255,255,0.55);"></div>
<div style="position:absolute;left:1202.10px;top:221.20px;width:1.00px;height:18.80px;background:rgba(255,255,255,0.55);"></div>
<div style="position:absolute;left:1158.00px;top:239.20px;width:45.10px;height:0.80px;background:rgba(255,255,255,0.55);"></div>
<div style="position:absolute;left:1247.10px;top:221.20px;width:1.00px;height:18.80px;background:rgba(255,255,255,0.55);"></div>
<div style="position:absolute;left:1203.10px;top:239.20px;width:45.00px;height:0.80px;background:rgba(255,255,255,0.55);"></div>
<div style="position:absolute;left:1292.20px;top:221.20px;width:1.00px;height:18.80px;background:rgba(255,255,255,0.55);"></div>
<div style="position:absolute;left:1248.10px;top:239.20px;width:45.10px;height:0.80px;background:rgba(255,255,255,0.55);"></div>
<div style="position:absolute;left:1337.00px;top:221.20px;width:1.00px;height:18.80px;background:rgba(255,255,255,0.55);"></div>
<div style="position:absolute;left:1293.20px;top:239.20px;width:44.80px;height:0.80px;background:rgba(255,255,255,0.55);"></div>
<div style="position:absolute;left:322.60px;top:246.20px;width:1.00px;height:16.70px;background:rgba(255,255,255,0.55);"></div>
<div style="position:absolute;left:36.50px;top:262.10px;width:287.10px;height:0.80px;background:rgba(255,255,255,0.55);"></div>
<div style="position:absolute;left:394.70px;top:246.20px;width:1.00px;height:16.70px;background:rgba(255,255,255,0.55);"></div>
<div style="position:absolute;left:323.60px;top:262.10px;width:72.10px;height:0.80px;background:rgba(255,255,255,0.55);"></div>
<div style="position:absolute;left:784.60px;top:246.20px;width:1.00px;height:16.70px;background:rgba(255,255,255,0.55);"></div>
<div style="position:absolute;left:395.70px;top:262.10px;width:389.90px;height:0.80px;background:rgba(255,255,255,0.55);"></div>
<div style="position:absolute;left:1337.00px;top:246.20px;width:1.00px;height:16.70px;background:rgba(255,255,255,0.55);"></div>
<div style="position:absolute;left:797.90px;top:262.10px;width:540.10px;height:0.80px;background:rgba(255,255,255,0.55);"></div>
<div style="position:absolute;left:394.70px;top:262.10px;width:1.00px;height:16.10px;background:rgba(255,255,255,0.55);"></div>
<div style="position:absolute;left:323.60px;top:277.40px;width:72.10px;height:0.80px;background:rgba(255,255,255,0.55);"></div>
<div style="position:absolute;left:472.70px;top:262.10px;width:1.00px;height:16.10px;background:rgba(255,255,255,0.55);"></div>
<div style="position:absolute;left:395.70px;top:277.40px;width:78.00px;height:0.80px;background:rgba(255,255,255,0.55);"></div>
<div style="position:absolute;left:550.60px;top:262.10px;width:1.00px;height:16.10px;background:rgba(255,255,255,0.55);"></div>
<div style="position:absolute;left:473.70px;top:277.40px;width:77.90px;height:0.80px;background:rgba(255,255,255,0.55);"></div>
<div style="position:absolute;left:628.50px;top:262.10px;width:1.00px;height:16.10px;background:rgba(255,255,255,0.55);"></div>
<div style="position:absolute;left:551.60px;top:277.40px;width:77.90px;height:0.80px;background:rgba(255,255,255,0.55);"></div>
<div style="position:absolute;left:706.60px;top:262.10px;width:1.00px;height:16.10px;background:rgba(255,255,255,0.55);"></div>
<div style="position:absolute;left:629.50px;top:277.40px;width:78.10px;height:0.80px;background:rgba(255,255,255,0.55);"></div>
<div style="position:absolute;left:784.60px;top:262.10px;width:1.00px;height:16.10px;background:rgba(255,255,255,0.55);"></div>
<div style="position:absolute;left:707.60px;top:277.40px;width:78.00px;height:0.80px;background:rgba(255,255,255,0.55);"></div>
<div style="position:absolute;left:841.00px;top:262.10px;width:1.90px;height:16.10px;background:rgba(255,255,255,0.55);"></div>
<div style="position:absolute;left:841.90px;top:262.10px;width:1.00px;height:16.10px;background:rgba(255,255,255,0.55);"></div>
<div style="position:absolute;left:797.90px;top:277.40px;width:45.00px;height:0.80px;background:rgba(255,255,255,0.55);"></div>
<div style="position:absolute;left:886.00px;top:262.10px;width:1.90px;height:16.10px;background:rgba(255,255,255,0.55);"></div>
<div style="position:absolute;left:886.90px;top:262.10px;width:1.00px;height:16.10px;background:rgba(255,255,255,0.55);"></div>
<div style="position:absolute;left:842.90px;top:277.40px;width:45.00px;height:0.80px;background:rgba(255,255,255,0.55);"></div>
<div style="position:absolute;left:931.00px;top:262.10px;width:1.90px;height:16.10px;background:rgba(255,255,255,0.55);"></div>
<div style="position:absolute;left:931.90px;top:262.10px;width:1.00px;height:16.10px;background:rgba(255,255,255,0.55);"></div>
<div style="position:absolute;left:887.90px;top:277.40px;width:45.00px;height:0.80px;background:rgba(255,255,255,0.55);"></div>
<div style="position:absolute;left:976.00px;top:262.10px;width:1.90px;height:16.10px;background:rgba(255,255,255,0.55);"></div>
<div style="position:absolute;left:976.90px;top:262.10px;width:1.00px;height:16.10px;background:rgba(255,255,255,0.55);"></div>
<div style="position:absolute;left:932.90px;top:277.40px;width:45.00px;height:0.80px;background:rgba(255,255,255,0.55);"></div>
<div style="position:absolute;left:1021.10px;top:262.10px;width:1.90px;height:16.10px;background:rgba(255,255,255,0.55);"></div>
<div style="position:absolute;left:1022.00px;top:262.10px;width:1.00px;height:16.10px;background:rgba(255,255,255,0.55);"></div>
<div style="position:absolute;left:977.90px;top:277.40px;width:45.10px;height:0.80px;background:rgba(255,255,255,0.55);"></div>
<div style="position:absolute;left:1066.10px;top:262.10px;width:1.90px;height:16.10px;background:rgba(255,255,255,0.55);"></div>
<div style="position:absolute;left:1067.00px;top:262.10px;width:1.00px;height:16.10px;background:rgba(255,255,255,0.55);"></div>
<div style="position:absolute;left:1023.00px;top:277.40px;width:45.00px;height:0.80px;background:rgba(255,255,255,0.55);"></div>
<div style="position:absolute;left:1111.10px;top:262.10px;width:1.90px;height:16.10px;background:rgba(255,255,255,0.55);"></div>
<div style="position:absolute;left:1112.00px;top:262.10px;width:1.00px;height:16.10px;background:rgba(255,255,255,0.55);"></div>
<div style="position:absolute;left:1068.00px;top:277.40px;width:45.00px;height:0.80px;background:rgba(255,255,255,0.55);"></div>
<div style="position:absolute;left:1156.10px;top:262.10px;width:1.90px;height:16.10px;background:rgba(255,255,255,0.55);"></div>
<div style="position:absolute;left:1157.00px;top:262.10px;width:1.00px;height:16.10px;background:rgba(255,255,255,0.55);"></div>
<div style="position:absolute;left:1113.00px;top:277.40px;width:45.00px;height:0.80px;background:rgba(255,255,255,0.55);"></div>
<div style="position:absolute;left:1201.20px;top:262.10px;width:1.90px;height:16.10px;background:rgba(255,255,255,0.55);"></div>
<div style="position:absolute;left:1202.10px;top:262.10px;width:1.00px;height:16.10px;background:rgba(255,255,255,0.55);"></div>
<div style="position:absolute;left:1158.00px;top:277.40px;width:45.10px;height:0.80px;background:rgba(255,255,255,0.55);"></div>
<div style="position:absolute;left:1246.20px;top:262.10px;width:1.90px;height:16.10px;background:rgba(255,255,255,0.55);"></div>
<div style="position:absolute;left:1247.10px;top:262.10px;width:1.00px;height:16.10px;background:rgba(255,255,255,0.55);"></div>
<div style="position:absolute;left:1203.10px;top:277.40px;width:45.00px;height:0.80px;background:rgba(255,255,255,0.55);"></div>
<div style="position:absolute;left:1291.30px;top:262.10px;width:1.90px;height:16.10px;background:rgba(255,255,255,0.55);"></div>
<div style="position:absolute;left:1292.20px;top:262.10px;width:1.00px;height:16.10px;background:rgba(255,255,255,0.55);"></div>
<div style="position:absolute;left:1248.10px;top:277.40px;width:45.10px;height:0.80px;background:rgba(255,255,255,0.55);"></div>
<div style="position:absolute;left:1337.00px;top:262.10px;width:1.00px;height:16.10px;background:rgba(255,255,255,0.55);"></div>
<div style="position:absolute;left:1293.20px;top:277.40px;width:44.80px;height:0.80px;background:rgba(255,255,255,0.55);"></div>
<div style="position:absolute;left:472.70px;top:277.40px;width:1.00px;height:16.10px;background:rgba(255,255,255,0.55);"></div>
<div style="position:absolute;left:395.70px;top:292.70px;width:78.00px;height:0.80px;background:rgba(255,255,255,0.55);"></div>
<div style="position:absolute;left:550.60px;top:277.40px;width:1.00px;height:16.10px;background:rgba(255,255,255,0.55);"></div>
<div style="position:absolute;left:473.70px;top:292.70px;width:77.90px;height:0.80px;background:rgba(255,255,255,0.55);"></div>
<div style="position:absolute;left:628.50px;top:277.40px;width:1.00px;height:16.10px;background:rgba(255,255,255,0.55);"></div>
<div style="position:absolute;left:551.60px;top:292.70px;width:77.90px;height:0.80px;background:rgba(255,255,255,0.55);"></div>
<div style="position:absolute;left:706.60px;top:277.40px;width:1.00px;height:16.10px;background:rgba(255,255,255,0.55);"></div>
<div style="position:absolute;left:629.50px;top:292.70px;width:78.10px;height:0.80px;background:rgba(255,255,255,0.55);"></div>
<div style="position:absolute;left:784.60px;top:277.40px;width:1.00px;height:16.10px;background:rgba(255,255,255,0.55);"></div>
<div style="position:absolute;left:707.60px;top:292.70px;width:78.00px;height:0.80px;background:rgba(255,255,255,0.55);"></div>
<div style="position:absolute;left:394.70px;top:292.70px;width:1.00px;height:15.90px;background:rgba(255,255,255,0.55);"></div>
<div style="position:absolute;left:36.50px;top:307.80px;width:359.20px;height:0.80px;background:rgba(255,255,255,0.55);"></div>
<div style="position:absolute;left:472.70px;top:292.70px;width:1.00px;height:15.90px;background:rgba(255,255,255,0.55);"></div>
<div style="position:absolute;left:395.70px;top:307.80px;width:78.00px;height:0.80px;background:rgba(255,255,255,0.55);"></div>
<div style="position:absolute;left:550.60px;top:292.70px;width:1.00px;height:15.90px;background:rgba(255,255,255,0.55);"></div>
<div style="position:absolute;left:473.70px;top:307.80px;width:77.90px;height:0.80px;background:rgba(255,255,255,0.55);"></div>
<div style="position:absolute;left:628.50px;top:292.70px;width:1.00px;height:15.90px;background:rgba(255,255,255,0.55);"></div>
<div style="position:absolute;left:551.60px;top:307.80px;width:77.90px;height:0.80px;background:rgba(255,255,255,0.55);"></div>
<div style="position:absolute;left:706.60px;top:292.70px;width:1.00px;height:15.90px;background:rgba(255,255,255,0.55);"></div>
<div style="position:absolute;left:629.50px;top:307.80px;width:78.10px;height:0.80px;background:rgba(255,255,255,0.55);"></div>
<div style="position:absolute;left:784.60px;top:292.70px;width:1.00px;height:15.90px;background:rgba(255,255,255,0.55);"></div>
<div style="position:absolute;left:707.60px;top:307.80px;width:78.00px;height:0.80px;background:rgba(255,255,255,0.55);"></div>
<div style="position:absolute;left:322.60px;top:315.40px;width:1.00px;height:16.40px;background:rgba(255,255,255,0.55);"></div>
<div style="position:absolute;left:36.50px;top:331.00px;width:287.10px;height:0.80px;background:rgba(255,255,255,0.55);"></div>
<div style="position:absolute;left:394.70px;top:315.40px;width:1.00px;height:16.40px;background:rgba(255,255,255,0.55);"></div>
<div style="position:absolute;left:323.60px;top:331.00px;width:72.10px;height:0.80px;background:rgba(255,255,255,0.55);"></div>
<div style="position:absolute;left:784.60px;top:315.40px;width:1.00px;height:16.40px;background:rgba(255,255,255,0.55);"></div>
<div style="position:absolute;left:395.70px;top:331.00px;width:389.90px;height:0.80px;background:rgba(255,255,255,0.55);"></div>
<div style="position:absolute;left:1337.00px;top:315.40px;width:1.00px;height:16.40px;background:rgba(255,255,255,0.55);"></div>
<div style="position:absolute;left:797.90px;top:331.00px;width:540.10px;height:0.80px;background:rgba(255,255,255,0.55);"></div>
<div style="position:absolute;left:394.70px;top:331.00px;width:1.00px;height:16.20px;background:rgba(255,255,255,0.55);"></div>
<div style="position:absolute;left:323.60px;top:346.40px;width:72.10px;height:0.80px;background:rgba(255,255,255,0.55);"></div>
<div style="position:absolute;left:472.70px;top:331.00px;width:1.00px;height:16.20px;background:rgba(255,255,255,0.55);"></div>
<div style="position:absolute;left:395.70px;top:346.40px;width:78.00px;height:0.80px;background:rgba(255,255,255,0.55);"></div>
<div style="position:absolute;left:550.60px;top:331.00px;width:1.00px;height:16.20px;background:rgba(255,255,255,0.55);"></div>
<div style="position:absolute;left:473.70px;top:346.40px;width:77.90px;height:0.80px;background:rgba(255,255,255,0.55);"></div>
<div style="position:absolute;left:628.50px;top:331.00px;width:1.00px;height:16.20px;background:rgba(255,255,255,0.55);"></div>
<div style="position:absolute;left:551.60px;top:346.40px;width:77.90px;height:0.80px;background:rgba(255,255,255,0.55);"></div>
<div style="position:absolute;left:706.60px;top:331.00px;width:1.00px;height:16.20px;background:rgba(255,255,255,0.55);"></div>
<div style="position:absolute;left:629.50px;top:346.40px;width:78.10px;height:0.80px;background:rgba(255,255,255,0.55);"></div>
<div style="position:absolute;left:784.60px;top:331.00px;width:1.00px;height:16.20px;background:rgba(255,255,255,0.55);"></div>
<div style="position:absolute;left:707.60px;top:346.40px;width:78.00px;height:0.80px;background:rgba(255,255,255,0.55);"></div>
<div style="position:absolute;left:841.00px;top:331.00px;width:1.90px;height:16.20px;background:rgba(255,255,255,0.55);"></div>
<div style="position:absolute;left:841.90px;top:331.00px;width:1.00px;height:16.20px;background:rgba(255,255,255,0.55);"></div>
<div style="position:absolute;left:797.90px;top:346.40px;width:45.00px;height:0.80px;background:rgba(255,255,255,0.55);"></div>
<div style="position:absolute;left:886.00px;top:331.00px;width:1.90px;height:16.20px;background:rgba(255,255,255,0.55);"></div>
<div style="position:absolute;left:886.90px;top:331.00px;width:1.00px;height:16.20px;background:rgba(255,255,255,0.55);"></div>
<div style="position:absolute;left:842.90px;top:346.40px;width:45.00px;height:0.80px;background:rgba(255,255,255,0.55);"></div>
<div style="position:absolute;left:931.00px;top:331.00px;width:1.90px;height:16.20px;background:rgba(255,255,255,0.55);"></div>
<div style="position:absolute;left:931.90px;top:331.00px;width:1.00px;height:16.20px;background:rgba(255,255,255,0.55);"></div>
<div style="position:absolute;left:887.90px;top:346.40px;width:45.00px;height:0.80px;background:rgba(255,255,255,0.55);"></div>
<div style="position:absolute;left:976.00px;top:331.00px;width:1.90px;height:16.20px;background:rgba(255,255,255,0.55);"></div>
<div style="position:absolute;left:976.90px;top:331.00px;width:1.00px;height:16.20px;background:rgba(255,255,255,0.55);"></div>
<div style="position:absolute;left:932.90px;top:346.40px;width:45.00px;height:0.80px;background:rgba(255,255,255,0.55);"></div>
<div style="position:absolute;left:1021.10px;top:331.00px;width:1.90px;height:16.20px;background:rgba(255,255,255,0.55);"></div>
<div style="position:absolute;left:1022.00px;top:331.00px;width:1.00px;height:16.20px;background:rgba(255,255,255,0.55);"></div>
<div style="position:absolute;left:977.90px;top:346.40px;width:45.10px;height:0.80px;background:rgba(255,255,255,0.55);"></div>
<div style="position:absolute;left:1066.10px;top:331.00px;width:1.90px;height:16.20px;background:rgba(255,255,255,0.55);"></div>
<div style="position:absolute;left:1067.00px;top:331.00px;width:1.00px;height:16.20px;background:rgba(255,255,255,0.55);"></div>
<div style="position:absolute;left:1023.00px;top:346.40px;width:45.00px;height:0.80px;background:rgba(255,255,255,0.55);"></div>
<div style="position:absolute;left:1111.10px;top:331.00px;width:1.90px;height:16.20px;background:rgba(255,255,255,0.55);"></div>
<div style="position:absolute;left:1112.00px;top:331.00px;width:1.00px;height:16.20px;background:rgba(255,255,255,0.55);"></div>
<div style="position:absolute;left:1068.00px;top:346.40px;width:45.00px;height:0.80px;background:rgba(255,255,255,0.55);"></div>
<div style="position:absolute;left:1156.10px;top:331.00px;width:1.90px;height:16.20px;background:rgba(255,255,255,0.55);"></div>
<div style="position:absolute;left:1157.00px;top:331.00px;width:1.00px;height:16.20px;background:rgba(255,255,255,0.55);"></div>
<div style="position:absolute;left:1113.00px;top:346.40px;width:45.00px;height:0.80px;background:rgba(255,255,255,0.55);"></div>
<div style="position:absolute;left:1201.20px;top:331.00px;width:1.90px;height:16.20px;background:rgba(255,255,255,0.55);"></div>
<div style="position:absolute;left:1202.10px;top:331.00px;width:1.00px;height:16.20px;background:rgba(255,255,255,0.55);"></div>
<div style="position:absolute;left:1158.00px;top:346.40px;width:45.10px;height:0.80px;background:rgba(255,255,255,0.55);"></div>
<div style="position:absolute;left:1246.20px;top:331.00px;width:1.90px;height:16.20px;background:rgba(255,255,255,0.55);"></div>
<div style="position:absolute;left:1247.10px;top:331.00px;width:1.00px;height:16.20px;background:rgba(255,255,255,0.55);"></div>
<div style="position:absolute;left:1203.10px;top:346.40px;width:45.00px;height:0.80px;background:rgba(255,255,255,0.55);"></div>
<div style="position:absolute;left:1291.30px;top:331.00px;width:1.90px;height:16.20px;background:rgba(255,255,255,0.55);"></div>
<div style="position:absolute;left:1292.20px;top:331.00px;width:1.00px;height:16.20px;background:rgba(255,255,255,0.55);"></div>
<div style="position:absolute;left:1248.10px;top:346.40px;width:45.10px;height:0.80px;background:rgba(255,255,255,0.55);"></div>
<div style="position:absolute;left:1337.00px;top:331.00px;width:1.00px;height:16.20px;background:rgba(255,255,255,0.55);"></div>
<div style="position:absolute;left:1293.20px;top:346.40px;width:44.80px;height:0.80px;background:rgba(255,255,255,0.55);"></div>
<div style="position:absolute;left:472.70px;top:346.40px;width:1.00px;height:16.20px;background:rgba(255,255,255,0.55);"></div>
<div style="position:absolute;left:395.70px;top:361.80px;width:78.00px;height:0.80px;background:rgba(255,255,255,0.55);"></div>
<div style="position:absolute;left:550.60px;top:346.40px;width:1.00px;height:16.20px;background:rgba(255,255,255,0.55);"></div>
<div style="position:absolute;left:473.70px;top:361.80px;width:77.90px;height:0.80px;background:rgba(255,255,255,0.55);"></div>
<div style="position:absolute;left:628.50px;top:346.40px;width:1.00px;height:16.20px;background:rgba(255,255,255,0.55);"></div>
<div style="position:absolute;left:551.60px;top:361.80px;width:77.90px;height:0.80px;background:rgba(255,255,255,0.55);"></div>
<div style="position:absolute;left:706.60px;top:346.40px;width:1.00px;height:16.20px;background:rgba(255,255,255,0.55);"></div>
<div style="position:absolute;left:629.50px;top:361.80px;width:78.10px;height:0.80px;background:rgba(255,255,255,0.55);"></div>
<div style="position:absolute;left:784.60px;top:346.40px;width:1.00px;height:16.20px;background:rgba(255,255,255,0.55);"></div>
<div style="position:absolute;left:707.60px;top:361.80px;width:78.00px;height:0.80px;background:rgba(255,255,255,0.55);"></div>
<div style="position:absolute;left:394.70px;top:361.80px;width:1.00px;height:16.00px;background:rgba(255,255,255,0.55);"></div>
<div style="position:absolute;left:36.50px;top:377.00px;width:359.20px;height:0.80px;background:rgba(255,255,255,0.55);"></div>
<div style="position:absolute;left:472.70px;top:361.80px;width:1.00px;height:16.00px;background:rgba(255,255,255,0.55);"></div>
<div style="position:absolute;left:395.70px;top:377.00px;width:78.00px;height:0.80px;background:rgba(255,255,255,0.55);"></div>
<div style="position:absolute;left:550.60px;top:361.80px;width:1.00px;height:16.00px;background:rgba(255,255,255,0.55);"></div>
<div style="position:absolute;left:473.70px;top:377.00px;width:77.90px;height:0.80px;background:rgba(255,255,255,0.55);"></div>
<div style="position:absolute;left:628.50px;top:361.80px;width:1.00px;height:16.00px;background:rgba(255,255,255,0.55);"></div>
<div style="position:absolute;left:551.60px;top:377.00px;width:77.90px;height:0.80px;background:rgba(255,255,255,0.55);"></div>
<div style="position:absolute;left:706.60px;top:361.80px;width:1.00px;height:16.00px;background:rgba(255,255,255,0.55);"></div>
<div style="position:absolute;left:629.50px;top:377.00px;width:78.10px;height:0.80px;background:rgba(255,255,255,0.55);"></div>
<div style="position:absolute;left:784.60px;top:361.80px;width:1.00px;height:16.00px;background:rgba(255,255,255,0.55);"></div>
<div style="position:absolute;left:707.60px;top:377.00px;width:78.00px;height:0.80px;background:rgba(255,255,255,0.55);"></div>
<div style="position:absolute;left:394.70px;top:384.20px;width:1.00px;height:15.90px;background:rgba(255,255,255,0.55);"></div>
<div style="position:absolute;left:36.50px;top:399.30px;width:359.20px;height:0.80px;background:rgba(255,255,255,0.55);"></div>
<div style="position:absolute;left:472.70px;top:384.20px;width:1.00px;height:15.90px;background:rgba(255,255,255,0.55);"></div>
<div style="position:absolute;left:395.70px;top:399.30px;width:78.00px;height:0.80px;background:rgba(255,255,255,0.55);"></div>
<div style="position:absolute;left:550.60px;top:384.20px;width:1.00px;height:15.90px;background:rgba(255,255,255,0.55);"></div>
<div style="position:absolute;left:473.70px;top:399.30px;width:77.90px;height:0.80px;background:rgba(255,255,255,0.55);"></div>
<div style="position:absolute;left:628.50px;top:384.20px;width:1.00px;height:15.90px;background:rgba(255,255,255,0.55);"></div>
<div style="position:absolute;left:551.60px;top:399.30px;width:77.90px;height:0.80px;background:rgba(255,255,255,0.55);"></div>
<div style="position:absolute;left:706.60px;top:384.20px;width:1.00px;height:15.90px;background:rgba(255,255,255,0.55);"></div>
<div style="position:absolute;left:629.50px;top:399.30px;width:78.10px;height:0.80px;background:rgba(255,255,255,0.55);"></div>
<div style="position:absolute;left:784.60px;top:384.20px;width:1.00px;height:15.90px;background:rgba(255,255,255,0.55);"></div>
<div style="position:absolute;left:707.60px;top:399.30px;width:78.00px;height:0.80px;background:rgba(255,255,255,0.55);"></div>
<div style="position:absolute;left:394.70px;top:406.80px;width:1.00px;height:16.80px;background:rgba(255,255,255,0.55);"></div>
<div style="position:absolute;left:36.50px;top:422.80px;width:359.20px;height:0.80px;background:rgba(255,255,255,0.55);"></div>
<div style="position:absolute;left:784.60px;top:406.80px;width:1.00px;height:16.80px;background:rgba(255,255,255,0.55);"></div>
<div style="position:absolute;left:395.70px;top:422.80px;width:389.90px;height:0.80px;background:rgba(255,255,255,0.55);"></div>
<div style="position:absolute;left:1337.00px;top:406.80px;width:1.00px;height:16.80px;background:rgba(255,255,255,0.55);"></div>
<div style="position:absolute;left:797.90px;top:422.80px;width:540.10px;height:0.80px;background:rgba(255,255,255,0.55);"></div>
<div style="position:absolute;left:472.70px;top:422.80px;width:1.00px;height:14.70px;background:rgba(255,255,255,0.55);"></div>
<div style="position:absolute;left:395.70px;top:436.70px;width:78.00px;height:0.80px;background:rgba(255,255,255,0.55);"></div>
<div style="position:absolute;left:550.60px;top:422.80px;width:1.00px;height:14.70px;background:rgba(255,255,255,0.55);"></div>
<div style="position:absolute;left:473.70px;top:436.70px;width:77.90px;height:0.80px;background:rgba(255,255,255,0.55);"></div>
<div style="position:absolute;left:628.50px;top:422.80px;width:1.00px;height:14.70px;background:rgba(255,255,255,0.55);"></div>
<div style="position:absolute;left:551.60px;top:436.70px;width:77.90px;height:0.80px;background:rgba(255,255,255,0.55);"></div>
<div style="position:absolute;left:706.60px;top:422.80px;width:1.00px;height:14.70px;background:rgba(255,255,255,0.55);"></div>
<div style="position:absolute;left:629.50px;top:436.70px;width:78.10px;height:0.80px;background:rgba(255,255,255,0.55);"></div>
<div style="position:absolute;left:784.60px;top:422.80px;width:1.00px;height:14.70px;background:rgba(255,255,255,0.55);"></div>
<div style="position:absolute;left:707.60px;top:436.70px;width:78.00px;height:0.80px;background:rgba(255,255,255,0.55);"></div>
<div style="position:absolute;left:394.70px;top:436.70px;width:1.00px;height:14.90px;background:rgba(255,255,255,0.55);"></div>
<div style="position:absolute;left:36.50px;top:450.80px;width:359.20px;height:0.80px;background:rgba(255,255,255,0.55);"></div>
<div style="position:absolute;left:472.70px;top:436.70px;width:1.00px;height:14.90px;background:rgba(255,255,255,0.55);"></div>
<div style="position:absolute;left:395.70px;top:450.80px;width:78.00px;height:0.80px;background:rgba(255,255,255,0.55);"></div>
<div style="position:absolute;left:550.60px;top:436.70px;width:1.00px;height:14.90px;background:rgba(255,255,255,0.55);"></div>
<div style="position:absolute;left:473.70px;top:450.80px;width:77.90px;height:0.80px;background:rgba(255,255,255,0.55);"></div>
<div style="position:absolute;left:628.50px;top:436.70px;width:1.00px;height:14.90px;background:rgba(255,255,255,0.55);"></div>
<div style="position:absolute;left:551.60px;top:450.80px;width:77.90px;height:0.80px;background:rgba(255,255,255,0.55);"></div>
<div style="position:absolute;left:706.60px;top:436.70px;width:1.00px;height:14.90px;background:rgba(255,255,255,0.55);"></div>
<div style="position:absolute;left:629.50px;top:450.80px;width:78.10px;height:0.80px;background:rgba(255,255,255,0.55);"></div>
<div style="position:absolute;left:784.60px;top:436.70px;width:1.00px;height:14.90px;background:rgba(255,255,255,0.55);"></div>
<div style="position:absolute;left:707.60px;top:450.80px;width:78.00px;height:0.80px;background:rgba(255,255,255,0.55);"></div>
<div style="position:absolute;left:472.70px;top:450.80px;width:1.00px;height:14.50px;background:rgba(255,255,255,0.55);"></div>
<div style="position:absolute;left:395.70px;top:464.50px;width:78.00px;height:0.80px;background:rgba(255,255,255,0.55);"></div>
<div style="position:absolute;left:550.60px;top:450.80px;width:1.00px;height:14.50px;background:rgba(255,255,255,0.55);"></div>
<div style="position:absolute;left:473.70px;top:464.50px;width:77.90px;height:0.80px;background:rgba(255,255,255,0.55);"></div>
<div style="position:absolute;left:628.50px;top:450.80px;width:1.00px;height:14.50px;background:rgba(255,255,255,0.55);"></div>
<div style="position:absolute;left:551.60px;top:464.50px;width:77.90px;height:0.80px;background:rgba(255,255,255,0.55);"></div>
<div style="position:absolute;left:706.60px;top:450.80px;width:1.00px;height:14.50px;background:rgba(255,255,255,0.55);"></div>
<div style="position:absolute;left:629.50px;top:464.50px;width:78.10px;height:0.80px;background:rgba(255,255,255,0.55);"></div>
<div style="position:absolute;left:784.60px;top:450.80px;width:1.00px;height:14.50px;background:rgba(255,255,255,0.55);"></div>
<div style="position:absolute;left:707.60px;top:464.50px;width:78.00px;height:0.80px;background:rgba(255,255,255,0.55);"></div>
<div style="position:absolute;left:394.70px;top:464.50px;width:1.00px;height:14.50px;background:rgba(255,255,255,0.55);"></div>
<div style="position:absolute;left:36.50px;top:478.20px;width:359.20px;height:0.80px;background:rgba(255,255,255,0.55);"></div>
<div style="position:absolute;left:472.70px;top:464.50px;width:1.00px;height:14.50px;background:rgba(255,255,255,0.55);"></div>
<div style="position:absolute;left:395.70px;top:478.20px;width:78.00px;height:0.80px;background:rgba(255,255,255,0.55);"></div>
<div style="position:absolute;left:550.60px;top:464.50px;width:1.00px;height:14.50px;background:rgba(255,255,255,0.55);"></div>
<div style="position:absolute;left:473.70px;top:478.20px;width:77.90px;height:0.80px;background:rgba(255,255,255,0.55);"></div>
<div style="position:absolute;left:628.50px;top:464.50px;width:1.00px;height:14.50px;background:rgba(255,255,255,0.55);"></div>
<div style="position:absolute;left:551.60px;top:478.20px;width:77.90px;height:0.80px;background:rgba(255,255,255,0.55);"></div>
<div style="position:absolute;left:706.60px;top:464.50px;width:1.00px;height:14.50px;background:rgba(255,255,255,0.55);"></div>
<div style="position:absolute;left:629.50px;top:478.20px;width:78.10px;height:0.80px;background:rgba(255,255,255,0.55);"></div>
<div style="position:absolute;left:784.60px;top:464.50px;width:1.00px;height:14.50px;background:rgba(255,255,255,0.55);"></div>
<div style="position:absolute;left:707.60px;top:478.20px;width:78.00px;height:0.80px;background:rgba(255,255,255,0.55);"></div>
<div style="position:absolute;left:472.70px;top:478.20px;width:1.00px;height:14.50px;background:rgba(255,255,255,0.55);"></div>
<div style="position:absolute;left:395.70px;top:491.90px;width:78.00px;height:0.80px;background:rgba(255,255,255,0.55);"></div>
<div style="position:absolute;left:550.60px;top:478.20px;width:1.00px;height:14.50px;background:rgba(255,255,255,0.55);"></div>
<div style="position:absolute;left:473.70px;top:491.90px;width:77.90px;height:0.80px;background:rgba(255,255,255,0.55);"></div>
<div style="position:absolute;left:628.50px;top:478.20px;width:1.00px;height:14.50px;background:rgba(255,255,255,0.55);"></div>
<div style="position:absolute;left:551.60px;top:491.90px;width:77.90px;height:0.80px;background:rgba(255,255,255,0.55);"></div>
<div style="position:absolute;left:706.60px;top:478.20px;width:1.00px;height:14.50px;background:rgba(255,255,255,0.55);"></div>
<div style="position:absolute;left:629.50px;top:491.90px;width:78.10px;height:0.80px;background:rgba(255,255,255,0.55);"></div>
<div style="position:absolute;left:784.60px;top:478.20px;width:1.00px;height:14.50px;background:rgba(255,255,255,0.55);"></div>
<div style="position:absolute;left:707.60px;top:491.90px;width:78.00px;height:0.80px;background:rgba(255,255,255,0.55);"></div>
<div style="position:absolute;left:394.70px;top:499.70px;width:1.00px;height:17.00px;background:rgba(255,255,255,0.55);"></div>
<div style="position:absolute;left:36.50px;top:515.90px;width:359.20px;height:0.80px;background:rgba(255,255,255,0.55);"></div>
<div style="position:absolute;left:784.60px;top:499.70px;width:1.00px;height:17.00px;background:rgba(255,255,255,0.55);"></div>
<div style="position:absolute;left:395.70px;top:515.90px;width:389.90px;height:0.80px;background:rgba(255,255,255,0.55);"></div>
<div style="position:absolute;left:394.70px;top:515.90px;width:1.00px;height:14.70px;background:rgba(255,255,255,0.55);"></div>
<div style="position:absolute;left:36.50px;top:529.80px;width:359.20px;height:0.80px;background:rgba(255,255,255,0.55);"></div>
<div style="position:absolute;left:472.70px;top:515.90px;width:1.00px;height:14.70px;background:rgba(255,255,255,0.55);"></div>
<div style="position:absolute;left:395.70px;top:529.80px;width:78.00px;height:0.80px;background:rgba(255,255,255,0.55);"></div>
<div style="position:absolute;left:550.60px;top:515.90px;width:1.00px;height:14.70px;background:rgba(255,255,255,0.55);"></div>
<div style="position:absolute;left:473.70px;top:529.80px;width:77.90px;height:0.80px;background:rgba(255,255,255,0.55);"></div>
<div style="position:absolute;left:628.50px;top:515.90px;width:1.00px;height:14.70px;background:rgba(255,255,255,0.55);"></div>
<div style="position:absolute;left:551.60px;top:529.80px;width:77.90px;height:0.80px;background:rgba(255,255,255,0.55);"></div>
<div style="position:absolute;left:706.60px;top:515.90px;width:1.00px;height:14.70px;background:rgba(255,255,255,0.55);"></div>
<div style="position:absolute;left:629.50px;top:529.80px;width:78.10px;height:0.80px;background:rgba(255,255,255,0.55);"></div>
<div style="position:absolute;left:784.60px;top:515.90px;width:1.00px;height:14.70px;background:rgba(255,255,255,0.55);"></div>
<div style="position:absolute;left:707.60px;top:529.80px;width:78.00px;height:0.80px;background:rgba(255,255,255,0.55);"></div>
<div style="position:absolute;left:472.70px;top:529.80px;width:1.00px;height:14.90px;background:rgba(255,255,255,0.55);"></div>
<div style="position:absolute;left:395.70px;top:543.90px;width:78.00px;height:0.80px;background:rgba(255,255,255,0.55);"></div>
<div style="position:absolute;left:550.60px;top:529.80px;width:1.00px;height:14.90px;background:rgba(255,255,255,0.55);"></div>
<div style="position:absolute;left:473.70px;top:543.90px;width:77.90px;height:0.80px;background:rgba(255,255,255,0.55);"></div>
<div style="position:absolute;left:628.50px;top:529.80px;width:1.00px;height:14.90px;background:rgba(255,255,255,0.55);"></div>
<div style="position:absolute;left:551.60px;top:543.90px;width:77.90px;height:0.80px;background:rgba(255,255,255,0.55);"></div>
<div style="position:absolute;left:706.60px;top:529.80px;width:1.00px;height:14.90px;background:rgba(255,255,255,0.55);"></div>
<div style="position:absolute;left:629.50px;top:543.90px;width:78.10px;height:0.80px;background:rgba(255,255,255,0.55);"></div>
<div style="position:absolute;left:784.60px;top:529.80px;width:1.00px;height:14.90px;background:rgba(255,255,255,0.55);"></div>
<div style="position:absolute;left:707.60px;top:543.90px;width:78.00px;height:0.80px;background:rgba(255,255,255,0.55);"></div>
<div style="position:absolute;left:394.70px;top:543.90px;width:1.00px;height:14.70px;background:rgba(255,255,255,0.55);"></div>
<div style="position:absolute;left:36.50px;top:557.80px;width:359.20px;height:0.80px;background:rgba(255,255,255,0.55);"></div>
<div style="position:absolute;left:472.70px;top:543.90px;width:1.00px;height:14.70px;background:rgba(255,255,255,0.55);"></div>
<div style="position:absolute;left:395.70px;top:557.80px;width:78.00px;height:0.80px;background:rgba(255,255,255,0.55);"></div>
<div style="position:absolute;left:550.60px;top:543.90px;width:1.00px;height:14.70px;background:rgba(255,255,255,0.55);"></div>
<div style="position:absolute;left:473.70px;top:557.80px;width:77.90px;height:0.80px;background:rgba(255,255,255,0.55);"></div>
<div style="position:absolute;left:628.50px;top:543.90px;width:1.00px;height:14.70px;background:rgba(255,255,255,0.55);"></div>
<div style="position:absolute;left:551.60px;top:557.80px;width:77.90px;height:0.80px;background:rgba(255,255,255,0.55);"></div>
<div style="position:absolute;left:706.60px;top:543.90px;width:1.00px;height:14.70px;background:rgba(255,255,255,0.55);"></div>
<div style="position:absolute;left:629.50px;top:557.80px;width:78.10px;height:0.80px;background:rgba(255,255,255,0.55);"></div>
<div style="position:absolute;left:784.60px;top:543.90px;width:1.00px;height:14.70px;background:rgba(255,255,255,0.55);"></div>
<div style="position:absolute;left:707.60px;top:557.80px;width:78.00px;height:0.80px;background:rgba(255,255,255,0.55);"></div>
<div style="position:absolute;left:394.70px;top:564.70px;width:1.00px;height:16.90px;background:rgba(255,255,255,0.55);"></div>
<div style="position:absolute;left:36.50px;top:580.80px;width:359.20px;height:0.80px;background:rgba(255,255,255,0.55);"></div>
<div style="position:absolute;left:784.60px;top:564.70px;width:1.00px;height:16.90px;background:rgba(255,255,255,0.55);"></div>
<div style="position:absolute;left:395.70px;top:580.80px;width:389.90px;height:0.80px;background:rgba(255,255,255,0.55);"></div>
<div style="position:absolute;left:394.70px;top:580.80px;width:1.00px;height:15.00px;background:rgba(255,255,255,0.55);"></div>
<div style="position:absolute;left:36.50px;top:595.00px;width:359.20px;height:0.80px;background:rgba(255,255,255,0.55);"></div>
<div style="position:absolute;left:472.70px;top:580.80px;width:1.00px;height:15.00px;background:rgba(255,255,255,0.55);"></div>
<div style="position:absolute;left:395.70px;top:595.00px;width:78.00px;height:0.80px;background:rgba(255,255,255,0.55);"></div>
<div style="position:absolute;left:550.60px;top:580.80px;width:1.00px;height:15.00px;background:rgba(255,255,255,0.55);"></div>
<div style="position:absolute;left:473.70px;top:595.00px;width:77.90px;height:0.80px;background:rgba(255,255,255,0.55);"></div>
<div style="position:absolute;left:628.50px;top:580.80px;width:1.00px;height:15.00px;background:rgba(255,255,255,0.55);"></div>
<div style="position:absolute;left:551.60px;top:595.00px;width:77.90px;height:0.80px;background:rgba(255,255,255,0.55);"></div>
<div style="position:absolute;left:706.60px;top:580.80px;width:1.00px;height:15.00px;background:rgba(255,255,255,0.55);"></div>
<div style="position:absolute;left:629.50px;top:595.00px;width:78.10px;height:0.80px;background:rgba(255,255,255,0.55);"></div>
<div style="position:absolute;left:784.60px;top:580.80px;width:1.00px;height:15.00px;background:rgba(255,255,255,0.55);"></div>
<div style="position:absolute;left:707.60px;top:595.00px;width:78.00px;height:0.80px;background:rgba(255,255,255,0.55);"></div>
<div style="position:absolute;left:394.70px;top:595.00px;width:1.00px;height:14.70px;background:rgba(255,255,255,0.55);"></div>
<div style="position:absolute;left:36.50px;top:608.90px;width:359.20px;height:0.80px;background:rgba(255,255,255,0.55);"></div>
<div style="position:absolute;left:472.70px;top:595.00px;width:1.00px;height:14.70px;background:rgba(255,255,255,0.55);"></div>
<div style="position:absolute;left:395.70px;top:608.90px;width:78.00px;height:0.80px;background:rgba(255,255,255,0.55);"></div>
<div style="position:absolute;left:550.60px;top:595.00px;width:1.00px;height:14.70px;background:rgba(255,255,255,0.55);"></div>
<div style="position:absolute;left:473.70px;top:608.90px;width:77.90px;height:0.80px;background:rgba(255,255,255,0.55);"></div>
<div style="position:absolute;left:628.50px;top:595.00px;width:1.00px;height:14.70px;background:rgba(255,255,255,0.55);"></div>
<div style="position:absolute;left:551.60px;top:608.90px;width:77.90px;height:0.80px;background:rgba(255,255,255,0.55);"></div>
<div style="position:absolute;left:706.60px;top:595.00px;width:1.00px;height:14.70px;background:rgba(255,255,255,0.55);"></div>
<div style="position:absolute;left:629.50px;top:608.90px;width:78.10px;height:0.80px;background:rgba(255,255,255,0.55);"></div>
<div style="position:absolute;left:784.60px;top:595.00px;width:1.00px;height:14.70px;background:rgba(255,255,255,0.55);"></div>
<div style="position:absolute;left:707.60px;top:608.90px;width:78.00px;height:0.80px;background:rgba(255,255,255,0.55);"></div>
<div style="position:absolute;left:394.70px;top:608.90px;width:1.00px;height:14.60px;background:rgba(255,255,255,0.55);"></div>
<div style="position:absolute;left:36.50px;top:622.70px;width:359.20px;height:0.80px;background:rgba(255,255,255,0.55);"></div>
<div style="position:absolute;left:472.70px;top:608.90px;width:1.00px;height:14.60px;background:rgba(255,255,255,0.55);"></div>
<div style="position:absolute;left:395.70px;top:622.70px;width:78.00px;height:0.80px;background:rgba(255,255,255,0.55);"></div>
<div style="position:absolute;left:550.60px;top:608.90px;width:1.00px;height:14.60px;background:rgba(255,255,255,0.55);"></div>
<div style="position:absolute;left:473.70px;top:622.70px;width:77.90px;height:0.80px;background:rgba(255,255,255,0.55);"></div>
<div style="position:absolute;left:628.50px;top:608.90px;width:1.00px;height:14.60px;background:rgba(255,255,255,0.55);"></div>
<div style="position:absolute;left:551.60px;top:622.70px;width:77.90px;height:0.80px;background:rgba(255,255,255,0.55);"></div>
<div style="position:absolute;left:706.60px;top:608.90px;width:1.00px;height:14.60px;background:rgba(255,255,255,0.55);"></div>
<div style="position:absolute;left:629.50px;top:622.70px;width:78.10px;height:0.80px;background:rgba(255,255,255,0.55);"></div>
<div style="position:absolute;left:784.60px;top:608.90px;width:1.00px;height:14.60px;background:rgba(255,255,255,0.55);"></div>
<div style="position:absolute;left:707.60px;top:622.70px;width:78.00px;height:0.80px;background:rgba(255,255,255,0.55);"></div>
<div style="position:absolute;left:394.70px;top:622.70px;width:1.00px;height:14.50px;background:rgba(255,255,255,0.55);"></div>
<div style="position:absolute;left:36.50px;top:636.40px;width:359.20px;height:0.80px;background:rgba(255,255,255,0.55);"></div>
<div style="position:absolute;left:472.70px;top:622.70px;width:1.00px;height:14.50px;background:rgba(255,255,255,0.55);"></div>
<div style="position:absolute;left:395.70px;top:636.40px;width:78.00px;height:0.80px;background:rgba(255,255,255,0.55);"></div>
<div style="position:absolute;left:550.60px;top:622.70px;width:1.00px;height:14.50px;background:rgba(255,255,255,0.55);"></div>
<div style="position:absolute;left:473.70px;top:636.40px;width:77.90px;height:0.80px;background:rgba(255,255,255,0.55);"></div>
<div style="position:absolute;left:628.50px;top:622.70px;width:1.00px;height:14.50px;background:rgba(255,255,255,0.55);"></div>
<div style="position:absolute;left:551.60px;top:636.40px;width:77.90px;height:0.80px;background:rgba(255,255,255,0.55);"></div>
<div style="position:absolute;left:706.60px;top:622.70px;width:1.00px;height:14.50px;background:rgba(255,255,255,0.55);"></div>
<div style="position:absolute;left:629.50px;top:636.40px;width:78.10px;height:0.80px;background:rgba(255,255,255,0.55);"></div>
<div style="position:absolute;left:784.60px;top:622.70px;width:1.00px;height:14.50px;background:rgba(255,255,255,0.55);"></div>
<div style="position:absolute;left:707.60px;top:636.40px;width:78.00px;height:0.80px;background:rgba(255,255,255,0.55);"></div>
<div style="position:absolute;left:394.70px;top:636.40px;width:1.00px;height:14.60px;background:rgba(255,255,255,0.55);"></div>
<div style="position:absolute;left:36.50px;top:650.20px;width:359.20px;height:0.80px;background:rgba(255,255,255,0.55);"></div>
<div style="position:absolute;left:472.70px;top:636.40px;width:1.00px;height:14.60px;background:rgba(255,255,255,0.55);"></div>
<div style="position:absolute;left:395.70px;top:650.20px;width:78.00px;height:0.80px;background:rgba(255,255,255,0.55);"></div>
<div style="position:absolute;left:550.60px;top:636.40px;width:1.00px;height:14.60px;background:rgba(255,255,255,0.55);"></div>
<div style="position:absolute;left:473.70px;top:650.20px;width:77.90px;height:0.80px;background:rgba(255,255,255,0.55);"></div>
<div style="position:absolute;left:628.50px;top:636.40px;width:1.00px;height:14.60px;background:rgba(255,255,255,0.55);"></div>
<div style="position:absolute;left:551.60px;top:650.20px;width:77.90px;height:0.80px;background:rgba(255,255,255,0.55);"></div>
<div style="position:absolute;left:706.60px;top:636.40px;width:1.00px;height:14.60px;background:rgba(255,255,255,0.55);"></div>
<div style="position:absolute;left:629.50px;top:650.20px;width:78.10px;height:0.80px;background:rgba(255,255,255,0.55);"></div>
<div style="position:absolute;left:784.60px;top:636.40px;width:1.00px;height:14.60px;background:rgba(255,255,255,0.55);"></div>
<div style="position:absolute;left:707.60px;top:650.20px;width:78.00px;height:0.80px;background:rgba(255,255,255,0.55);"></div>
<div style="position:absolute;left:394.70px;top:650.20px;width:1.00px;height:14.90px;background:rgba(255,255,255,0.55);"></div>
<div style="position:absolute;left:36.50px;top:664.30px;width:359.20px;height:0.80px;background:rgba(255,255,255,0.55);"></div>
<div style="position:absolute;left:472.70px;top:650.20px;width:1.00px;height:14.90px;background:rgba(255,255,255,0.55);"></div>
<div style="position:absolute;left:395.70px;top:664.30px;width:78.00px;height:0.80px;background:rgba(255,255,255,0.55);"></div>
<div style="position:absolute;left:550.60px;top:650.20px;width:1.00px;height:14.90px;background:rgba(255,255,255,0.55);"></div>
<div style="position:absolute;left:473.70px;top:664.30px;width:77.90px;height:0.80px;background:rgba(255,255,255,0.55);"></div>
<div style="position:absolute;left:628.50px;top:650.20px;width:1.00px;height:14.90px;background:rgba(255,255,255,0.55);"></div>
<div style="position:absolute;left:551.60px;top:664.30px;width:77.90px;height:0.80px;background:rgba(255,255,255,0.55);"></div>
<div style="position:absolute;left:706.60px;top:650.20px;width:1.00px;height:14.90px;background:rgba(255,255,255,0.55);"></div>
<div style="position:absolute;left:629.50px;top:664.30px;width:78.10px;height:0.80px;background:rgba(255,255,255,0.55);"></div>
<div style="position:absolute;left:784.60px;top:650.20px;width:1.00px;height:14.90px;background:rgba(255,255,255,0.55);"></div>
<div style="position:absolute;left:707.60px;top:664.30px;width:78.00px;height:0.80px;background:rgba(255,255,255,0.55);"></div>
<div style="position:absolute;left:394.70px;top:664.30px;width:1.00px;height:14.80px;background:rgba(255,255,255,0.55);"></div>
<div style="position:absolute;left:36.50px;top:678.30px;width:359.20px;height:0.80px;background:rgba(255,255,255,0.55);"></div>
<div style="position:absolute;left:472.70px;top:664.30px;width:1.00px;height:14.80px;background:rgba(255,255,255,0.55);"></div>
<div style="position:absolute;left:395.70px;top:678.30px;width:78.00px;height:0.80px;background:rgba(255,255,255,0.55);"></div>
<div style="position:absolute;left:550.60px;top:664.30px;width:1.00px;height:14.80px;background:rgba(255,255,255,0.55);"></div>
<div style="position:absolute;left:473.70px;top:678.30px;width:77.90px;height:0.80px;background:rgba(255,255,255,0.55);"></div>
<div style="position:absolute;left:628.50px;top:664.30px;width:1.00px;height:14.80px;background:rgba(255,255,255,0.55);"></div>
<div style="position:absolute;left:551.60px;top:678.30px;width:77.90px;height:0.80px;background:rgba(255,255,255,0.55);"></div>
<div style="position:absolute;left:706.60px;top:664.30px;width:1.00px;height:14.80px;background:rgba(255,255,255,0.55);"></div>
<div style="position:absolute;left:629.50px;top:678.30px;width:78.10px;height:0.80px;background:rgba(255,255,255,0.55);"></div>
<div style="position:absolute;left:784.60px;top:664.30px;width:1.00px;height:14.80px;background:rgba(255,255,255,0.55);"></div>
<div style="position:absolute;left:707.60px;top:678.30px;width:78.00px;height:0.80px;background:rgba(255,255,255,0.55);"></div>
<div style="position:absolute;left:394.70px;top:678.30px;width:1.00px;height:14.80px;background:rgba(255,255,255,0.55);"></div>
<div style="position:absolute;left:36.50px;top:692.30px;width:359.20px;height:0.80px;background:rgba(255,255,255,0.55);"></div>
<div style="position:absolute;left:472.70px;top:678.30px;width:1.00px;height:14.80px;background:rgba(255,255,255,0.55);"></div>
<div style="position:absolute;left:395.70px;top:692.30px;width:78.00px;height:0.80px;background:rgba(255,255,255,0.55);"></div>
<div style="position:absolute;left:550.60px;top:678.30px;width:1.00px;height:14.80px;background:rgba(255,255,255,0.55);"></div>
<div style="position:absolute;left:473.70px;top:692.30px;width:77.90px;height:0.80px;background:rgba(255,255,255,0.55);"></div>
<div style="position:absolute;left:628.50px;top:678.30px;width:1.00px;height:14.80px;background:rgba(255,255,255,0.55);"></div>
<div style="position:absolute;left:551.60px;top:692.30px;width:77.90px;height:0.80px;background:rgba(255,255,255,0.55);"></div>
<div style="position:absolute;left:706.60px;top:678.30px;width:1.00px;height:14.80px;background:rgba(255,255,255,0.55);"></div>
<div style="position:absolute;left:629.50px;top:692.30px;width:78.10px;height:0.80px;background:rgba(255,255,255,0.55);"></div>
<div style="position:absolute;left:784.60px;top:678.30px;width:1.00px;height:14.80px;background:rgba(255,255,255,0.55);"></div>
<div style="position:absolute;left:707.60px;top:692.30px;width:78.00px;height:0.80px;background:rgba(255,255,255,0.55);"></div>
<div style="position:absolute;left:394.70px;top:692.30px;width:1.00px;height:14.70px;background:rgba(255,255,255,0.55);"></div>
<div style="position:absolute;left:36.50px;top:706.20px;width:359.20px;height:0.80px;background:rgba(255,255,255,0.55);"></div>
<div style="position:absolute;left:472.70px;top:692.30px;width:1.00px;height:14.70px;background:rgba(255,255,255,0.55);"></div>
<div style="position:absolute;left:395.70px;top:706.20px;width:78.00px;height:0.80px;background:rgba(255,255,255,0.55);"></div>
<div style="position:absolute;left:550.60px;top:692.30px;width:1.00px;height:14.70px;background:rgba(255,255,255,0.55);"></div>
<div style="position:absolute;left:473.70px;top:706.20px;width:77.90px;height:0.80px;background:rgba(255,255,255,0.55);"></div>
<div style="position:absolute;left:628.50px;top:692.30px;width:1.00px;height:14.70px;background:rgba(255,255,255,0.55);"></div>
<div style="position:absolute;left:551.60px;top:706.20px;width:77.90px;height:0.80px;background:rgba(255,255,255,0.55);"></div>
<div style="position:absolute;left:706.60px;top:692.30px;width:1.00px;height:14.70px;background:rgba(255,255,255,0.55);"></div>
<div style="position:absolute;left:629.50px;top:706.20px;width:78.10px;height:0.80px;background:rgba(255,255,255,0.55);"></div>
<div style="position:absolute;left:784.60px;top:692.30px;width:1.00px;height:14.70px;background:rgba(255,255,255,0.55);"></div>
<div style="position:absolute;left:707.60px;top:706.20px;width:78.00px;height:0.80px;background:rgba(255,255,255,0.55);"></div>
<div style="position:absolute;left:394.70px;top:706.20px;width:1.00px;height:14.30px;background:rgba(255,255,255,0.55);"></div>
<div style="position:absolute;left:36.50px;top:719.70px;width:359.20px;height:0.80px;background:rgba(255,255,255,0.55);"></div>
<div style="position:absolute;left:472.70px;top:706.20px;width:1.00px;height:14.30px;background:rgba(255,255,255,0.55);"></div>
<div style="position:absolute;left:395.70px;top:719.70px;width:78.00px;height:0.80px;background:rgba(255,255,255,0.55);"></div>
<div style="position:absolute;left:550.60px;top:706.20px;width:1.00px;height:14.30px;background:rgba(255,255,255,0.55);"></div>
<div style="position:absolute;left:473.70px;top:719.70px;width:77.90px;height:0.80px;background:rgba(255,255,255,0.55);"></div>
<div style="position:absolute;left:628.50px;top:706.20px;width:1.00px;height:14.30px;background:rgba(255,255,255,0.55);"></div>
<div style="position:absolute;left:551.60px;top:719.70px;width:77.90px;height:0.80px;background:rgba(255,255,255,0.55);"></div>
<div style="position:absolute;left:706.60px;top:706.20px;width:1.00px;height:14.30px;background:rgba(255,255,255,0.55);"></div>
<div style="position:absolute;left:629.50px;top:719.70px;width:78.10px;height:0.80px;background:rgba(255,255,255,0.55);"></div>
<div style="position:absolute;left:784.60px;top:706.20px;width:1.00px;height:14.30px;background:rgba(255,255,255,0.55);"></div>
<div style="position:absolute;left:707.60px;top:719.70px;width:78.00px;height:0.80px;background:rgba(255,255,255,0.55);"></div>
<div style="position:absolute;left:394.70px;top:727.00px;width:1.00px;height:16.50px;background:rgba(255,255,255,0.55);"></div>
<div style="position:absolute;left:36.50px;top:742.70px;width:359.20px;height:0.80px;background:rgba(255,255,255,0.55);"></div>
<div style="position:absolute;left:784.60px;top:727.00px;width:1.00px;height:16.50px;background:rgba(255,255,255,0.55);"></div>
<div style="position:absolute;left:395.70px;top:742.70px;width:389.90px;height:0.80px;background:rgba(255,255,255,0.55);"></div>
<div style="position:absolute;left:472.70px;top:742.70px;width:1.00px;height:14.90px;background:rgba(255,255,255,0.55);"></div>
<div style="position:absolute;left:395.70px;top:756.80px;width:78.00px;height:0.80px;background:rgba(255,255,255,0.55);"></div>
<div style="position:absolute;left:550.60px;top:742.70px;width:1.00px;height:14.90px;background:rgba(255,255,255,0.55);"></div>
<div style="position:absolute;left:473.70px;top:756.80px;width:77.90px;height:0.80px;background:rgba(255,255,255,0.55);"></div>
<div style="position:absolute;left:628.50px;top:742.70px;width:1.00px;height:14.90px;background:rgba(255,255,255,0.55);"></div>
<div style="position:absolute;left:551.60px;top:756.80px;width:77.90px;height:0.80px;background:rgba(255,255,255,0.55);"></div>
<div style="position:absolute;left:706.60px;top:742.70px;width:1.00px;height:14.90px;background:rgba(255,255,255,0.55);"></div>
<div style="position:absolute;left:629.50px;top:756.80px;width:78.10px;height:0.80px;background:rgba(255,255,255,0.55);"></div>
<div style="position:absolute;left:784.60px;top:742.70px;width:1.00px;height:14.90px;background:rgba(255,255,255,0.55);"></div>
<div style="position:absolute;left:707.60px;top:756.80px;width:78.00px;height:0.80px;background:rgba(255,255,255,0.55);"></div>
<div style="position:absolute;left:472.70px;top:756.80px;width:1.00px;height:14.60px;background:rgba(255,255,255,0.55);"></div>
<div style="position:absolute;left:395.70px;top:770.60px;width:78.00px;height:0.80px;background:rgba(255,255,255,0.55);"></div>
<div style="position:absolute;left:550.60px;top:756.80px;width:1.00px;height:14.60px;background:rgba(255,255,255,0.55);"></div>
<div style="position:absolute;left:473.70px;top:770.60px;width:77.90px;height:0.80px;background:rgba(255,255,255,0.55);"></div>
<div style="position:absolute;left:628.50px;top:756.80px;width:1.00px;height:14.60px;background:rgba(255,255,255,0.55);"></div>
<div style="position:absolute;left:551.60px;top:770.60px;width:77.90px;height:0.80px;background:rgba(255,255,255,0.55);"></div>
<div style="position:absolute;left:706.60px;top:756.80px;width:1.00px;height:14.60px;background:rgba(255,255,255,0.55);"></div>
<div style="position:absolute;left:629.50px;top:770.60px;width:78.10px;height:0.80px;background:rgba(255,255,255,0.55);"></div>
<div style="position:absolute;left:784.60px;top:756.80px;width:1.00px;height:14.60px;background:rgba(255,255,255,0.55);"></div>
<div style="position:absolute;left:707.60px;top:770.60px;width:78.00px;height:0.80px;background:rgba(255,255,255,0.55);"></div>
<div style="position:absolute;left:472.70px;top:770.60px;width:1.00px;height:14.50px;background:rgba(255,255,255,0.55);"></div>
<div style="position:absolute;left:395.70px;top:784.30px;width:78.00px;height:0.80px;background:rgba(255,255,255,0.55);"></div>
<div style="position:absolute;left:550.60px;top:770.60px;width:1.00px;height:14.50px;background:rgba(255,255,255,0.55);"></div>
<div style="position:absolute;left:473.70px;top:784.30px;width:77.90px;height:0.80px;background:rgba(255,255,255,0.55);"></div>
<div style="position:absolute;left:628.50px;top:770.60px;width:1.00px;height:14.50px;background:rgba(255,255,255,0.55);"></div>
<div style="position:absolute;left:551.60px;top:784.30px;width:77.90px;height:0.80px;background:rgba(255,255,255,0.55);"></div>
<div style="position:absolute;left:706.60px;top:770.60px;width:1.00px;height:14.50px;background:rgba(255,255,255,0.55);"></div>
<div style="position:absolute;left:629.50px;top:784.30px;width:78.10px;height:0.80px;background:rgba(255,255,255,0.55);"></div>
<div style="position:absolute;left:784.60px;top:770.60px;width:1.00px;height:14.50px;background:rgba(255,255,255,0.55);"></div>
<div style="position:absolute;left:707.60px;top:784.30px;width:78.00px;height:0.80px;background:rgba(255,255,255,0.55);"></div>
<div style="position:absolute;left:472.70px;top:784.30px;width:1.00px;height:15.00px;background:rgba(255,255,255,0.55);"></div>
<div style="position:absolute;left:395.70px;top:798.50px;width:78.00px;height:0.80px;background:rgba(255,255,255,0.55);"></div>
<div style="position:absolute;left:550.60px;top:784.30px;width:1.00px;height:15.00px;background:rgba(255,255,255,0.55);"></div>
<div style="position:absolute;left:473.70px;top:798.50px;width:77.90px;height:0.80px;background:rgba(255,255,255,0.55);"></div>
<div style="position:absolute;left:628.50px;top:784.30px;width:1.00px;height:15.00px;background:rgba(255,255,255,0.55);"></div>
<div style="position:absolute;left:551.60px;top:798.50px;width:77.90px;height:0.80px;background:rgba(255,255,255,0.55);"></div>
<div style="position:absolute;left:706.60px;top:784.30px;width:1.00px;height:15.00px;background:rgba(255,255,255,0.55);"></div>
<div style="position:absolute;left:629.50px;top:798.50px;width:78.10px;height:0.80px;background:rgba(255,255,255,0.55);"></div>
<div style="position:absolute;left:784.60px;top:784.30px;width:1.00px;height:15.00px;background:rgba(255,255,255,0.55);"></div>
<div style="position:absolute;left:707.60px;top:798.50px;width:78.00px;height:0.80px;background:rgba(255,255,255,0.55);"></div>
<div style="position:absolute;left:874.30px;top:435.80px;width:4.70px;height:4.70px;background:#f07a6c;"></div>
<div class="t" style="left:881.40px;top:431.69px;font-size:11px;line-height:11px;color:#1a1a1a;font-weight:bold;letter-spacing:-0.128px;-webkit-text-stroke:0.3px #1a1a1a;">Total New Customers (online + offline)</div>
<div style="position:absolute;left:1151.80px;top:435.80px;width:4.70px;height:4.70px;background:#4cb2e6;"></div>
<div class="t" style="left:1159.80px;top:431.69px;font-size:11px;line-height:11px;color:#1a1a1a;font-weight:bold;letter-spacing:-0.302px;-webkit-text-stroke:0.3px #1a1a1a;">Products (Units) Sold</div>
<div style="position:absolute;left:859.60px;top:664.00px;width:478.10px;height:1.00px;background:#a9d9f2;"></div>
<div class="t" style="left:812.40px;top:658.86px;font-size:10.8px;line-height:10.8px;color:#1a1a1a;font-weight:bold;letter-spacing:0.315px;-webkit-text-stroke:0.3px #1a1a1a;">20,000</div>
<div style="position:absolute;left:859.60px;top:635.00px;width:478.10px;height:1.00px;background:#a9d9f2;"></div>
<div class="t" style="left:812.40px;top:629.86px;font-size:10.8px;line-height:10.8px;color:#1a1a1a;font-weight:bold;letter-spacing:0.315px;-webkit-text-stroke:0.3px #1a1a1a;">40,000</div>
<div style="position:absolute;left:859.60px;top:606.00px;width:478.10px;height:1.00px;background:#a9d9f2;"></div>
<div class="t" style="left:812.40px;top:600.86px;font-size:10.8px;line-height:10.8px;color:#1a1a1a;font-weight:bold;letter-spacing:0.315px;-webkit-text-stroke:0.3px #1a1a1a;">60,000</div>
<div style="position:absolute;left:859.60px;top:576.00px;width:478.10px;height:1.00px;background:#a9d9f2;"></div>
<div class="t" style="left:812.40px;top:571.86px;font-size:10.8px;line-height:10.8px;color:#1a1a1a;font-weight:bold;letter-spacing:0.315px;-webkit-text-stroke:0.3px #1a1a1a;">80,000</div>
<div style="position:absolute;left:859.60px;top:547.00px;width:478.10px;height:1.00px;background:#a9d9f2;"></div>
<div class="t" style="left:806.80px;top:541.86px;font-size:10.8px;line-height:10.8px;color:#1a1a1a;font-weight:bold;letter-spacing:0.195px;-webkit-text-stroke:0.3px #1a1a1a;">100,000</div>
<div style="position:absolute;left:859.60px;top:518.00px;width:478.10px;height:1.00px;background:#a9d9f2;"></div>
<div class="t" style="left:806.80px;top:512.86px;font-size:10.8px;line-height:10.8px;color:#1a1a1a;font-weight:bold;letter-spacing:0.195px;-webkit-text-stroke:0.3px #1a1a1a;">120,000</div>
<div style="position:absolute;left:859.60px;top:489.00px;width:478.10px;height:1.00px;background:#a9d9f2;"></div>
<div class="t" style="left:806.80px;top:483.86px;font-size:10.8px;line-height:10.8px;color:#1a1a1a;font-weight:bold;letter-spacing:0.195px;-webkit-text-stroke:0.3px #1a1a1a;">140,000</div>
<div style="position:absolute;left:859.60px;top:460.00px;width:478.10px;height:1.00px;background:#a9d9f2;"></div>
<div class="t" style="left:806.80px;top:454.86px;font-size:10.8px;line-height:10.8px;color:#1a1a1a;font-weight:bold;letter-spacing:0.195px;-webkit-text-stroke:0.3px #1a1a1a;">160,000</div>
<div style="position:absolute;left:859.60px;top:693.00px;width:478.10px;height:1.60px;background:#a9d9f2;"></div>
<div class="t" style="left:837.40px;top:687.86px;font-size:10.8px;line-height:10.8px;color:#1a1a1a;font-weight:bold;">-</div>
<div style="position:absolute;left:859.10px;top:693.80px;width:1.10px;height:3.00px;background:#a9d9f2;"></div>
<div style="position:absolute;left:954.72px;top:693.80px;width:1.10px;height:3.00px;background:#a9d9f2;"></div>
<div style="position:absolute;left:1050.34px;top:693.80px;width:1.10px;height:3.00px;background:#a9d9f2;"></div>
<div style="position:absolute;left:1145.96px;top:693.80px;width:1.10px;height:3.00px;background:#a9d9f2;"></div>
<div style="position:absolute;left:1241.58px;top:693.80px;width:1.10px;height:3.00px;background:#a9d9f2;"></div>
<div style="position:absolute;left:1337.20px;top:693.80px;width:1.10px;height:3.00px;background:#a9d9f2;"></div>
<div style="position:absolute;left:880.30px;top:692.34px;width:27.20px;height:1.46px;background:#f07a6c;"></div>
<div style="position:absolute;left:907.50px;top:691.85px;width:27.20px;height:1.95px;background:#4cb2e6;"></div>
<div class="t" style="left:894.90px;top:708.86px;font-size:10.8px;line-height:10.8px;color:#1a1a1a;font-weight:bold;letter-spacing:0.394px;-webkit-text-stroke:0.3px #1a1a1a;">2026</div>
<div style="position:absolute;left:975.92px;top:688.82px;width:27.20px;height:4.98px;background:#f07a6c;"></div>
<div style="position:absolute;left:1003.12px;top:684.19px;width:27.20px;height:9.61px;background:#4cb2e6;"></div>
<div class="t" style="left:990.52px;top:708.86px;font-size:10.8px;line-height:10.8px;color:#1a1a1a;font-weight:bold;letter-spacing:0.394px;-webkit-text-stroke:0.3px #1a1a1a;">2027</div>
<div style="position:absolute;left:1071.54px;top:682.85px;width:27.20px;height:10.95px;background:#f07a6c;"></div>
<div style="position:absolute;left:1098.74px;top:660.95px;width:27.20px;height:32.85px;background:#4cb2e6;"></div>
<div class="t" style="left:1086.14px;top:708.86px;font-size:10.8px;line-height:10.8px;color:#1a1a1a;font-weight:bold;letter-spacing:0.394px;-webkit-text-stroke:0.3px #1a1a1a;">2028</div>
<div style="position:absolute;left:1167.16px;top:673.52px;width:27.20px;height:20.28px;background:#f07a6c;"></div>
<div style="position:absolute;left:1194.36px;top:603.39px;width:27.20px;height:90.41px;background:#4cb2e6;"></div>
<div class="t" style="left:1181.76px;top:708.86px;font-size:10.8px;line-height:10.8px;color:#1a1a1a;font-weight:bold;letter-spacing:0.394px;-webkit-text-stroke:0.3px #1a1a1a;">2029</div>
<div style="position:absolute;left:1262.78px;top:663.73px;width:27.20px;height:30.07px;background:#f07a6c;"></div>
<div style="position:absolute;left:1289.98px;top:492.82px;width:27.20px;height:200.98px;background:#4cb2e6;"></div>
<div class="t" style="left:1277.38px;top:708.86px;font-size:10.8px;line-height:10.8px;color:#1a1a1a;font-weight:bold;letter-spacing:0.394px;-webkit-text-stroke:0.3px #1a1a1a;">2030</div>
</body></html>
